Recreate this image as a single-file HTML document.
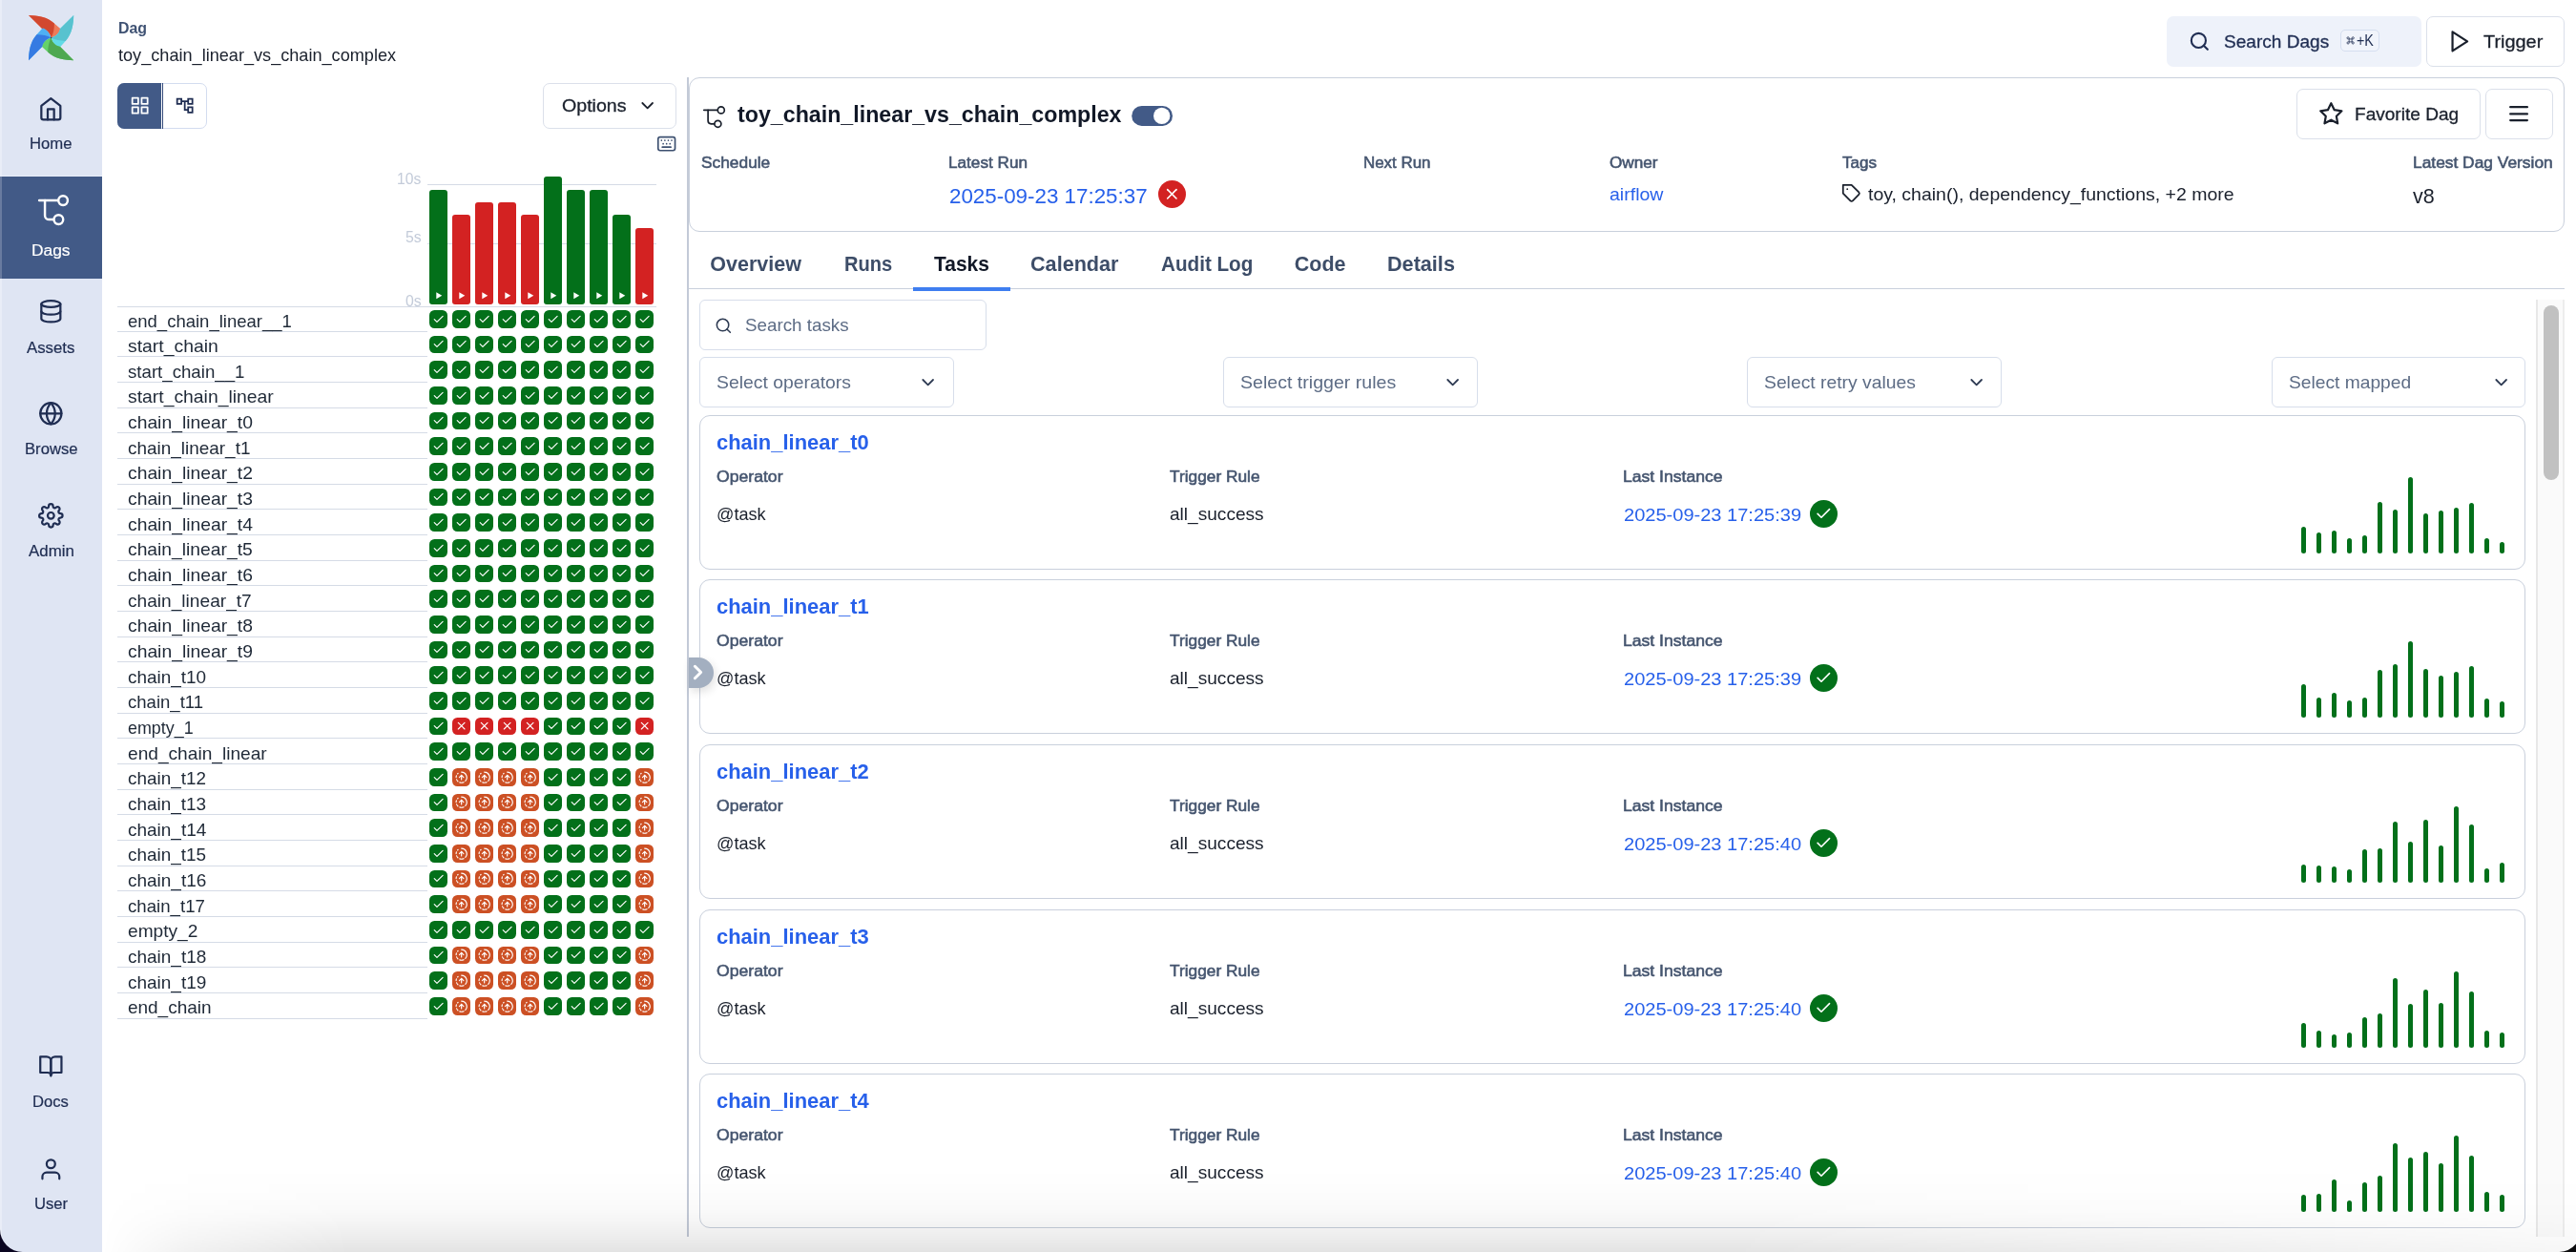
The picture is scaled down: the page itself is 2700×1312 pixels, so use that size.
<!DOCTYPE html>
<html><head><meta charset="utf-8"><title>toy_chain_linear_vs_chain_complex - Airflow</title>
<style>
html,body{margin:0;padding:0;}
body{width:2700px;height:1312px;overflow:hidden;background:#fff;position:relative;font-family:"Liberation Sans",sans-serif;}
.b{position:absolute;box-sizing:border-box;}
.t{position:absolute;white-space:nowrap;transform-origin:0 50%;font-family:"Liberation Sans",sans-serif;}
svg{overflow:visible;}
</style></head><body>
<div class="b" style="left:0;top:0;width:2700px;height:1312px;background:#fff;overflow:hidden;will-change:transform;" id="win">
<div class="b" style="left:0.00px;top:0.00px;width:106.70px;height:1312.00px;background:#dfe5f3;"></div>
<div class="b" style="left:0.00px;top:0.00px;width:2.00px;height:1312.00px;background:#e9edf7;"></div>
<div class="b" style="left:0.00px;top:185.20px;width:106.70px;height:106.80px;background:#425a87;"></div>
<div class="b" style="left:0.00px;top:185.20px;width:2.00px;height:106.80px;background:#697ba0;"></div>
<div class="b" style="left:0.00px;top:184.00px;width:106.70px;height:1.20px;background:#e9eef9;"></div>
<svg class="b" style="left:29.95px;top:15.95px;" width="47.20" height="47.20" viewBox="0 0 47.2 47.2"><g transform="rotate(0 23.6 23.6)"><path fill="#ee7b5a" d="M0,0 C9,0.2 19.5,1.6 26.9,8.5 L33.2,14.1 Q34,14.8 33.4,15.8 C32,19 28.5,22.3 23.6,23.6 C22.8,20 20.5,15.5 14.1,14.1 Z"/><path fill="#d2482f" d="M0,0 C9,0.2 19.5,1.6 26.9,8.5 C27,14 26,19 23.6,23.6 C22.8,20 20.5,15.5 14.1,14.1 Z"/></g><g transform="rotate(90 23.6 23.6)"><path fill="#62dbe6" d="M0,0 C9,0.2 19.5,1.6 26.9,8.5 L33.2,14.1 Q34,14.8 33.4,15.8 C32,19 28.5,22.3 23.6,23.6 C22.8,20 20.5,15.5 14.1,14.1 Z"/><path fill="#58c2cf" d="M0,0 C9,0.2 19.5,1.6 26.9,8.5 C27,14 26,19 23.6,23.6 C22.8,20 20.5,15.5 14.1,14.1 Z"/></g><g transform="rotate(180 23.6 23.6)"><path fill="#65d169" d="M0,0 C9,0.2 19.5,1.6 26.9,8.5 L33.2,14.1 Q34,14.8 33.4,15.8 C32,19 28.5,22.3 23.6,23.6 C22.8,20 20.5,15.5 14.1,14.1 Z"/><path fill="#4ea851" d="M0,0 C9,0.2 19.5,1.6 26.9,8.5 C27,14 26,19 23.6,23.6 C22.8,20 20.5,15.5 14.1,14.1 Z"/></g><g transform="rotate(270 23.6 23.6)"><path fill="#4fb0f3" d="M0,0 C9,0.2 19.5,1.6 26.9,8.5 L33.2,14.1 Q34,14.8 33.4,15.8 C32,19 28.5,22.3 23.6,23.6 C22.8,20 20.5,15.5 14.1,14.1 Z"/><path fill="#367be2" d="M0,0 C9,0.2 19.5,1.6 26.9,8.5 C27,14 26,19 23.6,23.6 C22.8,20 20.5,15.5 14.1,14.1 Z"/></g><circle cx="23.6" cy="23.6" r="0.8" fill="#3a3f4a"/></svg>
<svg class="b" style="left:40.10px;top:100.50px;" width="26.67" height="26.67" viewBox="0 0 24 24"><g fill="none" stroke="#1f2d52" stroke-width="2" stroke-linecap="round" stroke-linejoin="round"><path d="M3 9l9-7 9 7v11a2 2 0 0 1-2 2H5a2 2 0 0 1-2-2z"/><polyline points="9 22 9 12 15 12 15 22"/></g></svg>
<span class="t" style="left:31.10px;top:143.00px;font-size:16px;line-height:16px;color:#1f2d52;-webkit-text-stroke:0.2px #1f2d52;transform:scaleX(1.0433);">Home</span>
<svg class="b" style="left:39.60px;top:204.40px;" width="32.20" height="32.20" viewBox="0 0 23.2 23.2"><g fill="none" stroke="#ffffff" stroke-width="1.75" stroke-linecap="round" stroke-linejoin="round"><path d="M0.8 4.3H14.9"/><circle cx="18.8" cy="4.4" r="3.5"/><path d="M5.1 4.3V15.6a3.2 3.2 0 0 0 3.2 3.2H11.6"/><circle cx="15.4" cy="18.8" r="3.5"/></g></svg>
<span class="t" style="left:33.20px;top:255.00px;font-size:16px;line-height:16px;color:#ffffff;-webkit-text-stroke:0.2px #ffffff;transform:scaleX(1.0846);">Dags</span>
<svg class="b" style="left:40.10px;top:313.20px;" width="26.67" height="26.67" viewBox="0 0 24 24"><g fill="none" stroke="#1f2d52" stroke-width="2" stroke-linecap="round" stroke-linejoin="round"><ellipse cx="12" cy="5" rx="9" ry="3"/><path d="M21 12c0 1.66-4 3-9 3s-9-1.34-9-3"/><path d="M3 5v14c0 1.66 4 3 9 3s9-1.34 9-3V5"/></g></svg>
<span class="t" style="left:28.20px;top:357.00px;font-size:16px;line-height:16px;color:#1f2d52;-webkit-text-stroke:0.2px #1f2d52;transform:scaleX(1.0500);">Assets</span>
<svg class="b" style="left:40.10px;top:419.90px;" width="26.67" height="26.67" viewBox="0 0 24 24"><g fill="none" stroke="#1f2d52" stroke-width="2" stroke-linecap="round" stroke-linejoin="round"><circle cx="12" cy="12" r="10"/><line x1="2" y1="12" x2="22" y2="12"/><path d="M12 2a15.3 15.3 0 0 1 4 10 15.3 15.3 0 0 1-4 10 15.3 15.3 0 0 1-4-10 15.3 15.3 0 0 1 4-10z"/></g></svg>
<span class="t" style="left:25.60px;top:463.00px;font-size:16px;line-height:16px;color:#1f2d52;-webkit-text-stroke:0.2px #1f2d52;transform:scaleX(1.0404);">Browse</span>
<svg class="b" style="left:40.10px;top:526.70px;" width="26.67" height="26.67" viewBox="0 0 24 24"><g fill="none" stroke="#1f2d52" stroke-width="2" stroke-linecap="round" stroke-linejoin="round"><circle cx="12" cy="12" r="3"/><path d="M19.4 15a1.65 1.65 0 0 0 .33 1.82l.06.06a2 2 0 0 1 0 2.83 2 2 0 0 1-2.83 0l-.06-.06a1.65 1.65 0 0 0-1.82-.33 1.65 1.65 0 0 0-1 1.51V21a2 2 0 0 1-2 2 2 2 0 0 1-2-2v-.09A1.65 1.65 0 0 0 9 19.4a1.65 1.65 0 0 0-1.82.33l-.06.06a2 2 0 0 1-2.83 0 2 2 0 0 1 0-2.83l.06-.06a1.65 1.65 0 0 0 .33-1.82 1.65 1.65 0 0 0-1.51-1H3a2 2 0 0 1-2-2 2 2 0 0 1 2-2h.09A1.65 1.65 0 0 0 4.6 9a1.65 1.65 0 0 0-.33-1.82l-.06-.06a2 2 0 0 1 0-2.83 2 2 0 0 1 2.83 0l.06.06a1.65 1.65 0 0 0 1.82.33H9a1.65 1.65 0 0 0 1-1.51V3a2 2 0 0 1 2-2 2 2 0 0 1 2 2v.09a1.65 1.65 0 0 0 1 1.51 1.65 1.65 0 0 0 1.82-.33l.06-.06a2 2 0 0 1 2.83 0 2 2 0 0 1 0 2.83l-.06.06a1.65 1.65 0 0 0-.33 1.82V9a1.65 1.65 0 0 0 1.51 1H21a2 2 0 0 1 2 2 2 2 0 0 1-2 2h-.09a1.65 1.65 0 0 0-1.51 1z"/></g></svg>
<span class="t" style="left:29.60px;top:570.00px;font-size:16px;line-height:16px;color:#1f2d52;-webkit-text-stroke:0.2px #1f2d52;transform:scaleX(1.0541);">Admin</span>
<svg class="b" style="left:40.10px;top:1104.10px;" width="26.67" height="26.67" viewBox="0 0 24 24"><g fill="none" stroke="#1f2d52" stroke-width="2" stroke-linecap="round" stroke-linejoin="round"><path d="M2 3h6a4 4 0 0 1 4 4v14a3 3 0 0 0-3-3H2z"/><path d="M22 3h-6a4 4 0 0 0-4 4v14a3 3 0 0 1 3-3h7z"/></g></svg>
<span class="t" style="left:34.20px;top:1147.00px;font-size:16px;line-height:16px;color:#1f2d52;-webkit-text-stroke:0.2px #1f2d52;transform:scaleX(1.0384);">Docs</span>
<svg class="b" style="left:40.10px;top:1211.80px;" width="26.67" height="26.67" viewBox="0 0 24 24"><g fill="none" stroke="#1f2d52" stroke-width="2" stroke-linecap="round" stroke-linejoin="round"><path d="M20 21v-2a4 4 0 0 0-4-4H8a4 4 0 0 0-4 4v2"/><circle cx="12" cy="7" r="4"/></g></svg>
<span class="t" style="left:35.80px;top:1254.00px;font-size:16px;line-height:16px;color:#1f2d52;-webkit-text-stroke:0.2px #1f2d52;transform:scaleX(1.0400);">User</span>
<span class="t" style="left:123.70px;top:21.00px;font-size:16.5px;line-height:16.5px;color:#3f5273;font-weight:700;transform:scaleX(0.9632);">Dag</span>
<span class="t" style="left:123.70px;top:48.00px;font-size:19px;line-height:19px;color:#1a202c;transform:scaleX(0.9536);">toy_chain_linear_vs_chain_complex</span>
<div class="b" style="left:2271.00px;top:17.00px;width:267.00px;height:53.00px;background:#eef2fa;border-radius:7px;"></div>
<svg class="b" style="left:2294.20px;top:31.90px;" width="22.70" height="22.70" viewBox="0 0 24 24"><g fill="none" stroke="#1f2d52" stroke-width="2.2" stroke-linecap="round" stroke-linejoin="round"><circle cx="11" cy="11" r="8"/><line x1="21" y1="21" x2="16.65" y2="16.65"/></g></svg>
<span class="t" style="left:2331.20px;top:34.00px;font-size:19px;line-height:19px;color:#1f2d52;-webkit-text-stroke:0.3px #1f2d52;transform:scaleX(1.0032);">Search Dags</span>
<div class="b" style="left:2453.20px;top:31.20px;width:40.50px;height:23.10px;background:#f1f4fb;border:1px solid #d5def0;border-radius:5px;"></div>
<svg class="b" style="left:2458.70px;top:37.70px;" width="9.30" height="8.80" viewBox="0 0 24 24"><path fill="none" stroke="#1f2d52" stroke-width="2.1" d="M8 8V5a3 3 0 1 0-3 3h14a3 3 0 1 0-3-3v14a3 3 0 1 0 3-3H5a3 3 0 1 0 3 3z"/></svg>
<span class="t" style="left:2469.60px;top:35.00px;font-size:16px;line-height:16px;color:#1f2d52;transform:scaleX(0.8950);">+K</span>
<div class="b" style="left:2543.00px;top:17.00px;width:145.00px;height:53.00px;background:#fff;border:1px solid #dbe0ea;border-radius:7px;"></div>
<svg class="b" style="left:2564.60px;top:30.00px;" width="26.67" height="26.67" viewBox="0 0 24 24"><g fill="none" stroke="#1a202c" stroke-width="2" stroke-linecap="round" stroke-linejoin="round"><polygon points="5 3 19 12 5 21 5 3"/></g></svg>
<span class="t" style="left:2603.20px;top:34.00px;font-size:19px;line-height:19px;color:#1a202c;-webkit-text-stroke:0.3px #1a202c;transform:scaleX(1.0471);">Trigger</span>
<div class="b" style="left:123.00px;top:87.00px;width:94.00px;height:48.00px;background:#fff;border:1px solid #d3dcef;border-radius:7px;"></div>
<div class="b" style="left:123.00px;top:87.00px;width:46.00px;height:48.00px;background:#425a87;border-radius:7px 0 0 7px;"></div>
<div class="b" style="left:169.60px;top:87.00px;width:1.20px;height:48.00px;background:#33497a;"></div>
<svg class="b" style="left:136.20px;top:100.00px;" width="21.33" height="21.33" viewBox="0 0 24 24"><g fill="none" stroke="#ffffff" stroke-width="2" stroke-linecap="round" stroke-linejoin="round"><rect x="3" y="3" width="7" height="7"/><rect x="14" y="3" width="7" height="7"/><rect x="14" y="14" width="7" height="7"/><rect x="3" y="14" width="7" height="7"/></g></svg>
<svg class="b" style="left:182.70px;top:99.90px;" width="21.33" height="21.33" viewBox="0 0 24 24"><path fill="#1f2d52" d="M22 11V3h-7v3H9V3H2v8h7V8h2v10h4v3h7v-8h-7v3h-2V8h2v3h7zM7 9H4V5h3v4zm10 6h3v4h-3v-4zm0-10h3v4h-3V5z"/></svg>
<div class="b" style="left:569.00px;top:87.00px;width:140.00px;height:48.00px;background:#fff;border:1px solid #dbe0ea;border-radius:7px;"></div>
<span class="t" style="left:589.20px;top:101.00px;font-size:19px;line-height:19px;color:#1a202c;-webkit-text-stroke:0.3px #1a202c;transform:scaleX(1.0321);">Options</span>
<svg class="b" style="left:667.80px;top:99.90px;" width="21.33" height="21.33" viewBox="0 0 24 24"><g fill="none" stroke="#1a202c" stroke-width="2" stroke-linecap="round" stroke-linejoin="round"><polyline points="6 9 12 15 18 9"/></g></svg>
<svg class="b" style="left:688.10px;top:139.90px;" width="21.33" height="21.33" viewBox="0 0 24 24"><g fill="none" stroke="#3d5070" stroke-width="1.9" stroke-linecap="round" stroke-linejoin="round"><rect x="2" y="4" width="20" height="16" rx="2.5"/><path d="M6 8h.01M10 8h.01M14 8h.01M18 8h.01M8 12h.01M12 12h.01M16 12h.01M7 16h10"/></g></svg>
<div class="b" style="left:720.00px;top:81.00px;width:2.00px;height:1215.00px;background:#c3cad7;"></div>
<div class="b" style="left:722.00px;top:81.00px;width:1966.00px;height:162.00px;background:#fff;border:1px solid #c9d0dc;border-radius:11px;"></div>
<svg class="b" style="left:737.00px;top:111.00px;" width="23.20" height="23.20" viewBox="0 0 23.2 23.2"><g fill="none" stroke="#1a202c" stroke-width="1.7" stroke-linecap="round" stroke-linejoin="round"><path d="M0.8 4.3H14.9"/><circle cx="18.8" cy="4.4" r="3.5"/><path d="M5.1 4.3V15.6a3.2 3.2 0 0 0 3.2 3.2H11.6"/><circle cx="15.4" cy="18.8" r="3.5"/></g></svg>
<span class="t" style="left:772.70px;top:108.00px;font-size:24px;line-height:24px;color:#111827;font-weight:700;transform:scaleX(0.9670);">toy_chain_linear_vs_chain_complex</span>
<svg class="b" style="left:1186.00px;top:110.00px;" width="44.00" height="23.00" viewBox="1186 110 44 23"><rect x="1186.2" y="111" width="42.8" height="20.9" rx="10.45" fill="#425a87"/><circle cx="1217.7" cy="121.45" r="8.65" fill="#fff"/></svg>
<div class="b" style="left:2407.00px;top:93.00px;width:193.00px;height:53.00px;background:#fff;border:1px solid #dbe0ea;border-radius:7px;"></div>
<svg class="b" style="left:2430.00px;top:106.30px;" width="26.67" height="26.67" viewBox="0 0 24 24"><g fill="none" stroke="#1a202c" stroke-width="2" stroke-linecap="round" stroke-linejoin="round"><polygon points="12 2 15.09 8.26 22 9.27 17 14.14 18.18 21.02 12 17.77 5.82 21.02 7 14.14 2 9.27 8.91 8.26 12 2"/></g></svg>
<span class="t" style="left:2467.80px;top:110.00px;font-size:19px;line-height:19px;color:#1a202c;-webkit-text-stroke:0.3px #1a202c;transform:scaleX(1.0032);">Favorite Dag</span>
<div class="b" style="left:2605.00px;top:93.00px;width:71.00px;height:53.00px;background:#fff;border:1px solid #dbe0ea;border-radius:7px;"></div>
<svg class="b" style="left:2630.20px;top:110.00px;" width="20.10" height="18.00" viewBox="0 0 20.1 18"><g stroke="#1a202c" stroke-width="2.3" stroke-linecap="round"><line x1="1.2" y1="2.2" x2="18.9" y2="2.2"/><line x1="1.2" y1="9.4" x2="18.9" y2="9.4"/><line x1="1.2" y1="16.1" x2="18.9" y2="16.1"/></g></svg>
<span class="t" style="left:734.50px;top:162.00px;font-size:16.5px;line-height:16.5px;color:#45556f;-webkit-text-stroke:0.55px #45556f;transform:scaleX(1.0502);">Schedule</span>
<span class="t" style="left:994.00px;top:162.00px;font-size:16.5px;line-height:16.5px;color:#45556f;-webkit-text-stroke:0.55px #45556f;transform:scaleX(1.0395);">Latest Run</span>
<span class="t" style="left:1429.40px;top:162.00px;font-size:16.5px;line-height:16.5px;color:#45556f;-webkit-text-stroke:0.55px #45556f;transform:scaleX(1.0240);">Next Run</span>
<span class="t" style="left:1687.30px;top:162.00px;font-size:16.5px;line-height:16.5px;color:#45556f;-webkit-text-stroke:0.55px #45556f;transform:scaleX(1.0392);">Owner</span>
<span class="t" style="left:1931.10px;top:162.00px;font-size:16.5px;line-height:16.5px;color:#45556f;-webkit-text-stroke:0.55px #45556f;transform:scaleX(1.0331);">Tags</span>
<span class="t" style="left:2528.70px;top:162.00px;font-size:16.5px;line-height:16.5px;color:#45556f;-webkit-text-stroke:0.55px #45556f;transform:scaleX(1.0523);">Latest Dag Version</span>
<span class="t" style="left:994.70px;top:196.00px;font-size:21.5px;line-height:21.5px;color:#2760ea;transform:scaleX(1.0398);">2025-09-23 17:25:37</span>
<div class="b" style="left:1214.10px;top:188.90px;width:29.00px;height:29.00px;background:#d32222;border-radius:50%;"></div>
<svg class="b" style="left:1219.20px;top:194.10px;" width="18.67" height="18.67" viewBox="0 0 24 24"><g fill="none" stroke="#ffffff" stroke-width="2.1" stroke-linecap="round" stroke-linejoin="round"><line x1="18" y1="6" x2="6" y2="18"/><line x1="6" y1="6" x2="18" y2="18"/></g></svg>
<span class="t" style="left:1687.30px;top:194.00px;font-size:19px;line-height:19px;color:#2760ea;transform:scaleX(1.0281);">airflow</span>
<svg class="b" style="left:1930.20px;top:192.30px;" width="21.33" height="21.33" viewBox="0 0 24 24"><g fill="none" stroke="#1a202c" stroke-width="2" stroke-linecap="round" stroke-linejoin="round"><path d="M20.59 13.41l-7.17 7.17a2 2 0 0 1-2.83 0L2 12V2h10l8.59 8.59a2 2 0 0 1 0 2.82z"/><line x1="7" y1="7" x2="7.01" y2="7"/></g></svg>
<span class="t" style="left:1958.00px;top:194.00px;font-size:19px;line-height:19px;color:#1a202c;transform:scaleX(1.0254);">toy, chain(), dependency_functions, +2 more</span>
<span class="t" style="left:2528.90px;top:196.00px;font-size:21.5px;line-height:21.5px;color:#1a202c;">v8</span>
<div class="b" style="left:722.00px;top:302.00px;width:1966.00px;height:1.00px;background:#c9d0dc;"></div>
<span class="t" style="left:744.30px;top:267.00px;font-size:21.5px;line-height:21.5px;color:#3d4d68;font-weight:700;">Overview</span>
<span class="t" style="left:884.50px;top:267.00px;font-size:21.5px;line-height:21.5px;color:#3d4d68;font-weight:700;transform:scaleX(0.9358);">Runs</span>
<span class="t" style="left:979.00px;top:267.00px;font-size:21.5px;line-height:21.5px;color:#111827;font-weight:700;transform:scaleX(0.9755);">Tasks</span>
<span class="t" style="left:1080.40px;top:267.00px;font-size:21.5px;line-height:21.5px;color:#3d4d68;font-weight:700;transform:scaleX(1.0054);">Calendar</span>
<span class="t" style="left:1216.70px;top:267.00px;font-size:21.5px;line-height:21.5px;color:#3d4d68;font-weight:700;transform:scaleX(0.9606);">Audit Log</span>
<span class="t" style="left:1356.80px;top:267.00px;font-size:21.5px;line-height:21.5px;color:#3d4d68;font-weight:700;">Code</span>
<span class="t" style="left:1453.70px;top:267.00px;font-size:21.5px;line-height:21.5px;color:#3d4d68;font-weight:700;transform:scaleX(1.0057);">Details</span>
<div class="b" style="left:957.00px;top:301.00px;width:102.00px;height:4.00px;background:#3f7ef0;"></div>
<span class="t" style="left:416.40px;top:180.00px;font-size:16px;line-height:16px;color:#c3cbd9;transform:scaleX(0.9786);">10s</span>
<span class="t" style="left:424.80px;top:241.00px;font-size:16px;line-height:16px;color:#c3cbd9;transform:scaleX(0.9882);">5s</span>
<span class="t" style="left:424.80px;top:308.00px;font-size:16px;line-height:16px;color:#c3cbd9;transform:scaleX(0.9882);">0s</span>
<div class="b" style="left:448.00px;top:193.00px;width:239.80px;height:1.00px;background:#d5dbe6;"></div>
<div class="b" style="left:448.00px;top:255.00px;width:239.80px;height:1.00px;background:#d5dbe6;"></div>
<div class="b" style="left:122.90px;top:321.00px;width:564.90px;height:1.00px;background:#d5dbe6;"></div>
<div class="b" style="left:450.00px;top:199.00px;width:19.00px;height:119.60px;background:#03701a;border-radius:3px;"></div>
<svg class="b" style="left:456.90px;top:306.00px;" width="6.60" height="7.60" viewBox="0 0 6.6 7.6"><path fill="#fff" d="M0.3 0.3 L6.3 3.8 L0.3 7.3 Z"/></svg>
<div class="b" style="left:474.00px;top:225.00px;width:19.00px;height:93.60px;background:#d32222;border-radius:3px;"></div>
<svg class="b" style="left:480.90px;top:306.00px;" width="6.60" height="7.60" viewBox="0 0 6.6 7.6"><path fill="#fff" d="M0.3 0.3 L6.3 3.8 L0.3 7.3 Z"/></svg>
<div class="b" style="left:498.00px;top:212.00px;width:19.00px;height:106.60px;background:#d32222;border-radius:3px;"></div>
<svg class="b" style="left:504.90px;top:306.00px;" width="6.60" height="7.60" viewBox="0 0 6.6 7.6"><path fill="#fff" d="M0.3 0.3 L6.3 3.8 L0.3 7.3 Z"/></svg>
<div class="b" style="left:522.00px;top:212.00px;width:19.00px;height:106.60px;background:#d32222;border-radius:3px;"></div>
<svg class="b" style="left:528.90px;top:306.00px;" width="6.60" height="7.60" viewBox="0 0 6.6 7.6"><path fill="#fff" d="M0.3 0.3 L6.3 3.8 L0.3 7.3 Z"/></svg>
<div class="b" style="left:546.00px;top:225.00px;width:19.00px;height:93.60px;background:#d32222;border-radius:3px;"></div>
<svg class="b" style="left:552.90px;top:306.00px;" width="6.60" height="7.60" viewBox="0 0 6.6 7.6"><path fill="#fff" d="M0.3 0.3 L6.3 3.8 L0.3 7.3 Z"/></svg>
<div class="b" style="left:570.00px;top:184.90px;width:19.00px;height:133.70px;background:#03701a;border-radius:3px;"></div>
<svg class="b" style="left:576.90px;top:306.00px;" width="6.60" height="7.60" viewBox="0 0 6.6 7.6"><path fill="#fff" d="M0.3 0.3 L6.3 3.8 L0.3 7.3 Z"/></svg>
<div class="b" style="left:594.00px;top:199.00px;width:19.00px;height:119.60px;background:#03701a;border-radius:3px;"></div>
<svg class="b" style="left:600.90px;top:306.00px;" width="6.60" height="7.60" viewBox="0 0 6.6 7.6"><path fill="#fff" d="M0.3 0.3 L6.3 3.8 L0.3 7.3 Z"/></svg>
<div class="b" style="left:618.00px;top:199.00px;width:19.00px;height:119.60px;background:#03701a;border-radius:3px;"></div>
<svg class="b" style="left:624.90px;top:306.00px;" width="6.60" height="7.60" viewBox="0 0 6.6 7.6"><path fill="#fff" d="M0.3 0.3 L6.3 3.8 L0.3 7.3 Z"/></svg>
<div class="b" style="left:642.00px;top:225.00px;width:19.00px;height:93.60px;background:#03701a;border-radius:3px;"></div>
<svg class="b" style="left:648.90px;top:306.00px;" width="6.60" height="7.60" viewBox="0 0 6.6 7.6"><path fill="#fff" d="M0.3 0.3 L6.3 3.8 L0.3 7.3 Z"/></svg>
<div class="b" style="left:666.00px;top:239.00px;width:19.00px;height:79.60px;background:#d32222;border-radius:3px;"></div>
<svg class="b" style="left:672.90px;top:306.00px;" width="6.60" height="7.60" viewBox="0 0 6.6 7.6"><path fill="#fff" d="M0.3 0.3 L6.3 3.8 L0.3 7.3 Z"/></svg>
<div class="b" style="left:122.90px;top:347.00px;width:325.10px;height:1.00px;background:#d5dbe6;"></div>
<span class="t" style="left:133.90px;top:327.00px;font-size:19px;line-height:19px;color:#1f2937;transform:scaleX(0.9739);">end_chain_linear__1</span>
<div class="b" style="left:450.00px;top:324.90px;width:19.00px;height:18.67px;background:#03701a;border-radius:5.4px;"></div>
<svg class="b" style="left:452.83px;top:327.56px;" width="13.33" height="13.33" viewBox="0 0 24 24"><g fill="none" stroke="#ffffff" stroke-width="2.1" stroke-linecap="round" stroke-linejoin="round"><polyline points="20 6 9 17 4 12"/></g></svg>
<div class="b" style="left:474.00px;top:324.90px;width:19.00px;height:18.67px;background:#03701a;border-radius:5.4px;"></div>
<svg class="b" style="left:476.83px;top:327.56px;" width="13.33" height="13.33" viewBox="0 0 24 24"><g fill="none" stroke="#ffffff" stroke-width="2.1" stroke-linecap="round" stroke-linejoin="round"><polyline points="20 6 9 17 4 12"/></g></svg>
<div class="b" style="left:498.00px;top:324.90px;width:19.00px;height:18.67px;background:#03701a;border-radius:5.4px;"></div>
<svg class="b" style="left:500.83px;top:327.56px;" width="13.33" height="13.33" viewBox="0 0 24 24"><g fill="none" stroke="#ffffff" stroke-width="2.1" stroke-linecap="round" stroke-linejoin="round"><polyline points="20 6 9 17 4 12"/></g></svg>
<div class="b" style="left:522.00px;top:324.90px;width:19.00px;height:18.67px;background:#03701a;border-radius:5.4px;"></div>
<svg class="b" style="left:524.83px;top:327.56px;" width="13.33" height="13.33" viewBox="0 0 24 24"><g fill="none" stroke="#ffffff" stroke-width="2.1" stroke-linecap="round" stroke-linejoin="round"><polyline points="20 6 9 17 4 12"/></g></svg>
<div class="b" style="left:546.00px;top:324.90px;width:19.00px;height:18.67px;background:#03701a;border-radius:5.4px;"></div>
<svg class="b" style="left:548.83px;top:327.56px;" width="13.33" height="13.33" viewBox="0 0 24 24"><g fill="none" stroke="#ffffff" stroke-width="2.1" stroke-linecap="round" stroke-linejoin="round"><polyline points="20 6 9 17 4 12"/></g></svg>
<div class="b" style="left:570.00px;top:324.90px;width:19.00px;height:18.67px;background:#03701a;border-radius:5.4px;"></div>
<svg class="b" style="left:572.83px;top:327.56px;" width="13.33" height="13.33" viewBox="0 0 24 24"><g fill="none" stroke="#ffffff" stroke-width="2.1" stroke-linecap="round" stroke-linejoin="round"><polyline points="20 6 9 17 4 12"/></g></svg>
<div class="b" style="left:594.00px;top:324.90px;width:19.00px;height:18.67px;background:#03701a;border-radius:5.4px;"></div>
<svg class="b" style="left:596.83px;top:327.56px;" width="13.33" height="13.33" viewBox="0 0 24 24"><g fill="none" stroke="#ffffff" stroke-width="2.1" stroke-linecap="round" stroke-linejoin="round"><polyline points="20 6 9 17 4 12"/></g></svg>
<div class="b" style="left:618.00px;top:324.90px;width:19.00px;height:18.67px;background:#03701a;border-radius:5.4px;"></div>
<svg class="b" style="left:620.83px;top:327.56px;" width="13.33" height="13.33" viewBox="0 0 24 24"><g fill="none" stroke="#ffffff" stroke-width="2.1" stroke-linecap="round" stroke-linejoin="round"><polyline points="20 6 9 17 4 12"/></g></svg>
<div class="b" style="left:642.00px;top:324.90px;width:19.00px;height:18.67px;background:#03701a;border-radius:5.4px;"></div>
<svg class="b" style="left:644.83px;top:327.56px;" width="13.33" height="13.33" viewBox="0 0 24 24"><g fill="none" stroke="#ffffff" stroke-width="2.1" stroke-linecap="round" stroke-linejoin="round"><polyline points="20 6 9 17 4 12"/></g></svg>
<div class="b" style="left:666.00px;top:324.90px;width:19.00px;height:18.67px;background:#03701a;border-radius:5.4px;"></div>
<svg class="b" style="left:668.83px;top:327.56px;" width="13.33" height="13.33" viewBox="0 0 24 24"><g fill="none" stroke="#ffffff" stroke-width="2.1" stroke-linecap="round" stroke-linejoin="round"><polyline points="20 6 9 17 4 12"/></g></svg>
<div class="b" style="left:122.90px;top:373.00px;width:325.10px;height:1.00px;background:#d5dbe6;"></div>
<span class="t" style="left:133.90px;top:353.00px;font-size:19px;line-height:19px;color:#1f2937;transform:scaleX(1.0204);">start_chain</span>
<div class="b" style="left:450.00px;top:351.57px;width:19.00px;height:18.67px;background:#03701a;border-radius:5.4px;"></div>
<svg class="b" style="left:452.83px;top:354.23px;" width="13.33" height="13.33" viewBox="0 0 24 24"><g fill="none" stroke="#ffffff" stroke-width="2.1" stroke-linecap="round" stroke-linejoin="round"><polyline points="20 6 9 17 4 12"/></g></svg>
<div class="b" style="left:474.00px;top:351.57px;width:19.00px;height:18.67px;background:#03701a;border-radius:5.4px;"></div>
<svg class="b" style="left:476.83px;top:354.23px;" width="13.33" height="13.33" viewBox="0 0 24 24"><g fill="none" stroke="#ffffff" stroke-width="2.1" stroke-linecap="round" stroke-linejoin="round"><polyline points="20 6 9 17 4 12"/></g></svg>
<div class="b" style="left:498.00px;top:351.57px;width:19.00px;height:18.67px;background:#03701a;border-radius:5.4px;"></div>
<svg class="b" style="left:500.83px;top:354.23px;" width="13.33" height="13.33" viewBox="0 0 24 24"><g fill="none" stroke="#ffffff" stroke-width="2.1" stroke-linecap="round" stroke-linejoin="round"><polyline points="20 6 9 17 4 12"/></g></svg>
<div class="b" style="left:522.00px;top:351.57px;width:19.00px;height:18.67px;background:#03701a;border-radius:5.4px;"></div>
<svg class="b" style="left:524.83px;top:354.23px;" width="13.33" height="13.33" viewBox="0 0 24 24"><g fill="none" stroke="#ffffff" stroke-width="2.1" stroke-linecap="round" stroke-linejoin="round"><polyline points="20 6 9 17 4 12"/></g></svg>
<div class="b" style="left:546.00px;top:351.57px;width:19.00px;height:18.67px;background:#03701a;border-radius:5.4px;"></div>
<svg class="b" style="left:548.83px;top:354.23px;" width="13.33" height="13.33" viewBox="0 0 24 24"><g fill="none" stroke="#ffffff" stroke-width="2.1" stroke-linecap="round" stroke-linejoin="round"><polyline points="20 6 9 17 4 12"/></g></svg>
<div class="b" style="left:570.00px;top:351.57px;width:19.00px;height:18.67px;background:#03701a;border-radius:5.4px;"></div>
<svg class="b" style="left:572.83px;top:354.23px;" width="13.33" height="13.33" viewBox="0 0 24 24"><g fill="none" stroke="#ffffff" stroke-width="2.1" stroke-linecap="round" stroke-linejoin="round"><polyline points="20 6 9 17 4 12"/></g></svg>
<div class="b" style="left:594.00px;top:351.57px;width:19.00px;height:18.67px;background:#03701a;border-radius:5.4px;"></div>
<svg class="b" style="left:596.83px;top:354.23px;" width="13.33" height="13.33" viewBox="0 0 24 24"><g fill="none" stroke="#ffffff" stroke-width="2.1" stroke-linecap="round" stroke-linejoin="round"><polyline points="20 6 9 17 4 12"/></g></svg>
<div class="b" style="left:618.00px;top:351.57px;width:19.00px;height:18.67px;background:#03701a;border-radius:5.4px;"></div>
<svg class="b" style="left:620.83px;top:354.23px;" width="13.33" height="13.33" viewBox="0 0 24 24"><g fill="none" stroke="#ffffff" stroke-width="2.1" stroke-linecap="round" stroke-linejoin="round"><polyline points="20 6 9 17 4 12"/></g></svg>
<div class="b" style="left:642.00px;top:351.57px;width:19.00px;height:18.67px;background:#03701a;border-radius:5.4px;"></div>
<svg class="b" style="left:644.83px;top:354.23px;" width="13.33" height="13.33" viewBox="0 0 24 24"><g fill="none" stroke="#ffffff" stroke-width="2.1" stroke-linecap="round" stroke-linejoin="round"><polyline points="20 6 9 17 4 12"/></g></svg>
<div class="b" style="left:666.00px;top:351.57px;width:19.00px;height:18.67px;background:#03701a;border-radius:5.4px;"></div>
<svg class="b" style="left:668.83px;top:354.23px;" width="13.33" height="13.33" viewBox="0 0 24 24"><g fill="none" stroke="#ffffff" stroke-width="2.1" stroke-linecap="round" stroke-linejoin="round"><polyline points="20 6 9 17 4 12"/></g></svg>
<div class="b" style="left:122.90px;top:400.00px;width:325.10px;height:1.00px;background:#d5dbe6;"></div>
<span class="t" style="left:133.90px;top:380.00px;font-size:19px;line-height:19px;color:#1f2937;transform:scaleX(0.9820);">start_chain__1</span>
<div class="b" style="left:450.00px;top:378.23px;width:19.00px;height:18.67px;background:#03701a;border-radius:5.4px;"></div>
<svg class="b" style="left:452.83px;top:380.89px;" width="13.33" height="13.33" viewBox="0 0 24 24"><g fill="none" stroke="#ffffff" stroke-width="2.1" stroke-linecap="round" stroke-linejoin="round"><polyline points="20 6 9 17 4 12"/></g></svg>
<div class="b" style="left:474.00px;top:378.23px;width:19.00px;height:18.67px;background:#03701a;border-radius:5.4px;"></div>
<svg class="b" style="left:476.83px;top:380.89px;" width="13.33" height="13.33" viewBox="0 0 24 24"><g fill="none" stroke="#ffffff" stroke-width="2.1" stroke-linecap="round" stroke-linejoin="round"><polyline points="20 6 9 17 4 12"/></g></svg>
<div class="b" style="left:498.00px;top:378.23px;width:19.00px;height:18.67px;background:#03701a;border-radius:5.4px;"></div>
<svg class="b" style="left:500.83px;top:380.89px;" width="13.33" height="13.33" viewBox="0 0 24 24"><g fill="none" stroke="#ffffff" stroke-width="2.1" stroke-linecap="round" stroke-linejoin="round"><polyline points="20 6 9 17 4 12"/></g></svg>
<div class="b" style="left:522.00px;top:378.23px;width:19.00px;height:18.67px;background:#03701a;border-radius:5.4px;"></div>
<svg class="b" style="left:524.83px;top:380.89px;" width="13.33" height="13.33" viewBox="0 0 24 24"><g fill="none" stroke="#ffffff" stroke-width="2.1" stroke-linecap="round" stroke-linejoin="round"><polyline points="20 6 9 17 4 12"/></g></svg>
<div class="b" style="left:546.00px;top:378.23px;width:19.00px;height:18.67px;background:#03701a;border-radius:5.4px;"></div>
<svg class="b" style="left:548.83px;top:380.89px;" width="13.33" height="13.33" viewBox="0 0 24 24"><g fill="none" stroke="#ffffff" stroke-width="2.1" stroke-linecap="round" stroke-linejoin="round"><polyline points="20 6 9 17 4 12"/></g></svg>
<div class="b" style="left:570.00px;top:378.23px;width:19.00px;height:18.67px;background:#03701a;border-radius:5.4px;"></div>
<svg class="b" style="left:572.83px;top:380.89px;" width="13.33" height="13.33" viewBox="0 0 24 24"><g fill="none" stroke="#ffffff" stroke-width="2.1" stroke-linecap="round" stroke-linejoin="round"><polyline points="20 6 9 17 4 12"/></g></svg>
<div class="b" style="left:594.00px;top:378.23px;width:19.00px;height:18.67px;background:#03701a;border-radius:5.4px;"></div>
<svg class="b" style="left:596.83px;top:380.89px;" width="13.33" height="13.33" viewBox="0 0 24 24"><g fill="none" stroke="#ffffff" stroke-width="2.1" stroke-linecap="round" stroke-linejoin="round"><polyline points="20 6 9 17 4 12"/></g></svg>
<div class="b" style="left:618.00px;top:378.23px;width:19.00px;height:18.67px;background:#03701a;border-radius:5.4px;"></div>
<svg class="b" style="left:620.83px;top:380.89px;" width="13.33" height="13.33" viewBox="0 0 24 24"><g fill="none" stroke="#ffffff" stroke-width="2.1" stroke-linecap="round" stroke-linejoin="round"><polyline points="20 6 9 17 4 12"/></g></svg>
<div class="b" style="left:642.00px;top:378.23px;width:19.00px;height:18.67px;background:#03701a;border-radius:5.4px;"></div>
<svg class="b" style="left:644.83px;top:380.89px;" width="13.33" height="13.33" viewBox="0 0 24 24"><g fill="none" stroke="#ffffff" stroke-width="2.1" stroke-linecap="round" stroke-linejoin="round"><polyline points="20 6 9 17 4 12"/></g></svg>
<div class="b" style="left:666.00px;top:378.23px;width:19.00px;height:18.67px;background:#03701a;border-radius:5.4px;"></div>
<svg class="b" style="left:668.83px;top:380.89px;" width="13.33" height="13.33" viewBox="0 0 24 24"><g fill="none" stroke="#ffffff" stroke-width="2.1" stroke-linecap="round" stroke-linejoin="round"><polyline points="20 6 9 17 4 12"/></g></svg>
<div class="b" style="left:122.90px;top:427.00px;width:325.10px;height:1.00px;background:#d5dbe6;"></div>
<span class="t" style="left:133.90px;top:406.00px;font-size:19px;line-height:19px;color:#1f2937;transform:scaleX(1.0187);">start_chain_linear</span>
<div class="b" style="left:450.00px;top:404.90px;width:19.00px;height:18.67px;background:#03701a;border-radius:5.4px;"></div>
<svg class="b" style="left:452.83px;top:407.56px;" width="13.33" height="13.33" viewBox="0 0 24 24"><g fill="none" stroke="#ffffff" stroke-width="2.1" stroke-linecap="round" stroke-linejoin="round"><polyline points="20 6 9 17 4 12"/></g></svg>
<div class="b" style="left:474.00px;top:404.90px;width:19.00px;height:18.67px;background:#03701a;border-radius:5.4px;"></div>
<svg class="b" style="left:476.83px;top:407.56px;" width="13.33" height="13.33" viewBox="0 0 24 24"><g fill="none" stroke="#ffffff" stroke-width="2.1" stroke-linecap="round" stroke-linejoin="round"><polyline points="20 6 9 17 4 12"/></g></svg>
<div class="b" style="left:498.00px;top:404.90px;width:19.00px;height:18.67px;background:#03701a;border-radius:5.4px;"></div>
<svg class="b" style="left:500.83px;top:407.56px;" width="13.33" height="13.33" viewBox="0 0 24 24"><g fill="none" stroke="#ffffff" stroke-width="2.1" stroke-linecap="round" stroke-linejoin="round"><polyline points="20 6 9 17 4 12"/></g></svg>
<div class="b" style="left:522.00px;top:404.90px;width:19.00px;height:18.67px;background:#03701a;border-radius:5.4px;"></div>
<svg class="b" style="left:524.83px;top:407.56px;" width="13.33" height="13.33" viewBox="0 0 24 24"><g fill="none" stroke="#ffffff" stroke-width="2.1" stroke-linecap="round" stroke-linejoin="round"><polyline points="20 6 9 17 4 12"/></g></svg>
<div class="b" style="left:546.00px;top:404.90px;width:19.00px;height:18.67px;background:#03701a;border-radius:5.4px;"></div>
<svg class="b" style="left:548.83px;top:407.56px;" width="13.33" height="13.33" viewBox="0 0 24 24"><g fill="none" stroke="#ffffff" stroke-width="2.1" stroke-linecap="round" stroke-linejoin="round"><polyline points="20 6 9 17 4 12"/></g></svg>
<div class="b" style="left:570.00px;top:404.90px;width:19.00px;height:18.67px;background:#03701a;border-radius:5.4px;"></div>
<svg class="b" style="left:572.83px;top:407.56px;" width="13.33" height="13.33" viewBox="0 0 24 24"><g fill="none" stroke="#ffffff" stroke-width="2.1" stroke-linecap="round" stroke-linejoin="round"><polyline points="20 6 9 17 4 12"/></g></svg>
<div class="b" style="left:594.00px;top:404.90px;width:19.00px;height:18.67px;background:#03701a;border-radius:5.4px;"></div>
<svg class="b" style="left:596.83px;top:407.56px;" width="13.33" height="13.33" viewBox="0 0 24 24"><g fill="none" stroke="#ffffff" stroke-width="2.1" stroke-linecap="round" stroke-linejoin="round"><polyline points="20 6 9 17 4 12"/></g></svg>
<div class="b" style="left:618.00px;top:404.90px;width:19.00px;height:18.67px;background:#03701a;border-radius:5.4px;"></div>
<svg class="b" style="left:620.83px;top:407.56px;" width="13.33" height="13.33" viewBox="0 0 24 24"><g fill="none" stroke="#ffffff" stroke-width="2.1" stroke-linecap="round" stroke-linejoin="round"><polyline points="20 6 9 17 4 12"/></g></svg>
<div class="b" style="left:642.00px;top:404.90px;width:19.00px;height:18.67px;background:#03701a;border-radius:5.4px;"></div>
<svg class="b" style="left:644.83px;top:407.56px;" width="13.33" height="13.33" viewBox="0 0 24 24"><g fill="none" stroke="#ffffff" stroke-width="2.1" stroke-linecap="round" stroke-linejoin="round"><polyline points="20 6 9 17 4 12"/></g></svg>
<div class="b" style="left:666.00px;top:404.90px;width:19.00px;height:18.67px;background:#03701a;border-radius:5.4px;"></div>
<svg class="b" style="left:668.83px;top:407.56px;" width="13.33" height="13.33" viewBox="0 0 24 24"><g fill="none" stroke="#ffffff" stroke-width="2.1" stroke-linecap="round" stroke-linejoin="round"><polyline points="20 6 9 17 4 12"/></g></svg>
<div class="b" style="left:122.90px;top:453.00px;width:325.10px;height:1.00px;background:#d5dbe6;"></div>
<span class="t" style="left:133.90px;top:433.00px;font-size:19px;line-height:19px;color:#1f2937;transform:scaleX(1.0159);">chain_linear_t0</span>
<div class="b" style="left:450.00px;top:431.57px;width:19.00px;height:18.67px;background:#03701a;border-radius:5.4px;"></div>
<svg class="b" style="left:452.83px;top:434.23px;" width="13.33" height="13.33" viewBox="0 0 24 24"><g fill="none" stroke="#ffffff" stroke-width="2.1" stroke-linecap="round" stroke-linejoin="round"><polyline points="20 6 9 17 4 12"/></g></svg>
<div class="b" style="left:474.00px;top:431.57px;width:19.00px;height:18.67px;background:#03701a;border-radius:5.4px;"></div>
<svg class="b" style="left:476.83px;top:434.23px;" width="13.33" height="13.33" viewBox="0 0 24 24"><g fill="none" stroke="#ffffff" stroke-width="2.1" stroke-linecap="round" stroke-linejoin="round"><polyline points="20 6 9 17 4 12"/></g></svg>
<div class="b" style="left:498.00px;top:431.57px;width:19.00px;height:18.67px;background:#03701a;border-radius:5.4px;"></div>
<svg class="b" style="left:500.83px;top:434.23px;" width="13.33" height="13.33" viewBox="0 0 24 24"><g fill="none" stroke="#ffffff" stroke-width="2.1" stroke-linecap="round" stroke-linejoin="round"><polyline points="20 6 9 17 4 12"/></g></svg>
<div class="b" style="left:522.00px;top:431.57px;width:19.00px;height:18.67px;background:#03701a;border-radius:5.4px;"></div>
<svg class="b" style="left:524.83px;top:434.23px;" width="13.33" height="13.33" viewBox="0 0 24 24"><g fill="none" stroke="#ffffff" stroke-width="2.1" stroke-linecap="round" stroke-linejoin="round"><polyline points="20 6 9 17 4 12"/></g></svg>
<div class="b" style="left:546.00px;top:431.57px;width:19.00px;height:18.67px;background:#03701a;border-radius:5.4px;"></div>
<svg class="b" style="left:548.83px;top:434.23px;" width="13.33" height="13.33" viewBox="0 0 24 24"><g fill="none" stroke="#ffffff" stroke-width="2.1" stroke-linecap="round" stroke-linejoin="round"><polyline points="20 6 9 17 4 12"/></g></svg>
<div class="b" style="left:570.00px;top:431.57px;width:19.00px;height:18.67px;background:#03701a;border-radius:5.4px;"></div>
<svg class="b" style="left:572.83px;top:434.23px;" width="13.33" height="13.33" viewBox="0 0 24 24"><g fill="none" stroke="#ffffff" stroke-width="2.1" stroke-linecap="round" stroke-linejoin="round"><polyline points="20 6 9 17 4 12"/></g></svg>
<div class="b" style="left:594.00px;top:431.57px;width:19.00px;height:18.67px;background:#03701a;border-radius:5.4px;"></div>
<svg class="b" style="left:596.83px;top:434.23px;" width="13.33" height="13.33" viewBox="0 0 24 24"><g fill="none" stroke="#ffffff" stroke-width="2.1" stroke-linecap="round" stroke-linejoin="round"><polyline points="20 6 9 17 4 12"/></g></svg>
<div class="b" style="left:618.00px;top:431.57px;width:19.00px;height:18.67px;background:#03701a;border-radius:5.4px;"></div>
<svg class="b" style="left:620.83px;top:434.23px;" width="13.33" height="13.33" viewBox="0 0 24 24"><g fill="none" stroke="#ffffff" stroke-width="2.1" stroke-linecap="round" stroke-linejoin="round"><polyline points="20 6 9 17 4 12"/></g></svg>
<div class="b" style="left:642.00px;top:431.57px;width:19.00px;height:18.67px;background:#03701a;border-radius:5.4px;"></div>
<svg class="b" style="left:644.83px;top:434.23px;" width="13.33" height="13.33" viewBox="0 0 24 24"><g fill="none" stroke="#ffffff" stroke-width="2.1" stroke-linecap="round" stroke-linejoin="round"><polyline points="20 6 9 17 4 12"/></g></svg>
<div class="b" style="left:666.00px;top:431.57px;width:19.00px;height:18.67px;background:#03701a;border-radius:5.4px;"></div>
<svg class="b" style="left:668.83px;top:434.23px;" width="13.33" height="13.33" viewBox="0 0 24 24"><g fill="none" stroke="#ffffff" stroke-width="2.1" stroke-linecap="round" stroke-linejoin="round"><polyline points="20 6 9 17 4 12"/></g></svg>
<div class="b" style="left:122.90px;top:480.00px;width:325.10px;height:1.00px;background:#d5dbe6;"></div>
<span class="t" style="left:133.90px;top:460.00px;font-size:19px;line-height:19px;color:#1f2937;transform:scaleX(0.9965);">chain_linear_t1</span>
<div class="b" style="left:450.00px;top:458.24px;width:19.00px;height:18.67px;background:#03701a;border-radius:5.4px;"></div>
<svg class="b" style="left:452.83px;top:460.89px;" width="13.33" height="13.33" viewBox="0 0 24 24"><g fill="none" stroke="#ffffff" stroke-width="2.1" stroke-linecap="round" stroke-linejoin="round"><polyline points="20 6 9 17 4 12"/></g></svg>
<div class="b" style="left:474.00px;top:458.24px;width:19.00px;height:18.67px;background:#03701a;border-radius:5.4px;"></div>
<svg class="b" style="left:476.83px;top:460.89px;" width="13.33" height="13.33" viewBox="0 0 24 24"><g fill="none" stroke="#ffffff" stroke-width="2.1" stroke-linecap="round" stroke-linejoin="round"><polyline points="20 6 9 17 4 12"/></g></svg>
<div class="b" style="left:498.00px;top:458.24px;width:19.00px;height:18.67px;background:#03701a;border-radius:5.4px;"></div>
<svg class="b" style="left:500.83px;top:460.89px;" width="13.33" height="13.33" viewBox="0 0 24 24"><g fill="none" stroke="#ffffff" stroke-width="2.1" stroke-linecap="round" stroke-linejoin="round"><polyline points="20 6 9 17 4 12"/></g></svg>
<div class="b" style="left:522.00px;top:458.24px;width:19.00px;height:18.67px;background:#03701a;border-radius:5.4px;"></div>
<svg class="b" style="left:524.83px;top:460.89px;" width="13.33" height="13.33" viewBox="0 0 24 24"><g fill="none" stroke="#ffffff" stroke-width="2.1" stroke-linecap="round" stroke-linejoin="round"><polyline points="20 6 9 17 4 12"/></g></svg>
<div class="b" style="left:546.00px;top:458.24px;width:19.00px;height:18.67px;background:#03701a;border-radius:5.4px;"></div>
<svg class="b" style="left:548.83px;top:460.89px;" width="13.33" height="13.33" viewBox="0 0 24 24"><g fill="none" stroke="#ffffff" stroke-width="2.1" stroke-linecap="round" stroke-linejoin="round"><polyline points="20 6 9 17 4 12"/></g></svg>
<div class="b" style="left:570.00px;top:458.24px;width:19.00px;height:18.67px;background:#03701a;border-radius:5.4px;"></div>
<svg class="b" style="left:572.83px;top:460.89px;" width="13.33" height="13.33" viewBox="0 0 24 24"><g fill="none" stroke="#ffffff" stroke-width="2.1" stroke-linecap="round" stroke-linejoin="round"><polyline points="20 6 9 17 4 12"/></g></svg>
<div class="b" style="left:594.00px;top:458.24px;width:19.00px;height:18.67px;background:#03701a;border-radius:5.4px;"></div>
<svg class="b" style="left:596.83px;top:460.89px;" width="13.33" height="13.33" viewBox="0 0 24 24"><g fill="none" stroke="#ffffff" stroke-width="2.1" stroke-linecap="round" stroke-linejoin="round"><polyline points="20 6 9 17 4 12"/></g></svg>
<div class="b" style="left:618.00px;top:458.24px;width:19.00px;height:18.67px;background:#03701a;border-radius:5.4px;"></div>
<svg class="b" style="left:620.83px;top:460.89px;" width="13.33" height="13.33" viewBox="0 0 24 24"><g fill="none" stroke="#ffffff" stroke-width="2.1" stroke-linecap="round" stroke-linejoin="round"><polyline points="20 6 9 17 4 12"/></g></svg>
<div class="b" style="left:642.00px;top:458.24px;width:19.00px;height:18.67px;background:#03701a;border-radius:5.4px;"></div>
<svg class="b" style="left:644.83px;top:460.89px;" width="13.33" height="13.33" viewBox="0 0 24 24"><g fill="none" stroke="#ffffff" stroke-width="2.1" stroke-linecap="round" stroke-linejoin="round"><polyline points="20 6 9 17 4 12"/></g></svg>
<div class="b" style="left:666.00px;top:458.24px;width:19.00px;height:18.67px;background:#03701a;border-radius:5.4px;"></div>
<svg class="b" style="left:668.83px;top:460.89px;" width="13.33" height="13.33" viewBox="0 0 24 24"><g fill="none" stroke="#ffffff" stroke-width="2.1" stroke-linecap="round" stroke-linejoin="round"><polyline points="20 6 9 17 4 12"/></g></svg>
<div class="b" style="left:122.90px;top:507.00px;width:325.10px;height:1.00px;background:#d5dbe6;"></div>
<span class="t" style="left:133.90px;top:486.00px;font-size:19px;line-height:19px;color:#1f2937;transform:scaleX(1.0159);">chain_linear_t2</span>
<div class="b" style="left:450.00px;top:484.90px;width:19.00px;height:18.67px;background:#03701a;border-radius:5.4px;"></div>
<svg class="b" style="left:452.83px;top:487.56px;" width="13.33" height="13.33" viewBox="0 0 24 24"><g fill="none" stroke="#ffffff" stroke-width="2.1" stroke-linecap="round" stroke-linejoin="round"><polyline points="20 6 9 17 4 12"/></g></svg>
<div class="b" style="left:474.00px;top:484.90px;width:19.00px;height:18.67px;background:#03701a;border-radius:5.4px;"></div>
<svg class="b" style="left:476.83px;top:487.56px;" width="13.33" height="13.33" viewBox="0 0 24 24"><g fill="none" stroke="#ffffff" stroke-width="2.1" stroke-linecap="round" stroke-linejoin="round"><polyline points="20 6 9 17 4 12"/></g></svg>
<div class="b" style="left:498.00px;top:484.90px;width:19.00px;height:18.67px;background:#03701a;border-radius:5.4px;"></div>
<svg class="b" style="left:500.83px;top:487.56px;" width="13.33" height="13.33" viewBox="0 0 24 24"><g fill="none" stroke="#ffffff" stroke-width="2.1" stroke-linecap="round" stroke-linejoin="round"><polyline points="20 6 9 17 4 12"/></g></svg>
<div class="b" style="left:522.00px;top:484.90px;width:19.00px;height:18.67px;background:#03701a;border-radius:5.4px;"></div>
<svg class="b" style="left:524.83px;top:487.56px;" width="13.33" height="13.33" viewBox="0 0 24 24"><g fill="none" stroke="#ffffff" stroke-width="2.1" stroke-linecap="round" stroke-linejoin="round"><polyline points="20 6 9 17 4 12"/></g></svg>
<div class="b" style="left:546.00px;top:484.90px;width:19.00px;height:18.67px;background:#03701a;border-radius:5.4px;"></div>
<svg class="b" style="left:548.83px;top:487.56px;" width="13.33" height="13.33" viewBox="0 0 24 24"><g fill="none" stroke="#ffffff" stroke-width="2.1" stroke-linecap="round" stroke-linejoin="round"><polyline points="20 6 9 17 4 12"/></g></svg>
<div class="b" style="left:570.00px;top:484.90px;width:19.00px;height:18.67px;background:#03701a;border-radius:5.4px;"></div>
<svg class="b" style="left:572.83px;top:487.56px;" width="13.33" height="13.33" viewBox="0 0 24 24"><g fill="none" stroke="#ffffff" stroke-width="2.1" stroke-linecap="round" stroke-linejoin="round"><polyline points="20 6 9 17 4 12"/></g></svg>
<div class="b" style="left:594.00px;top:484.90px;width:19.00px;height:18.67px;background:#03701a;border-radius:5.4px;"></div>
<svg class="b" style="left:596.83px;top:487.56px;" width="13.33" height="13.33" viewBox="0 0 24 24"><g fill="none" stroke="#ffffff" stroke-width="2.1" stroke-linecap="round" stroke-linejoin="round"><polyline points="20 6 9 17 4 12"/></g></svg>
<div class="b" style="left:618.00px;top:484.90px;width:19.00px;height:18.67px;background:#03701a;border-radius:5.4px;"></div>
<svg class="b" style="left:620.83px;top:487.56px;" width="13.33" height="13.33" viewBox="0 0 24 24"><g fill="none" stroke="#ffffff" stroke-width="2.1" stroke-linecap="round" stroke-linejoin="round"><polyline points="20 6 9 17 4 12"/></g></svg>
<div class="b" style="left:642.00px;top:484.90px;width:19.00px;height:18.67px;background:#03701a;border-radius:5.4px;"></div>
<svg class="b" style="left:644.83px;top:487.56px;" width="13.33" height="13.33" viewBox="0 0 24 24"><g fill="none" stroke="#ffffff" stroke-width="2.1" stroke-linecap="round" stroke-linejoin="round"><polyline points="20 6 9 17 4 12"/></g></svg>
<div class="b" style="left:666.00px;top:484.90px;width:19.00px;height:18.67px;background:#03701a;border-radius:5.4px;"></div>
<svg class="b" style="left:668.83px;top:487.56px;" width="13.33" height="13.33" viewBox="0 0 24 24"><g fill="none" stroke="#ffffff" stroke-width="2.1" stroke-linecap="round" stroke-linejoin="round"><polyline points="20 6 9 17 4 12"/></g></svg>
<div class="b" style="left:122.90px;top:533.00px;width:325.10px;height:1.00px;background:#d5dbe6;"></div>
<span class="t" style="left:133.90px;top:513.00px;font-size:19px;line-height:19px;color:#1f2937;transform:scaleX(1.0159);">chain_linear_t3</span>
<div class="b" style="left:450.00px;top:511.57px;width:19.00px;height:18.67px;background:#03701a;border-radius:5.4px;"></div>
<svg class="b" style="left:452.83px;top:514.23px;" width="13.33" height="13.33" viewBox="0 0 24 24"><g fill="none" stroke="#ffffff" stroke-width="2.1" stroke-linecap="round" stroke-linejoin="round"><polyline points="20 6 9 17 4 12"/></g></svg>
<div class="b" style="left:474.00px;top:511.57px;width:19.00px;height:18.67px;background:#03701a;border-radius:5.4px;"></div>
<svg class="b" style="left:476.83px;top:514.23px;" width="13.33" height="13.33" viewBox="0 0 24 24"><g fill="none" stroke="#ffffff" stroke-width="2.1" stroke-linecap="round" stroke-linejoin="round"><polyline points="20 6 9 17 4 12"/></g></svg>
<div class="b" style="left:498.00px;top:511.57px;width:19.00px;height:18.67px;background:#03701a;border-radius:5.4px;"></div>
<svg class="b" style="left:500.83px;top:514.23px;" width="13.33" height="13.33" viewBox="0 0 24 24"><g fill="none" stroke="#ffffff" stroke-width="2.1" stroke-linecap="round" stroke-linejoin="round"><polyline points="20 6 9 17 4 12"/></g></svg>
<div class="b" style="left:522.00px;top:511.57px;width:19.00px;height:18.67px;background:#03701a;border-radius:5.4px;"></div>
<svg class="b" style="left:524.83px;top:514.23px;" width="13.33" height="13.33" viewBox="0 0 24 24"><g fill="none" stroke="#ffffff" stroke-width="2.1" stroke-linecap="round" stroke-linejoin="round"><polyline points="20 6 9 17 4 12"/></g></svg>
<div class="b" style="left:546.00px;top:511.57px;width:19.00px;height:18.67px;background:#03701a;border-radius:5.4px;"></div>
<svg class="b" style="left:548.83px;top:514.23px;" width="13.33" height="13.33" viewBox="0 0 24 24"><g fill="none" stroke="#ffffff" stroke-width="2.1" stroke-linecap="round" stroke-linejoin="round"><polyline points="20 6 9 17 4 12"/></g></svg>
<div class="b" style="left:570.00px;top:511.57px;width:19.00px;height:18.67px;background:#03701a;border-radius:5.4px;"></div>
<svg class="b" style="left:572.83px;top:514.23px;" width="13.33" height="13.33" viewBox="0 0 24 24"><g fill="none" stroke="#ffffff" stroke-width="2.1" stroke-linecap="round" stroke-linejoin="round"><polyline points="20 6 9 17 4 12"/></g></svg>
<div class="b" style="left:594.00px;top:511.57px;width:19.00px;height:18.67px;background:#03701a;border-radius:5.4px;"></div>
<svg class="b" style="left:596.83px;top:514.23px;" width="13.33" height="13.33" viewBox="0 0 24 24"><g fill="none" stroke="#ffffff" stroke-width="2.1" stroke-linecap="round" stroke-linejoin="round"><polyline points="20 6 9 17 4 12"/></g></svg>
<div class="b" style="left:618.00px;top:511.57px;width:19.00px;height:18.67px;background:#03701a;border-radius:5.4px;"></div>
<svg class="b" style="left:620.83px;top:514.23px;" width="13.33" height="13.33" viewBox="0 0 24 24"><g fill="none" stroke="#ffffff" stroke-width="2.1" stroke-linecap="round" stroke-linejoin="round"><polyline points="20 6 9 17 4 12"/></g></svg>
<div class="b" style="left:642.00px;top:511.57px;width:19.00px;height:18.67px;background:#03701a;border-radius:5.4px;"></div>
<svg class="b" style="left:644.83px;top:514.23px;" width="13.33" height="13.33" viewBox="0 0 24 24"><g fill="none" stroke="#ffffff" stroke-width="2.1" stroke-linecap="round" stroke-linejoin="round"><polyline points="20 6 9 17 4 12"/></g></svg>
<div class="b" style="left:666.00px;top:511.57px;width:19.00px;height:18.67px;background:#03701a;border-radius:5.4px;"></div>
<svg class="b" style="left:668.83px;top:514.23px;" width="13.33" height="13.33" viewBox="0 0 24 24"><g fill="none" stroke="#ffffff" stroke-width="2.1" stroke-linecap="round" stroke-linejoin="round"><polyline points="20 6 9 17 4 12"/></g></svg>
<div class="b" style="left:122.90px;top:560.00px;width:325.10px;height:1.00px;background:#d5dbe6;"></div>
<span class="t" style="left:133.90px;top:540.00px;font-size:19px;line-height:19px;color:#1f2937;transform:scaleX(1.0159);">chain_linear_t4</span>
<div class="b" style="left:450.00px;top:538.24px;width:19.00px;height:18.67px;background:#03701a;border-radius:5.4px;"></div>
<svg class="b" style="left:452.83px;top:540.90px;" width="13.33" height="13.33" viewBox="0 0 24 24"><g fill="none" stroke="#ffffff" stroke-width="2.1" stroke-linecap="round" stroke-linejoin="round"><polyline points="20 6 9 17 4 12"/></g></svg>
<div class="b" style="left:474.00px;top:538.24px;width:19.00px;height:18.67px;background:#03701a;border-radius:5.4px;"></div>
<svg class="b" style="left:476.83px;top:540.90px;" width="13.33" height="13.33" viewBox="0 0 24 24"><g fill="none" stroke="#ffffff" stroke-width="2.1" stroke-linecap="round" stroke-linejoin="round"><polyline points="20 6 9 17 4 12"/></g></svg>
<div class="b" style="left:498.00px;top:538.24px;width:19.00px;height:18.67px;background:#03701a;border-radius:5.4px;"></div>
<svg class="b" style="left:500.83px;top:540.90px;" width="13.33" height="13.33" viewBox="0 0 24 24"><g fill="none" stroke="#ffffff" stroke-width="2.1" stroke-linecap="round" stroke-linejoin="round"><polyline points="20 6 9 17 4 12"/></g></svg>
<div class="b" style="left:522.00px;top:538.24px;width:19.00px;height:18.67px;background:#03701a;border-radius:5.4px;"></div>
<svg class="b" style="left:524.83px;top:540.90px;" width="13.33" height="13.33" viewBox="0 0 24 24"><g fill="none" stroke="#ffffff" stroke-width="2.1" stroke-linecap="round" stroke-linejoin="round"><polyline points="20 6 9 17 4 12"/></g></svg>
<div class="b" style="left:546.00px;top:538.24px;width:19.00px;height:18.67px;background:#03701a;border-radius:5.4px;"></div>
<svg class="b" style="left:548.83px;top:540.90px;" width="13.33" height="13.33" viewBox="0 0 24 24"><g fill="none" stroke="#ffffff" stroke-width="2.1" stroke-linecap="round" stroke-linejoin="round"><polyline points="20 6 9 17 4 12"/></g></svg>
<div class="b" style="left:570.00px;top:538.24px;width:19.00px;height:18.67px;background:#03701a;border-radius:5.4px;"></div>
<svg class="b" style="left:572.83px;top:540.90px;" width="13.33" height="13.33" viewBox="0 0 24 24"><g fill="none" stroke="#ffffff" stroke-width="2.1" stroke-linecap="round" stroke-linejoin="round"><polyline points="20 6 9 17 4 12"/></g></svg>
<div class="b" style="left:594.00px;top:538.24px;width:19.00px;height:18.67px;background:#03701a;border-radius:5.4px;"></div>
<svg class="b" style="left:596.83px;top:540.90px;" width="13.33" height="13.33" viewBox="0 0 24 24"><g fill="none" stroke="#ffffff" stroke-width="2.1" stroke-linecap="round" stroke-linejoin="round"><polyline points="20 6 9 17 4 12"/></g></svg>
<div class="b" style="left:618.00px;top:538.24px;width:19.00px;height:18.67px;background:#03701a;border-radius:5.4px;"></div>
<svg class="b" style="left:620.83px;top:540.90px;" width="13.33" height="13.33" viewBox="0 0 24 24"><g fill="none" stroke="#ffffff" stroke-width="2.1" stroke-linecap="round" stroke-linejoin="round"><polyline points="20 6 9 17 4 12"/></g></svg>
<div class="b" style="left:642.00px;top:538.24px;width:19.00px;height:18.67px;background:#03701a;border-radius:5.4px;"></div>
<svg class="b" style="left:644.83px;top:540.90px;" width="13.33" height="13.33" viewBox="0 0 24 24"><g fill="none" stroke="#ffffff" stroke-width="2.1" stroke-linecap="round" stroke-linejoin="round"><polyline points="20 6 9 17 4 12"/></g></svg>
<div class="b" style="left:666.00px;top:538.24px;width:19.00px;height:18.67px;background:#03701a;border-radius:5.4px;"></div>
<svg class="b" style="left:668.83px;top:540.90px;" width="13.33" height="13.33" viewBox="0 0 24 24"><g fill="none" stroke="#ffffff" stroke-width="2.1" stroke-linecap="round" stroke-linejoin="round"><polyline points="20 6 9 17 4 12"/></g></svg>
<div class="b" style="left:122.90px;top:587.00px;width:325.10px;height:1.00px;background:#d5dbe6;"></div>
<span class="t" style="left:133.90px;top:566.00px;font-size:19px;line-height:19px;color:#1f2937;transform:scaleX(1.0144);">chain_linear_t5</span>
<div class="b" style="left:450.00px;top:564.90px;width:19.00px;height:18.67px;background:#03701a;border-radius:5.4px;"></div>
<svg class="b" style="left:452.83px;top:567.56px;" width="13.33" height="13.33" viewBox="0 0 24 24"><g fill="none" stroke="#ffffff" stroke-width="2.1" stroke-linecap="round" stroke-linejoin="round"><polyline points="20 6 9 17 4 12"/></g></svg>
<div class="b" style="left:474.00px;top:564.90px;width:19.00px;height:18.67px;background:#03701a;border-radius:5.4px;"></div>
<svg class="b" style="left:476.83px;top:567.56px;" width="13.33" height="13.33" viewBox="0 0 24 24"><g fill="none" stroke="#ffffff" stroke-width="2.1" stroke-linecap="round" stroke-linejoin="round"><polyline points="20 6 9 17 4 12"/></g></svg>
<div class="b" style="left:498.00px;top:564.90px;width:19.00px;height:18.67px;background:#03701a;border-radius:5.4px;"></div>
<svg class="b" style="left:500.83px;top:567.56px;" width="13.33" height="13.33" viewBox="0 0 24 24"><g fill="none" stroke="#ffffff" stroke-width="2.1" stroke-linecap="round" stroke-linejoin="round"><polyline points="20 6 9 17 4 12"/></g></svg>
<div class="b" style="left:522.00px;top:564.90px;width:19.00px;height:18.67px;background:#03701a;border-radius:5.4px;"></div>
<svg class="b" style="left:524.83px;top:567.56px;" width="13.33" height="13.33" viewBox="0 0 24 24"><g fill="none" stroke="#ffffff" stroke-width="2.1" stroke-linecap="round" stroke-linejoin="round"><polyline points="20 6 9 17 4 12"/></g></svg>
<div class="b" style="left:546.00px;top:564.90px;width:19.00px;height:18.67px;background:#03701a;border-radius:5.4px;"></div>
<svg class="b" style="left:548.83px;top:567.56px;" width="13.33" height="13.33" viewBox="0 0 24 24"><g fill="none" stroke="#ffffff" stroke-width="2.1" stroke-linecap="round" stroke-linejoin="round"><polyline points="20 6 9 17 4 12"/></g></svg>
<div class="b" style="left:570.00px;top:564.90px;width:19.00px;height:18.67px;background:#03701a;border-radius:5.4px;"></div>
<svg class="b" style="left:572.83px;top:567.56px;" width="13.33" height="13.33" viewBox="0 0 24 24"><g fill="none" stroke="#ffffff" stroke-width="2.1" stroke-linecap="round" stroke-linejoin="round"><polyline points="20 6 9 17 4 12"/></g></svg>
<div class="b" style="left:594.00px;top:564.90px;width:19.00px;height:18.67px;background:#03701a;border-radius:5.4px;"></div>
<svg class="b" style="left:596.83px;top:567.56px;" width="13.33" height="13.33" viewBox="0 0 24 24"><g fill="none" stroke="#ffffff" stroke-width="2.1" stroke-linecap="round" stroke-linejoin="round"><polyline points="20 6 9 17 4 12"/></g></svg>
<div class="b" style="left:618.00px;top:564.90px;width:19.00px;height:18.67px;background:#03701a;border-radius:5.4px;"></div>
<svg class="b" style="left:620.83px;top:567.56px;" width="13.33" height="13.33" viewBox="0 0 24 24"><g fill="none" stroke="#ffffff" stroke-width="2.1" stroke-linecap="round" stroke-linejoin="round"><polyline points="20 6 9 17 4 12"/></g></svg>
<div class="b" style="left:642.00px;top:564.90px;width:19.00px;height:18.67px;background:#03701a;border-radius:5.4px;"></div>
<svg class="b" style="left:644.83px;top:567.56px;" width="13.33" height="13.33" viewBox="0 0 24 24"><g fill="none" stroke="#ffffff" stroke-width="2.1" stroke-linecap="round" stroke-linejoin="round"><polyline points="20 6 9 17 4 12"/></g></svg>
<div class="b" style="left:666.00px;top:564.90px;width:19.00px;height:18.67px;background:#03701a;border-radius:5.4px;"></div>
<svg class="b" style="left:668.83px;top:567.56px;" width="13.33" height="13.33" viewBox="0 0 24 24"><g fill="none" stroke="#ffffff" stroke-width="2.1" stroke-linecap="round" stroke-linejoin="round"><polyline points="20 6 9 17 4 12"/></g></svg>
<div class="b" style="left:122.90px;top:613.00px;width:325.10px;height:1.00px;background:#d5dbe6;"></div>
<span class="t" style="left:133.90px;top:593.00px;font-size:19px;line-height:19px;color:#1f2937;transform:scaleX(1.0159);">chain_linear_t6</span>
<div class="b" style="left:450.00px;top:591.57px;width:19.00px;height:18.67px;background:#03701a;border-radius:5.4px;"></div>
<svg class="b" style="left:452.83px;top:594.23px;" width="13.33" height="13.33" viewBox="0 0 24 24"><g fill="none" stroke="#ffffff" stroke-width="2.1" stroke-linecap="round" stroke-linejoin="round"><polyline points="20 6 9 17 4 12"/></g></svg>
<div class="b" style="left:474.00px;top:591.57px;width:19.00px;height:18.67px;background:#03701a;border-radius:5.4px;"></div>
<svg class="b" style="left:476.83px;top:594.23px;" width="13.33" height="13.33" viewBox="0 0 24 24"><g fill="none" stroke="#ffffff" stroke-width="2.1" stroke-linecap="round" stroke-linejoin="round"><polyline points="20 6 9 17 4 12"/></g></svg>
<div class="b" style="left:498.00px;top:591.57px;width:19.00px;height:18.67px;background:#03701a;border-radius:5.4px;"></div>
<svg class="b" style="left:500.83px;top:594.23px;" width="13.33" height="13.33" viewBox="0 0 24 24"><g fill="none" stroke="#ffffff" stroke-width="2.1" stroke-linecap="round" stroke-linejoin="round"><polyline points="20 6 9 17 4 12"/></g></svg>
<div class="b" style="left:522.00px;top:591.57px;width:19.00px;height:18.67px;background:#03701a;border-radius:5.4px;"></div>
<svg class="b" style="left:524.83px;top:594.23px;" width="13.33" height="13.33" viewBox="0 0 24 24"><g fill="none" stroke="#ffffff" stroke-width="2.1" stroke-linecap="round" stroke-linejoin="round"><polyline points="20 6 9 17 4 12"/></g></svg>
<div class="b" style="left:546.00px;top:591.57px;width:19.00px;height:18.67px;background:#03701a;border-radius:5.4px;"></div>
<svg class="b" style="left:548.83px;top:594.23px;" width="13.33" height="13.33" viewBox="0 0 24 24"><g fill="none" stroke="#ffffff" stroke-width="2.1" stroke-linecap="round" stroke-linejoin="round"><polyline points="20 6 9 17 4 12"/></g></svg>
<div class="b" style="left:570.00px;top:591.57px;width:19.00px;height:18.67px;background:#03701a;border-radius:5.4px;"></div>
<svg class="b" style="left:572.83px;top:594.23px;" width="13.33" height="13.33" viewBox="0 0 24 24"><g fill="none" stroke="#ffffff" stroke-width="2.1" stroke-linecap="round" stroke-linejoin="round"><polyline points="20 6 9 17 4 12"/></g></svg>
<div class="b" style="left:594.00px;top:591.57px;width:19.00px;height:18.67px;background:#03701a;border-radius:5.4px;"></div>
<svg class="b" style="left:596.83px;top:594.23px;" width="13.33" height="13.33" viewBox="0 0 24 24"><g fill="none" stroke="#ffffff" stroke-width="2.1" stroke-linecap="round" stroke-linejoin="round"><polyline points="20 6 9 17 4 12"/></g></svg>
<div class="b" style="left:618.00px;top:591.57px;width:19.00px;height:18.67px;background:#03701a;border-radius:5.4px;"></div>
<svg class="b" style="left:620.83px;top:594.23px;" width="13.33" height="13.33" viewBox="0 0 24 24"><g fill="none" stroke="#ffffff" stroke-width="2.1" stroke-linecap="round" stroke-linejoin="round"><polyline points="20 6 9 17 4 12"/></g></svg>
<div class="b" style="left:642.00px;top:591.57px;width:19.00px;height:18.67px;background:#03701a;border-radius:5.4px;"></div>
<svg class="b" style="left:644.83px;top:594.23px;" width="13.33" height="13.33" viewBox="0 0 24 24"><g fill="none" stroke="#ffffff" stroke-width="2.1" stroke-linecap="round" stroke-linejoin="round"><polyline points="20 6 9 17 4 12"/></g></svg>
<div class="b" style="left:666.00px;top:591.57px;width:19.00px;height:18.67px;background:#03701a;border-radius:5.4px;"></div>
<svg class="b" style="left:668.83px;top:594.23px;" width="13.33" height="13.33" viewBox="0 0 24 24"><g fill="none" stroke="#ffffff" stroke-width="2.1" stroke-linecap="round" stroke-linejoin="round"><polyline points="20 6 9 17 4 12"/></g></svg>
<div class="b" style="left:122.90px;top:640.00px;width:325.10px;height:1.00px;background:#d5dbe6;"></div>
<span class="t" style="left:133.90px;top:620.00px;font-size:19px;line-height:19px;color:#1f2937;transform:scaleX(1.0066);">chain_linear_t7</span>
<div class="b" style="left:450.00px;top:618.24px;width:19.00px;height:18.67px;background:#03701a;border-radius:5.4px;"></div>
<svg class="b" style="left:452.83px;top:620.90px;" width="13.33" height="13.33" viewBox="0 0 24 24"><g fill="none" stroke="#ffffff" stroke-width="2.1" stroke-linecap="round" stroke-linejoin="round"><polyline points="20 6 9 17 4 12"/></g></svg>
<div class="b" style="left:474.00px;top:618.24px;width:19.00px;height:18.67px;background:#03701a;border-radius:5.4px;"></div>
<svg class="b" style="left:476.83px;top:620.90px;" width="13.33" height="13.33" viewBox="0 0 24 24"><g fill="none" stroke="#ffffff" stroke-width="2.1" stroke-linecap="round" stroke-linejoin="round"><polyline points="20 6 9 17 4 12"/></g></svg>
<div class="b" style="left:498.00px;top:618.24px;width:19.00px;height:18.67px;background:#03701a;border-radius:5.4px;"></div>
<svg class="b" style="left:500.83px;top:620.90px;" width="13.33" height="13.33" viewBox="0 0 24 24"><g fill="none" stroke="#ffffff" stroke-width="2.1" stroke-linecap="round" stroke-linejoin="round"><polyline points="20 6 9 17 4 12"/></g></svg>
<div class="b" style="left:522.00px;top:618.24px;width:19.00px;height:18.67px;background:#03701a;border-radius:5.4px;"></div>
<svg class="b" style="left:524.83px;top:620.90px;" width="13.33" height="13.33" viewBox="0 0 24 24"><g fill="none" stroke="#ffffff" stroke-width="2.1" stroke-linecap="round" stroke-linejoin="round"><polyline points="20 6 9 17 4 12"/></g></svg>
<div class="b" style="left:546.00px;top:618.24px;width:19.00px;height:18.67px;background:#03701a;border-radius:5.4px;"></div>
<svg class="b" style="left:548.83px;top:620.90px;" width="13.33" height="13.33" viewBox="0 0 24 24"><g fill="none" stroke="#ffffff" stroke-width="2.1" stroke-linecap="round" stroke-linejoin="round"><polyline points="20 6 9 17 4 12"/></g></svg>
<div class="b" style="left:570.00px;top:618.24px;width:19.00px;height:18.67px;background:#03701a;border-radius:5.4px;"></div>
<svg class="b" style="left:572.83px;top:620.90px;" width="13.33" height="13.33" viewBox="0 0 24 24"><g fill="none" stroke="#ffffff" stroke-width="2.1" stroke-linecap="round" stroke-linejoin="round"><polyline points="20 6 9 17 4 12"/></g></svg>
<div class="b" style="left:594.00px;top:618.24px;width:19.00px;height:18.67px;background:#03701a;border-radius:5.4px;"></div>
<svg class="b" style="left:596.83px;top:620.90px;" width="13.33" height="13.33" viewBox="0 0 24 24"><g fill="none" stroke="#ffffff" stroke-width="2.1" stroke-linecap="round" stroke-linejoin="round"><polyline points="20 6 9 17 4 12"/></g></svg>
<div class="b" style="left:618.00px;top:618.24px;width:19.00px;height:18.67px;background:#03701a;border-radius:5.4px;"></div>
<svg class="b" style="left:620.83px;top:620.90px;" width="13.33" height="13.33" viewBox="0 0 24 24"><g fill="none" stroke="#ffffff" stroke-width="2.1" stroke-linecap="round" stroke-linejoin="round"><polyline points="20 6 9 17 4 12"/></g></svg>
<div class="b" style="left:642.00px;top:618.24px;width:19.00px;height:18.67px;background:#03701a;border-radius:5.4px;"></div>
<svg class="b" style="left:644.83px;top:620.90px;" width="13.33" height="13.33" viewBox="0 0 24 24"><g fill="none" stroke="#ffffff" stroke-width="2.1" stroke-linecap="round" stroke-linejoin="round"><polyline points="20 6 9 17 4 12"/></g></svg>
<div class="b" style="left:666.00px;top:618.24px;width:19.00px;height:18.67px;background:#03701a;border-radius:5.4px;"></div>
<svg class="b" style="left:668.83px;top:620.90px;" width="13.33" height="13.33" viewBox="0 0 24 24"><g fill="none" stroke="#ffffff" stroke-width="2.1" stroke-linecap="round" stroke-linejoin="round"><polyline points="20 6 9 17 4 12"/></g></svg>
<div class="b" style="left:122.90px;top:667.00px;width:325.10px;height:1.00px;background:#d5dbe6;"></div>
<span class="t" style="left:133.90px;top:646.00px;font-size:19px;line-height:19px;color:#1f2937;transform:scaleX(1.0159);">chain_linear_t8</span>
<div class="b" style="left:450.00px;top:644.90px;width:19.00px;height:18.67px;background:#03701a;border-radius:5.4px;"></div>
<svg class="b" style="left:452.83px;top:647.56px;" width="13.33" height="13.33" viewBox="0 0 24 24"><g fill="none" stroke="#ffffff" stroke-width="2.1" stroke-linecap="round" stroke-linejoin="round"><polyline points="20 6 9 17 4 12"/></g></svg>
<div class="b" style="left:474.00px;top:644.90px;width:19.00px;height:18.67px;background:#03701a;border-radius:5.4px;"></div>
<svg class="b" style="left:476.83px;top:647.56px;" width="13.33" height="13.33" viewBox="0 0 24 24"><g fill="none" stroke="#ffffff" stroke-width="2.1" stroke-linecap="round" stroke-linejoin="round"><polyline points="20 6 9 17 4 12"/></g></svg>
<div class="b" style="left:498.00px;top:644.90px;width:19.00px;height:18.67px;background:#03701a;border-radius:5.4px;"></div>
<svg class="b" style="left:500.83px;top:647.56px;" width="13.33" height="13.33" viewBox="0 0 24 24"><g fill="none" stroke="#ffffff" stroke-width="2.1" stroke-linecap="round" stroke-linejoin="round"><polyline points="20 6 9 17 4 12"/></g></svg>
<div class="b" style="left:522.00px;top:644.90px;width:19.00px;height:18.67px;background:#03701a;border-radius:5.4px;"></div>
<svg class="b" style="left:524.83px;top:647.56px;" width="13.33" height="13.33" viewBox="0 0 24 24"><g fill="none" stroke="#ffffff" stroke-width="2.1" stroke-linecap="round" stroke-linejoin="round"><polyline points="20 6 9 17 4 12"/></g></svg>
<div class="b" style="left:546.00px;top:644.90px;width:19.00px;height:18.67px;background:#03701a;border-radius:5.4px;"></div>
<svg class="b" style="left:548.83px;top:647.56px;" width="13.33" height="13.33" viewBox="0 0 24 24"><g fill="none" stroke="#ffffff" stroke-width="2.1" stroke-linecap="round" stroke-linejoin="round"><polyline points="20 6 9 17 4 12"/></g></svg>
<div class="b" style="left:570.00px;top:644.90px;width:19.00px;height:18.67px;background:#03701a;border-radius:5.4px;"></div>
<svg class="b" style="left:572.83px;top:647.56px;" width="13.33" height="13.33" viewBox="0 0 24 24"><g fill="none" stroke="#ffffff" stroke-width="2.1" stroke-linecap="round" stroke-linejoin="round"><polyline points="20 6 9 17 4 12"/></g></svg>
<div class="b" style="left:594.00px;top:644.90px;width:19.00px;height:18.67px;background:#03701a;border-radius:5.4px;"></div>
<svg class="b" style="left:596.83px;top:647.56px;" width="13.33" height="13.33" viewBox="0 0 24 24"><g fill="none" stroke="#ffffff" stroke-width="2.1" stroke-linecap="round" stroke-linejoin="round"><polyline points="20 6 9 17 4 12"/></g></svg>
<div class="b" style="left:618.00px;top:644.90px;width:19.00px;height:18.67px;background:#03701a;border-radius:5.4px;"></div>
<svg class="b" style="left:620.83px;top:647.56px;" width="13.33" height="13.33" viewBox="0 0 24 24"><g fill="none" stroke="#ffffff" stroke-width="2.1" stroke-linecap="round" stroke-linejoin="round"><polyline points="20 6 9 17 4 12"/></g></svg>
<div class="b" style="left:642.00px;top:644.90px;width:19.00px;height:18.67px;background:#03701a;border-radius:5.4px;"></div>
<svg class="b" style="left:644.83px;top:647.56px;" width="13.33" height="13.33" viewBox="0 0 24 24"><g fill="none" stroke="#ffffff" stroke-width="2.1" stroke-linecap="round" stroke-linejoin="round"><polyline points="20 6 9 17 4 12"/></g></svg>
<div class="b" style="left:666.00px;top:644.90px;width:19.00px;height:18.67px;background:#03701a;border-radius:5.4px;"></div>
<svg class="b" style="left:668.83px;top:647.56px;" width="13.33" height="13.33" viewBox="0 0 24 24"><g fill="none" stroke="#ffffff" stroke-width="2.1" stroke-linecap="round" stroke-linejoin="round"><polyline points="20 6 9 17 4 12"/></g></svg>
<div class="b" style="left:122.90px;top:693.00px;width:325.10px;height:1.00px;background:#d5dbe6;"></div>
<span class="t" style="left:133.90px;top:673.00px;font-size:19px;line-height:19px;color:#1f2937;transform:scaleX(1.0159);">chain_linear_t9</span>
<div class="b" style="left:450.00px;top:671.57px;width:19.00px;height:18.67px;background:#03701a;border-radius:5.4px;"></div>
<svg class="b" style="left:452.83px;top:674.23px;" width="13.33" height="13.33" viewBox="0 0 24 24"><g fill="none" stroke="#ffffff" stroke-width="2.1" stroke-linecap="round" stroke-linejoin="round"><polyline points="20 6 9 17 4 12"/></g></svg>
<div class="b" style="left:474.00px;top:671.57px;width:19.00px;height:18.67px;background:#03701a;border-radius:5.4px;"></div>
<svg class="b" style="left:476.83px;top:674.23px;" width="13.33" height="13.33" viewBox="0 0 24 24"><g fill="none" stroke="#ffffff" stroke-width="2.1" stroke-linecap="round" stroke-linejoin="round"><polyline points="20 6 9 17 4 12"/></g></svg>
<div class="b" style="left:498.00px;top:671.57px;width:19.00px;height:18.67px;background:#03701a;border-radius:5.4px;"></div>
<svg class="b" style="left:500.83px;top:674.23px;" width="13.33" height="13.33" viewBox="0 0 24 24"><g fill="none" stroke="#ffffff" stroke-width="2.1" stroke-linecap="round" stroke-linejoin="round"><polyline points="20 6 9 17 4 12"/></g></svg>
<div class="b" style="left:522.00px;top:671.57px;width:19.00px;height:18.67px;background:#03701a;border-radius:5.4px;"></div>
<svg class="b" style="left:524.83px;top:674.23px;" width="13.33" height="13.33" viewBox="0 0 24 24"><g fill="none" stroke="#ffffff" stroke-width="2.1" stroke-linecap="round" stroke-linejoin="round"><polyline points="20 6 9 17 4 12"/></g></svg>
<div class="b" style="left:546.00px;top:671.57px;width:19.00px;height:18.67px;background:#03701a;border-radius:5.4px;"></div>
<svg class="b" style="left:548.83px;top:674.23px;" width="13.33" height="13.33" viewBox="0 0 24 24"><g fill="none" stroke="#ffffff" stroke-width="2.1" stroke-linecap="round" stroke-linejoin="round"><polyline points="20 6 9 17 4 12"/></g></svg>
<div class="b" style="left:570.00px;top:671.57px;width:19.00px;height:18.67px;background:#03701a;border-radius:5.4px;"></div>
<svg class="b" style="left:572.83px;top:674.23px;" width="13.33" height="13.33" viewBox="0 0 24 24"><g fill="none" stroke="#ffffff" stroke-width="2.1" stroke-linecap="round" stroke-linejoin="round"><polyline points="20 6 9 17 4 12"/></g></svg>
<div class="b" style="left:594.00px;top:671.57px;width:19.00px;height:18.67px;background:#03701a;border-radius:5.4px;"></div>
<svg class="b" style="left:596.83px;top:674.23px;" width="13.33" height="13.33" viewBox="0 0 24 24"><g fill="none" stroke="#ffffff" stroke-width="2.1" stroke-linecap="round" stroke-linejoin="round"><polyline points="20 6 9 17 4 12"/></g></svg>
<div class="b" style="left:618.00px;top:671.57px;width:19.00px;height:18.67px;background:#03701a;border-radius:5.4px;"></div>
<svg class="b" style="left:620.83px;top:674.23px;" width="13.33" height="13.33" viewBox="0 0 24 24"><g fill="none" stroke="#ffffff" stroke-width="2.1" stroke-linecap="round" stroke-linejoin="round"><polyline points="20 6 9 17 4 12"/></g></svg>
<div class="b" style="left:642.00px;top:671.57px;width:19.00px;height:18.67px;background:#03701a;border-radius:5.4px;"></div>
<svg class="b" style="left:644.83px;top:674.23px;" width="13.33" height="13.33" viewBox="0 0 24 24"><g fill="none" stroke="#ffffff" stroke-width="2.1" stroke-linecap="round" stroke-linejoin="round"><polyline points="20 6 9 17 4 12"/></g></svg>
<div class="b" style="left:666.00px;top:671.57px;width:19.00px;height:18.67px;background:#03701a;border-radius:5.4px;"></div>
<svg class="b" style="left:668.83px;top:674.23px;" width="13.33" height="13.33" viewBox="0 0 24 24"><g fill="none" stroke="#ffffff" stroke-width="2.1" stroke-linecap="round" stroke-linejoin="round"><polyline points="20 6 9 17 4 12"/></g></svg>
<div class="b" style="left:122.90px;top:720.00px;width:325.10px;height:1.00px;background:#d5dbe6;"></div>
<span class="t" style="left:133.90px;top:700.00px;font-size:19px;line-height:19px;color:#1f2937;transform:scaleX(0.9964);">chain_t10</span>
<div class="b" style="left:450.00px;top:698.24px;width:19.00px;height:18.67px;background:#03701a;border-radius:5.4px;"></div>
<svg class="b" style="left:452.83px;top:700.90px;" width="13.33" height="13.33" viewBox="0 0 24 24"><g fill="none" stroke="#ffffff" stroke-width="2.1" stroke-linecap="round" stroke-linejoin="round"><polyline points="20 6 9 17 4 12"/></g></svg>
<div class="b" style="left:474.00px;top:698.24px;width:19.00px;height:18.67px;background:#03701a;border-radius:5.4px;"></div>
<svg class="b" style="left:476.83px;top:700.90px;" width="13.33" height="13.33" viewBox="0 0 24 24"><g fill="none" stroke="#ffffff" stroke-width="2.1" stroke-linecap="round" stroke-linejoin="round"><polyline points="20 6 9 17 4 12"/></g></svg>
<div class="b" style="left:498.00px;top:698.24px;width:19.00px;height:18.67px;background:#03701a;border-radius:5.4px;"></div>
<svg class="b" style="left:500.83px;top:700.90px;" width="13.33" height="13.33" viewBox="0 0 24 24"><g fill="none" stroke="#ffffff" stroke-width="2.1" stroke-linecap="round" stroke-linejoin="round"><polyline points="20 6 9 17 4 12"/></g></svg>
<div class="b" style="left:522.00px;top:698.24px;width:19.00px;height:18.67px;background:#03701a;border-radius:5.4px;"></div>
<svg class="b" style="left:524.83px;top:700.90px;" width="13.33" height="13.33" viewBox="0 0 24 24"><g fill="none" stroke="#ffffff" stroke-width="2.1" stroke-linecap="round" stroke-linejoin="round"><polyline points="20 6 9 17 4 12"/></g></svg>
<div class="b" style="left:546.00px;top:698.24px;width:19.00px;height:18.67px;background:#03701a;border-radius:5.4px;"></div>
<svg class="b" style="left:548.83px;top:700.90px;" width="13.33" height="13.33" viewBox="0 0 24 24"><g fill="none" stroke="#ffffff" stroke-width="2.1" stroke-linecap="round" stroke-linejoin="round"><polyline points="20 6 9 17 4 12"/></g></svg>
<div class="b" style="left:570.00px;top:698.24px;width:19.00px;height:18.67px;background:#03701a;border-radius:5.4px;"></div>
<svg class="b" style="left:572.83px;top:700.90px;" width="13.33" height="13.33" viewBox="0 0 24 24"><g fill="none" stroke="#ffffff" stroke-width="2.1" stroke-linecap="round" stroke-linejoin="round"><polyline points="20 6 9 17 4 12"/></g></svg>
<div class="b" style="left:594.00px;top:698.24px;width:19.00px;height:18.67px;background:#03701a;border-radius:5.4px;"></div>
<svg class="b" style="left:596.83px;top:700.90px;" width="13.33" height="13.33" viewBox="0 0 24 24"><g fill="none" stroke="#ffffff" stroke-width="2.1" stroke-linecap="round" stroke-linejoin="round"><polyline points="20 6 9 17 4 12"/></g></svg>
<div class="b" style="left:618.00px;top:698.24px;width:19.00px;height:18.67px;background:#03701a;border-radius:5.4px;"></div>
<svg class="b" style="left:620.83px;top:700.90px;" width="13.33" height="13.33" viewBox="0 0 24 24"><g fill="none" stroke="#ffffff" stroke-width="2.1" stroke-linecap="round" stroke-linejoin="round"><polyline points="20 6 9 17 4 12"/></g></svg>
<div class="b" style="left:642.00px;top:698.24px;width:19.00px;height:18.67px;background:#03701a;border-radius:5.4px;"></div>
<svg class="b" style="left:644.83px;top:700.90px;" width="13.33" height="13.33" viewBox="0 0 24 24"><g fill="none" stroke="#ffffff" stroke-width="2.1" stroke-linecap="round" stroke-linejoin="round"><polyline points="20 6 9 17 4 12"/></g></svg>
<div class="b" style="left:666.00px;top:698.24px;width:19.00px;height:18.67px;background:#03701a;border-radius:5.4px;"></div>
<svg class="b" style="left:668.83px;top:700.90px;" width="13.33" height="13.33" viewBox="0 0 24 24"><g fill="none" stroke="#ffffff" stroke-width="2.1" stroke-linecap="round" stroke-linejoin="round"><polyline points="20 6 9 17 4 12"/></g></svg>
<div class="b" style="left:122.90px;top:747.00px;width:325.10px;height:1.00px;background:#d5dbe6;"></div>
<span class="t" style="left:133.90px;top:726.00px;font-size:19px;line-height:19px;color:#1f2937;transform:scaleX(0.9765);">chain_t11</span>
<div class="b" style="left:450.00px;top:724.90px;width:19.00px;height:18.67px;background:#03701a;border-radius:5.4px;"></div>
<svg class="b" style="left:452.83px;top:727.57px;" width="13.33" height="13.33" viewBox="0 0 24 24"><g fill="none" stroke="#ffffff" stroke-width="2.1" stroke-linecap="round" stroke-linejoin="round"><polyline points="20 6 9 17 4 12"/></g></svg>
<div class="b" style="left:474.00px;top:724.90px;width:19.00px;height:18.67px;background:#03701a;border-radius:5.4px;"></div>
<svg class="b" style="left:476.83px;top:727.57px;" width="13.33" height="13.33" viewBox="0 0 24 24"><g fill="none" stroke="#ffffff" stroke-width="2.1" stroke-linecap="round" stroke-linejoin="round"><polyline points="20 6 9 17 4 12"/></g></svg>
<div class="b" style="left:498.00px;top:724.90px;width:19.00px;height:18.67px;background:#03701a;border-radius:5.4px;"></div>
<svg class="b" style="left:500.83px;top:727.57px;" width="13.33" height="13.33" viewBox="0 0 24 24"><g fill="none" stroke="#ffffff" stroke-width="2.1" stroke-linecap="round" stroke-linejoin="round"><polyline points="20 6 9 17 4 12"/></g></svg>
<div class="b" style="left:522.00px;top:724.90px;width:19.00px;height:18.67px;background:#03701a;border-radius:5.4px;"></div>
<svg class="b" style="left:524.83px;top:727.57px;" width="13.33" height="13.33" viewBox="0 0 24 24"><g fill="none" stroke="#ffffff" stroke-width="2.1" stroke-linecap="round" stroke-linejoin="round"><polyline points="20 6 9 17 4 12"/></g></svg>
<div class="b" style="left:546.00px;top:724.90px;width:19.00px;height:18.67px;background:#03701a;border-radius:5.4px;"></div>
<svg class="b" style="left:548.83px;top:727.57px;" width="13.33" height="13.33" viewBox="0 0 24 24"><g fill="none" stroke="#ffffff" stroke-width="2.1" stroke-linecap="round" stroke-linejoin="round"><polyline points="20 6 9 17 4 12"/></g></svg>
<div class="b" style="left:570.00px;top:724.90px;width:19.00px;height:18.67px;background:#03701a;border-radius:5.4px;"></div>
<svg class="b" style="left:572.83px;top:727.57px;" width="13.33" height="13.33" viewBox="0 0 24 24"><g fill="none" stroke="#ffffff" stroke-width="2.1" stroke-linecap="round" stroke-linejoin="round"><polyline points="20 6 9 17 4 12"/></g></svg>
<div class="b" style="left:594.00px;top:724.90px;width:19.00px;height:18.67px;background:#03701a;border-radius:5.4px;"></div>
<svg class="b" style="left:596.83px;top:727.57px;" width="13.33" height="13.33" viewBox="0 0 24 24"><g fill="none" stroke="#ffffff" stroke-width="2.1" stroke-linecap="round" stroke-linejoin="round"><polyline points="20 6 9 17 4 12"/></g></svg>
<div class="b" style="left:618.00px;top:724.90px;width:19.00px;height:18.67px;background:#03701a;border-radius:5.4px;"></div>
<svg class="b" style="left:620.83px;top:727.57px;" width="13.33" height="13.33" viewBox="0 0 24 24"><g fill="none" stroke="#ffffff" stroke-width="2.1" stroke-linecap="round" stroke-linejoin="round"><polyline points="20 6 9 17 4 12"/></g></svg>
<div class="b" style="left:642.00px;top:724.90px;width:19.00px;height:18.67px;background:#03701a;border-radius:5.4px;"></div>
<svg class="b" style="left:644.83px;top:727.57px;" width="13.33" height="13.33" viewBox="0 0 24 24"><g fill="none" stroke="#ffffff" stroke-width="2.1" stroke-linecap="round" stroke-linejoin="round"><polyline points="20 6 9 17 4 12"/></g></svg>
<div class="b" style="left:666.00px;top:724.90px;width:19.00px;height:18.67px;background:#03701a;border-radius:5.4px;"></div>
<svg class="b" style="left:668.83px;top:727.57px;" width="13.33" height="13.33" viewBox="0 0 24 24"><g fill="none" stroke="#ffffff" stroke-width="2.1" stroke-linecap="round" stroke-linejoin="round"><polyline points="20 6 9 17 4 12"/></g></svg>
<div class="b" style="left:122.90px;top:773.00px;width:325.10px;height:1.00px;background:#d5dbe6;"></div>
<span class="t" style="left:133.90px;top:753.00px;font-size:19px;line-height:19px;color:#1f2937;transform:scaleX(0.9416);">empty_1</span>
<div class="b" style="left:450.00px;top:751.57px;width:19.00px;height:18.67px;background:#03701a;border-radius:5.4px;"></div>
<svg class="b" style="left:452.83px;top:754.23px;" width="13.33" height="13.33" viewBox="0 0 24 24"><g fill="none" stroke="#ffffff" stroke-width="2.1" stroke-linecap="round" stroke-linejoin="round"><polyline points="20 6 9 17 4 12"/></g></svg>
<div class="b" style="left:474.00px;top:751.57px;width:19.00px;height:18.67px;background:#d32222;border-radius:5.4px;"></div>
<svg class="b" style="left:476.83px;top:754.23px;" width="13.33" height="13.33" viewBox="0 0 24 24"><g fill="none" stroke="#ffffff" stroke-width="2.1" stroke-linecap="round" stroke-linejoin="round"><line x1="18" y1="6" x2="6" y2="18"/><line x1="6" y1="6" x2="18" y2="18"/></g></svg>
<div class="b" style="left:498.00px;top:751.57px;width:19.00px;height:18.67px;background:#d32222;border-radius:5.4px;"></div>
<svg class="b" style="left:500.83px;top:754.23px;" width="13.33" height="13.33" viewBox="0 0 24 24"><g fill="none" stroke="#ffffff" stroke-width="2.1" stroke-linecap="round" stroke-linejoin="round"><line x1="18" y1="6" x2="6" y2="18"/><line x1="6" y1="6" x2="18" y2="18"/></g></svg>
<div class="b" style="left:522.00px;top:751.57px;width:19.00px;height:18.67px;background:#d32222;border-radius:5.4px;"></div>
<svg class="b" style="left:524.83px;top:754.23px;" width="13.33" height="13.33" viewBox="0 0 24 24"><g fill="none" stroke="#ffffff" stroke-width="2.1" stroke-linecap="round" stroke-linejoin="round"><line x1="18" y1="6" x2="6" y2="18"/><line x1="6" y1="6" x2="18" y2="18"/></g></svg>
<div class="b" style="left:546.00px;top:751.57px;width:19.00px;height:18.67px;background:#d32222;border-radius:5.4px;"></div>
<svg class="b" style="left:548.83px;top:754.23px;" width="13.33" height="13.33" viewBox="0 0 24 24"><g fill="none" stroke="#ffffff" stroke-width="2.1" stroke-linecap="round" stroke-linejoin="round"><line x1="18" y1="6" x2="6" y2="18"/><line x1="6" y1="6" x2="18" y2="18"/></g></svg>
<div class="b" style="left:570.00px;top:751.57px;width:19.00px;height:18.67px;background:#03701a;border-radius:5.4px;"></div>
<svg class="b" style="left:572.83px;top:754.23px;" width="13.33" height="13.33" viewBox="0 0 24 24"><g fill="none" stroke="#ffffff" stroke-width="2.1" stroke-linecap="round" stroke-linejoin="round"><polyline points="20 6 9 17 4 12"/></g></svg>
<div class="b" style="left:594.00px;top:751.57px;width:19.00px;height:18.67px;background:#03701a;border-radius:5.4px;"></div>
<svg class="b" style="left:596.83px;top:754.23px;" width="13.33" height="13.33" viewBox="0 0 24 24"><g fill="none" stroke="#ffffff" stroke-width="2.1" stroke-linecap="round" stroke-linejoin="round"><polyline points="20 6 9 17 4 12"/></g></svg>
<div class="b" style="left:618.00px;top:751.57px;width:19.00px;height:18.67px;background:#03701a;border-radius:5.4px;"></div>
<svg class="b" style="left:620.83px;top:754.23px;" width="13.33" height="13.33" viewBox="0 0 24 24"><g fill="none" stroke="#ffffff" stroke-width="2.1" stroke-linecap="round" stroke-linejoin="round"><polyline points="20 6 9 17 4 12"/></g></svg>
<div class="b" style="left:642.00px;top:751.57px;width:19.00px;height:18.67px;background:#03701a;border-radius:5.4px;"></div>
<svg class="b" style="left:644.83px;top:754.23px;" width="13.33" height="13.33" viewBox="0 0 24 24"><g fill="none" stroke="#ffffff" stroke-width="2.1" stroke-linecap="round" stroke-linejoin="round"><polyline points="20 6 9 17 4 12"/></g></svg>
<div class="b" style="left:666.00px;top:751.57px;width:19.00px;height:18.67px;background:#d32222;border-radius:5.4px;"></div>
<svg class="b" style="left:668.83px;top:754.23px;" width="13.33" height="13.33" viewBox="0 0 24 24"><g fill="none" stroke="#ffffff" stroke-width="2.1" stroke-linecap="round" stroke-linejoin="round"><line x1="18" y1="6" x2="6" y2="18"/><line x1="6" y1="6" x2="18" y2="18"/></g></svg>
<div class="b" style="left:122.90px;top:800.00px;width:325.10px;height:1.00px;background:#d5dbe6;"></div>
<span class="t" style="left:133.90px;top:780.00px;font-size:19px;line-height:19px;color:#1f2937;transform:scaleX(1.0066);">end_chain_linear</span>
<div class="b" style="left:450.00px;top:778.24px;width:19.00px;height:18.67px;background:#03701a;border-radius:5.4px;"></div>
<svg class="b" style="left:452.83px;top:780.90px;" width="13.33" height="13.33" viewBox="0 0 24 24"><g fill="none" stroke="#ffffff" stroke-width="2.1" stroke-linecap="round" stroke-linejoin="round"><polyline points="20 6 9 17 4 12"/></g></svg>
<div class="b" style="left:474.00px;top:778.24px;width:19.00px;height:18.67px;background:#03701a;border-radius:5.4px;"></div>
<svg class="b" style="left:476.83px;top:780.90px;" width="13.33" height="13.33" viewBox="0 0 24 24"><g fill="none" stroke="#ffffff" stroke-width="2.1" stroke-linecap="round" stroke-linejoin="round"><polyline points="20 6 9 17 4 12"/></g></svg>
<div class="b" style="left:498.00px;top:778.24px;width:19.00px;height:18.67px;background:#03701a;border-radius:5.4px;"></div>
<svg class="b" style="left:500.83px;top:780.90px;" width="13.33" height="13.33" viewBox="0 0 24 24"><g fill="none" stroke="#ffffff" stroke-width="2.1" stroke-linecap="round" stroke-linejoin="round"><polyline points="20 6 9 17 4 12"/></g></svg>
<div class="b" style="left:522.00px;top:778.24px;width:19.00px;height:18.67px;background:#03701a;border-radius:5.4px;"></div>
<svg class="b" style="left:524.83px;top:780.90px;" width="13.33" height="13.33" viewBox="0 0 24 24"><g fill="none" stroke="#ffffff" stroke-width="2.1" stroke-linecap="round" stroke-linejoin="round"><polyline points="20 6 9 17 4 12"/></g></svg>
<div class="b" style="left:546.00px;top:778.24px;width:19.00px;height:18.67px;background:#03701a;border-radius:5.4px;"></div>
<svg class="b" style="left:548.83px;top:780.90px;" width="13.33" height="13.33" viewBox="0 0 24 24"><g fill="none" stroke="#ffffff" stroke-width="2.1" stroke-linecap="round" stroke-linejoin="round"><polyline points="20 6 9 17 4 12"/></g></svg>
<div class="b" style="left:570.00px;top:778.24px;width:19.00px;height:18.67px;background:#03701a;border-radius:5.4px;"></div>
<svg class="b" style="left:572.83px;top:780.90px;" width="13.33" height="13.33" viewBox="0 0 24 24"><g fill="none" stroke="#ffffff" stroke-width="2.1" stroke-linecap="round" stroke-linejoin="round"><polyline points="20 6 9 17 4 12"/></g></svg>
<div class="b" style="left:594.00px;top:778.24px;width:19.00px;height:18.67px;background:#03701a;border-radius:5.4px;"></div>
<svg class="b" style="left:596.83px;top:780.90px;" width="13.33" height="13.33" viewBox="0 0 24 24"><g fill="none" stroke="#ffffff" stroke-width="2.1" stroke-linecap="round" stroke-linejoin="round"><polyline points="20 6 9 17 4 12"/></g></svg>
<div class="b" style="left:618.00px;top:778.24px;width:19.00px;height:18.67px;background:#03701a;border-radius:5.4px;"></div>
<svg class="b" style="left:620.83px;top:780.90px;" width="13.33" height="13.33" viewBox="0 0 24 24"><g fill="none" stroke="#ffffff" stroke-width="2.1" stroke-linecap="round" stroke-linejoin="round"><polyline points="20 6 9 17 4 12"/></g></svg>
<div class="b" style="left:642.00px;top:778.24px;width:19.00px;height:18.67px;background:#03701a;border-radius:5.4px;"></div>
<svg class="b" style="left:644.83px;top:780.90px;" width="13.33" height="13.33" viewBox="0 0 24 24"><g fill="none" stroke="#ffffff" stroke-width="2.1" stroke-linecap="round" stroke-linejoin="round"><polyline points="20 6 9 17 4 12"/></g></svg>
<div class="b" style="left:666.00px;top:778.24px;width:19.00px;height:18.67px;background:#03701a;border-radius:5.4px;"></div>
<svg class="b" style="left:668.83px;top:780.90px;" width="13.33" height="13.33" viewBox="0 0 24 24"><g fill="none" stroke="#ffffff" stroke-width="2.1" stroke-linecap="round" stroke-linejoin="round"><polyline points="20 6 9 17 4 12"/></g></svg>
<div class="b" style="left:122.90px;top:827.00px;width:325.10px;height:1.00px;background:#d5dbe6;"></div>
<span class="t" style="left:133.90px;top:806.00px;font-size:19px;line-height:19px;color:#1f2937;transform:scaleX(0.9939);">chain_t12</span>
<div class="b" style="left:450.00px;top:804.91px;width:19.00px;height:18.67px;background:#03701a;border-radius:5.4px;"></div>
<svg class="b" style="left:452.83px;top:807.57px;" width="13.33" height="13.33" viewBox="0 0 24 24"><g fill="none" stroke="#ffffff" stroke-width="2.1" stroke-linecap="round" stroke-linejoin="round"><polyline points="20 6 9 17 4 12"/></g></svg>
<div class="b" style="left:474.00px;top:804.91px;width:19.00px;height:18.67px;background:#cc5024;border-radius:5.4px;"></div>
<svg class="b" style="left:476.83px;top:807.57px;" width="13.33" height="13.33" viewBox="0 0 24 24"><g fill="none" stroke="#ffffff" stroke-width="2.1" stroke-linecap="round" stroke-linejoin="round"><path d="M12 2a10 10 0 0 1 7.38 16.75"/><path d="m16 12-4-4-4 4"/><path d="M12 16V8"/><path d="M2.5 8.875a10 10 0 0 0-.5 3"/><path d="M2.83 16a10 10 0 0 0 2.43 3.4"/><path d="M4.636 5.235a10 10 0 0 1 .891-.857"/><path d="M8.644 21.42a10 10 0 0 0 7.631-.38"/></g></svg>
<div class="b" style="left:498.00px;top:804.91px;width:19.00px;height:18.67px;background:#cc5024;border-radius:5.4px;"></div>
<svg class="b" style="left:500.83px;top:807.57px;" width="13.33" height="13.33" viewBox="0 0 24 24"><g fill="none" stroke="#ffffff" stroke-width="2.1" stroke-linecap="round" stroke-linejoin="round"><path d="M12 2a10 10 0 0 1 7.38 16.75"/><path d="m16 12-4-4-4 4"/><path d="M12 16V8"/><path d="M2.5 8.875a10 10 0 0 0-.5 3"/><path d="M2.83 16a10 10 0 0 0 2.43 3.4"/><path d="M4.636 5.235a10 10 0 0 1 .891-.857"/><path d="M8.644 21.42a10 10 0 0 0 7.631-.38"/></g></svg>
<div class="b" style="left:522.00px;top:804.91px;width:19.00px;height:18.67px;background:#cc5024;border-radius:5.4px;"></div>
<svg class="b" style="left:524.83px;top:807.57px;" width="13.33" height="13.33" viewBox="0 0 24 24"><g fill="none" stroke="#ffffff" stroke-width="2.1" stroke-linecap="round" stroke-linejoin="round"><path d="M12 2a10 10 0 0 1 7.38 16.75"/><path d="m16 12-4-4-4 4"/><path d="M12 16V8"/><path d="M2.5 8.875a10 10 0 0 0-.5 3"/><path d="M2.83 16a10 10 0 0 0 2.43 3.4"/><path d="M4.636 5.235a10 10 0 0 1 .891-.857"/><path d="M8.644 21.42a10 10 0 0 0 7.631-.38"/></g></svg>
<div class="b" style="left:546.00px;top:804.91px;width:19.00px;height:18.67px;background:#cc5024;border-radius:5.4px;"></div>
<svg class="b" style="left:548.83px;top:807.57px;" width="13.33" height="13.33" viewBox="0 0 24 24"><g fill="none" stroke="#ffffff" stroke-width="2.1" stroke-linecap="round" stroke-linejoin="round"><path d="M12 2a10 10 0 0 1 7.38 16.75"/><path d="m16 12-4-4-4 4"/><path d="M12 16V8"/><path d="M2.5 8.875a10 10 0 0 0-.5 3"/><path d="M2.83 16a10 10 0 0 0 2.43 3.4"/><path d="M4.636 5.235a10 10 0 0 1 .891-.857"/><path d="M8.644 21.42a10 10 0 0 0 7.631-.38"/></g></svg>
<div class="b" style="left:570.00px;top:804.91px;width:19.00px;height:18.67px;background:#03701a;border-radius:5.4px;"></div>
<svg class="b" style="left:572.83px;top:807.57px;" width="13.33" height="13.33" viewBox="0 0 24 24"><g fill="none" stroke="#ffffff" stroke-width="2.1" stroke-linecap="round" stroke-linejoin="round"><polyline points="20 6 9 17 4 12"/></g></svg>
<div class="b" style="left:594.00px;top:804.91px;width:19.00px;height:18.67px;background:#03701a;border-radius:5.4px;"></div>
<svg class="b" style="left:596.83px;top:807.57px;" width="13.33" height="13.33" viewBox="0 0 24 24"><g fill="none" stroke="#ffffff" stroke-width="2.1" stroke-linecap="round" stroke-linejoin="round"><polyline points="20 6 9 17 4 12"/></g></svg>
<div class="b" style="left:618.00px;top:804.91px;width:19.00px;height:18.67px;background:#03701a;border-radius:5.4px;"></div>
<svg class="b" style="left:620.83px;top:807.57px;" width="13.33" height="13.33" viewBox="0 0 24 24"><g fill="none" stroke="#ffffff" stroke-width="2.1" stroke-linecap="round" stroke-linejoin="round"><polyline points="20 6 9 17 4 12"/></g></svg>
<div class="b" style="left:642.00px;top:804.91px;width:19.00px;height:18.67px;background:#03701a;border-radius:5.4px;"></div>
<svg class="b" style="left:644.83px;top:807.57px;" width="13.33" height="13.33" viewBox="0 0 24 24"><g fill="none" stroke="#ffffff" stroke-width="2.1" stroke-linecap="round" stroke-linejoin="round"><polyline points="20 6 9 17 4 12"/></g></svg>
<div class="b" style="left:666.00px;top:804.91px;width:19.00px;height:18.67px;background:#cc5024;border-radius:5.4px;"></div>
<svg class="b" style="left:668.83px;top:807.57px;" width="13.33" height="13.33" viewBox="0 0 24 24"><g fill="none" stroke="#ffffff" stroke-width="2.1" stroke-linecap="round" stroke-linejoin="round"><path d="M12 2a10 10 0 0 1 7.38 16.75"/><path d="m16 12-4-4-4 4"/><path d="M12 16V8"/><path d="M2.5 8.875a10 10 0 0 0-.5 3"/><path d="M2.83 16a10 10 0 0 0 2.43 3.4"/><path d="M4.636 5.235a10 10 0 0 1 .891-.857"/><path d="M8.644 21.42a10 10 0 0 0 7.631-.38"/></g></svg>
<div class="b" style="left:122.90px;top:853.00px;width:325.10px;height:1.00px;background:#d5dbe6;"></div>
<span class="t" style="left:133.90px;top:833.00px;font-size:19px;line-height:19px;color:#1f2937;transform:scaleX(0.9964);">chain_t13</span>
<div class="b" style="left:450.00px;top:831.57px;width:19.00px;height:18.67px;background:#03701a;border-radius:5.4px;"></div>
<svg class="b" style="left:452.83px;top:834.23px;" width="13.33" height="13.33" viewBox="0 0 24 24"><g fill="none" stroke="#ffffff" stroke-width="2.1" stroke-linecap="round" stroke-linejoin="round"><polyline points="20 6 9 17 4 12"/></g></svg>
<div class="b" style="left:474.00px;top:831.57px;width:19.00px;height:18.67px;background:#cc5024;border-radius:5.4px;"></div>
<svg class="b" style="left:476.83px;top:834.23px;" width="13.33" height="13.33" viewBox="0 0 24 24"><g fill="none" stroke="#ffffff" stroke-width="2.1" stroke-linecap="round" stroke-linejoin="round"><path d="M12 2a10 10 0 0 1 7.38 16.75"/><path d="m16 12-4-4-4 4"/><path d="M12 16V8"/><path d="M2.5 8.875a10 10 0 0 0-.5 3"/><path d="M2.83 16a10 10 0 0 0 2.43 3.4"/><path d="M4.636 5.235a10 10 0 0 1 .891-.857"/><path d="M8.644 21.42a10 10 0 0 0 7.631-.38"/></g></svg>
<div class="b" style="left:498.00px;top:831.57px;width:19.00px;height:18.67px;background:#cc5024;border-radius:5.4px;"></div>
<svg class="b" style="left:500.83px;top:834.23px;" width="13.33" height="13.33" viewBox="0 0 24 24"><g fill="none" stroke="#ffffff" stroke-width="2.1" stroke-linecap="round" stroke-linejoin="round"><path d="M12 2a10 10 0 0 1 7.38 16.75"/><path d="m16 12-4-4-4 4"/><path d="M12 16V8"/><path d="M2.5 8.875a10 10 0 0 0-.5 3"/><path d="M2.83 16a10 10 0 0 0 2.43 3.4"/><path d="M4.636 5.235a10 10 0 0 1 .891-.857"/><path d="M8.644 21.42a10 10 0 0 0 7.631-.38"/></g></svg>
<div class="b" style="left:522.00px;top:831.57px;width:19.00px;height:18.67px;background:#cc5024;border-radius:5.4px;"></div>
<svg class="b" style="left:524.83px;top:834.23px;" width="13.33" height="13.33" viewBox="0 0 24 24"><g fill="none" stroke="#ffffff" stroke-width="2.1" stroke-linecap="round" stroke-linejoin="round"><path d="M12 2a10 10 0 0 1 7.38 16.75"/><path d="m16 12-4-4-4 4"/><path d="M12 16V8"/><path d="M2.5 8.875a10 10 0 0 0-.5 3"/><path d="M2.83 16a10 10 0 0 0 2.43 3.4"/><path d="M4.636 5.235a10 10 0 0 1 .891-.857"/><path d="M8.644 21.42a10 10 0 0 0 7.631-.38"/></g></svg>
<div class="b" style="left:546.00px;top:831.57px;width:19.00px;height:18.67px;background:#cc5024;border-radius:5.4px;"></div>
<svg class="b" style="left:548.83px;top:834.23px;" width="13.33" height="13.33" viewBox="0 0 24 24"><g fill="none" stroke="#ffffff" stroke-width="2.1" stroke-linecap="round" stroke-linejoin="round"><path d="M12 2a10 10 0 0 1 7.38 16.75"/><path d="m16 12-4-4-4 4"/><path d="M12 16V8"/><path d="M2.5 8.875a10 10 0 0 0-.5 3"/><path d="M2.83 16a10 10 0 0 0 2.43 3.4"/><path d="M4.636 5.235a10 10 0 0 1 .891-.857"/><path d="M8.644 21.42a10 10 0 0 0 7.631-.38"/></g></svg>
<div class="b" style="left:570.00px;top:831.57px;width:19.00px;height:18.67px;background:#03701a;border-radius:5.4px;"></div>
<svg class="b" style="left:572.83px;top:834.23px;" width="13.33" height="13.33" viewBox="0 0 24 24"><g fill="none" stroke="#ffffff" stroke-width="2.1" stroke-linecap="round" stroke-linejoin="round"><polyline points="20 6 9 17 4 12"/></g></svg>
<div class="b" style="left:594.00px;top:831.57px;width:19.00px;height:18.67px;background:#03701a;border-radius:5.4px;"></div>
<svg class="b" style="left:596.83px;top:834.23px;" width="13.33" height="13.33" viewBox="0 0 24 24"><g fill="none" stroke="#ffffff" stroke-width="2.1" stroke-linecap="round" stroke-linejoin="round"><polyline points="20 6 9 17 4 12"/></g></svg>
<div class="b" style="left:618.00px;top:831.57px;width:19.00px;height:18.67px;background:#03701a;border-radius:5.4px;"></div>
<svg class="b" style="left:620.83px;top:834.23px;" width="13.33" height="13.33" viewBox="0 0 24 24"><g fill="none" stroke="#ffffff" stroke-width="2.1" stroke-linecap="round" stroke-linejoin="round"><polyline points="20 6 9 17 4 12"/></g></svg>
<div class="b" style="left:642.00px;top:831.57px;width:19.00px;height:18.67px;background:#03701a;border-radius:5.4px;"></div>
<svg class="b" style="left:644.83px;top:834.23px;" width="13.33" height="13.33" viewBox="0 0 24 24"><g fill="none" stroke="#ffffff" stroke-width="2.1" stroke-linecap="round" stroke-linejoin="round"><polyline points="20 6 9 17 4 12"/></g></svg>
<div class="b" style="left:666.00px;top:831.57px;width:19.00px;height:18.67px;background:#cc5024;border-radius:5.4px;"></div>
<svg class="b" style="left:668.83px;top:834.23px;" width="13.33" height="13.33" viewBox="0 0 24 24"><g fill="none" stroke="#ffffff" stroke-width="2.1" stroke-linecap="round" stroke-linejoin="round"><path d="M12 2a10 10 0 0 1 7.38 16.75"/><path d="m16 12-4-4-4 4"/><path d="M12 16V8"/><path d="M2.5 8.875a10 10 0 0 0-.5 3"/><path d="M2.83 16a10 10 0 0 0 2.43 3.4"/><path d="M4.636 5.235a10 10 0 0 1 .891-.857"/><path d="M8.644 21.42a10 10 0 0 0 7.631-.38"/></g></svg>
<div class="b" style="left:122.90px;top:880.00px;width:325.10px;height:1.00px;background:#d5dbe6;"></div>
<span class="t" style="left:133.90px;top:860.00px;font-size:19px;line-height:19px;color:#1f2937;">chain_t14</span>
<div class="b" style="left:450.00px;top:858.24px;width:19.00px;height:18.67px;background:#03701a;border-radius:5.4px;"></div>
<svg class="b" style="left:452.83px;top:860.90px;" width="13.33" height="13.33" viewBox="0 0 24 24"><g fill="none" stroke="#ffffff" stroke-width="2.1" stroke-linecap="round" stroke-linejoin="round"><polyline points="20 6 9 17 4 12"/></g></svg>
<div class="b" style="left:474.00px;top:858.24px;width:19.00px;height:18.67px;background:#cc5024;border-radius:5.4px;"></div>
<svg class="b" style="left:476.83px;top:860.90px;" width="13.33" height="13.33" viewBox="0 0 24 24"><g fill="none" stroke="#ffffff" stroke-width="2.1" stroke-linecap="round" stroke-linejoin="round"><path d="M12 2a10 10 0 0 1 7.38 16.75"/><path d="m16 12-4-4-4 4"/><path d="M12 16V8"/><path d="M2.5 8.875a10 10 0 0 0-.5 3"/><path d="M2.83 16a10 10 0 0 0 2.43 3.4"/><path d="M4.636 5.235a10 10 0 0 1 .891-.857"/><path d="M8.644 21.42a10 10 0 0 0 7.631-.38"/></g></svg>
<div class="b" style="left:498.00px;top:858.24px;width:19.00px;height:18.67px;background:#cc5024;border-radius:5.4px;"></div>
<svg class="b" style="left:500.83px;top:860.90px;" width="13.33" height="13.33" viewBox="0 0 24 24"><g fill="none" stroke="#ffffff" stroke-width="2.1" stroke-linecap="round" stroke-linejoin="round"><path d="M12 2a10 10 0 0 1 7.38 16.75"/><path d="m16 12-4-4-4 4"/><path d="M12 16V8"/><path d="M2.5 8.875a10 10 0 0 0-.5 3"/><path d="M2.83 16a10 10 0 0 0 2.43 3.4"/><path d="M4.636 5.235a10 10 0 0 1 .891-.857"/><path d="M8.644 21.42a10 10 0 0 0 7.631-.38"/></g></svg>
<div class="b" style="left:522.00px;top:858.24px;width:19.00px;height:18.67px;background:#cc5024;border-radius:5.4px;"></div>
<svg class="b" style="left:524.83px;top:860.90px;" width="13.33" height="13.33" viewBox="0 0 24 24"><g fill="none" stroke="#ffffff" stroke-width="2.1" stroke-linecap="round" stroke-linejoin="round"><path d="M12 2a10 10 0 0 1 7.38 16.75"/><path d="m16 12-4-4-4 4"/><path d="M12 16V8"/><path d="M2.5 8.875a10 10 0 0 0-.5 3"/><path d="M2.83 16a10 10 0 0 0 2.43 3.4"/><path d="M4.636 5.235a10 10 0 0 1 .891-.857"/><path d="M8.644 21.42a10 10 0 0 0 7.631-.38"/></g></svg>
<div class="b" style="left:546.00px;top:858.24px;width:19.00px;height:18.67px;background:#cc5024;border-radius:5.4px;"></div>
<svg class="b" style="left:548.83px;top:860.90px;" width="13.33" height="13.33" viewBox="0 0 24 24"><g fill="none" stroke="#ffffff" stroke-width="2.1" stroke-linecap="round" stroke-linejoin="round"><path d="M12 2a10 10 0 0 1 7.38 16.75"/><path d="m16 12-4-4-4 4"/><path d="M12 16V8"/><path d="M2.5 8.875a10 10 0 0 0-.5 3"/><path d="M2.83 16a10 10 0 0 0 2.43 3.4"/><path d="M4.636 5.235a10 10 0 0 1 .891-.857"/><path d="M8.644 21.42a10 10 0 0 0 7.631-.38"/></g></svg>
<div class="b" style="left:570.00px;top:858.24px;width:19.00px;height:18.67px;background:#03701a;border-radius:5.4px;"></div>
<svg class="b" style="left:572.83px;top:860.90px;" width="13.33" height="13.33" viewBox="0 0 24 24"><g fill="none" stroke="#ffffff" stroke-width="2.1" stroke-linecap="round" stroke-linejoin="round"><polyline points="20 6 9 17 4 12"/></g></svg>
<div class="b" style="left:594.00px;top:858.24px;width:19.00px;height:18.67px;background:#03701a;border-radius:5.4px;"></div>
<svg class="b" style="left:596.83px;top:860.90px;" width="13.33" height="13.33" viewBox="0 0 24 24"><g fill="none" stroke="#ffffff" stroke-width="2.1" stroke-linecap="round" stroke-linejoin="round"><polyline points="20 6 9 17 4 12"/></g></svg>
<div class="b" style="left:618.00px;top:858.24px;width:19.00px;height:18.67px;background:#03701a;border-radius:5.4px;"></div>
<svg class="b" style="left:620.83px;top:860.90px;" width="13.33" height="13.33" viewBox="0 0 24 24"><g fill="none" stroke="#ffffff" stroke-width="2.1" stroke-linecap="round" stroke-linejoin="round"><polyline points="20 6 9 17 4 12"/></g></svg>
<div class="b" style="left:642.00px;top:858.24px;width:19.00px;height:18.67px;background:#03701a;border-radius:5.4px;"></div>
<svg class="b" style="left:644.83px;top:860.90px;" width="13.33" height="13.33" viewBox="0 0 24 24"><g fill="none" stroke="#ffffff" stroke-width="2.1" stroke-linecap="round" stroke-linejoin="round"><polyline points="20 6 9 17 4 12"/></g></svg>
<div class="b" style="left:666.00px;top:858.24px;width:19.00px;height:18.67px;background:#cc5024;border-radius:5.4px;"></div>
<svg class="b" style="left:668.83px;top:860.90px;" width="13.33" height="13.33" viewBox="0 0 24 24"><g fill="none" stroke="#ffffff" stroke-width="2.1" stroke-linecap="round" stroke-linejoin="round"><path d="M12 2a10 10 0 0 1 7.38 16.75"/><path d="m16 12-4-4-4 4"/><path d="M12 16V8"/><path d="M2.5 8.875a10 10 0 0 0-.5 3"/><path d="M2.83 16a10 10 0 0 0 2.43 3.4"/><path d="M4.636 5.235a10 10 0 0 1 .891-.857"/><path d="M8.644 21.42a10 10 0 0 0 7.631-.38"/></g></svg>
<div class="b" style="left:122.90px;top:907.00px;width:325.10px;height:1.00px;background:#d5dbe6;"></div>
<span class="t" style="left:133.90px;top:886.00px;font-size:19px;line-height:19px;color:#1f2937;transform:scaleX(0.9939);">chain_t15</span>
<div class="b" style="left:450.00px;top:884.91px;width:19.00px;height:18.67px;background:#03701a;border-radius:5.4px;"></div>
<svg class="b" style="left:452.83px;top:887.57px;" width="13.33" height="13.33" viewBox="0 0 24 24"><g fill="none" stroke="#ffffff" stroke-width="2.1" stroke-linecap="round" stroke-linejoin="round"><polyline points="20 6 9 17 4 12"/></g></svg>
<div class="b" style="left:474.00px;top:884.91px;width:19.00px;height:18.67px;background:#cc5024;border-radius:5.4px;"></div>
<svg class="b" style="left:476.83px;top:887.57px;" width="13.33" height="13.33" viewBox="0 0 24 24"><g fill="none" stroke="#ffffff" stroke-width="2.1" stroke-linecap="round" stroke-linejoin="round"><path d="M12 2a10 10 0 0 1 7.38 16.75"/><path d="m16 12-4-4-4 4"/><path d="M12 16V8"/><path d="M2.5 8.875a10 10 0 0 0-.5 3"/><path d="M2.83 16a10 10 0 0 0 2.43 3.4"/><path d="M4.636 5.235a10 10 0 0 1 .891-.857"/><path d="M8.644 21.42a10 10 0 0 0 7.631-.38"/></g></svg>
<div class="b" style="left:498.00px;top:884.91px;width:19.00px;height:18.67px;background:#cc5024;border-radius:5.4px;"></div>
<svg class="b" style="left:500.83px;top:887.57px;" width="13.33" height="13.33" viewBox="0 0 24 24"><g fill="none" stroke="#ffffff" stroke-width="2.1" stroke-linecap="round" stroke-linejoin="round"><path d="M12 2a10 10 0 0 1 7.38 16.75"/><path d="m16 12-4-4-4 4"/><path d="M12 16V8"/><path d="M2.5 8.875a10 10 0 0 0-.5 3"/><path d="M2.83 16a10 10 0 0 0 2.43 3.4"/><path d="M4.636 5.235a10 10 0 0 1 .891-.857"/><path d="M8.644 21.42a10 10 0 0 0 7.631-.38"/></g></svg>
<div class="b" style="left:522.00px;top:884.91px;width:19.00px;height:18.67px;background:#cc5024;border-radius:5.4px;"></div>
<svg class="b" style="left:524.83px;top:887.57px;" width="13.33" height="13.33" viewBox="0 0 24 24"><g fill="none" stroke="#ffffff" stroke-width="2.1" stroke-linecap="round" stroke-linejoin="round"><path d="M12 2a10 10 0 0 1 7.38 16.75"/><path d="m16 12-4-4-4 4"/><path d="M12 16V8"/><path d="M2.5 8.875a10 10 0 0 0-.5 3"/><path d="M2.83 16a10 10 0 0 0 2.43 3.4"/><path d="M4.636 5.235a10 10 0 0 1 .891-.857"/><path d="M8.644 21.42a10 10 0 0 0 7.631-.38"/></g></svg>
<div class="b" style="left:546.00px;top:884.91px;width:19.00px;height:18.67px;background:#cc5024;border-radius:5.4px;"></div>
<svg class="b" style="left:548.83px;top:887.57px;" width="13.33" height="13.33" viewBox="0 0 24 24"><g fill="none" stroke="#ffffff" stroke-width="2.1" stroke-linecap="round" stroke-linejoin="round"><path d="M12 2a10 10 0 0 1 7.38 16.75"/><path d="m16 12-4-4-4 4"/><path d="M12 16V8"/><path d="M2.5 8.875a10 10 0 0 0-.5 3"/><path d="M2.83 16a10 10 0 0 0 2.43 3.4"/><path d="M4.636 5.235a10 10 0 0 1 .891-.857"/><path d="M8.644 21.42a10 10 0 0 0 7.631-.38"/></g></svg>
<div class="b" style="left:570.00px;top:884.91px;width:19.00px;height:18.67px;background:#03701a;border-radius:5.4px;"></div>
<svg class="b" style="left:572.83px;top:887.57px;" width="13.33" height="13.33" viewBox="0 0 24 24"><g fill="none" stroke="#ffffff" stroke-width="2.1" stroke-linecap="round" stroke-linejoin="round"><polyline points="20 6 9 17 4 12"/></g></svg>
<div class="b" style="left:594.00px;top:884.91px;width:19.00px;height:18.67px;background:#03701a;border-radius:5.4px;"></div>
<svg class="b" style="left:596.83px;top:887.57px;" width="13.33" height="13.33" viewBox="0 0 24 24"><g fill="none" stroke="#ffffff" stroke-width="2.1" stroke-linecap="round" stroke-linejoin="round"><polyline points="20 6 9 17 4 12"/></g></svg>
<div class="b" style="left:618.00px;top:884.91px;width:19.00px;height:18.67px;background:#03701a;border-radius:5.4px;"></div>
<svg class="b" style="left:620.83px;top:887.57px;" width="13.33" height="13.33" viewBox="0 0 24 24"><g fill="none" stroke="#ffffff" stroke-width="2.1" stroke-linecap="round" stroke-linejoin="round"><polyline points="20 6 9 17 4 12"/></g></svg>
<div class="b" style="left:642.00px;top:884.91px;width:19.00px;height:18.67px;background:#03701a;border-radius:5.4px;"></div>
<svg class="b" style="left:644.83px;top:887.57px;" width="13.33" height="13.33" viewBox="0 0 24 24"><g fill="none" stroke="#ffffff" stroke-width="2.1" stroke-linecap="round" stroke-linejoin="round"><polyline points="20 6 9 17 4 12"/></g></svg>
<div class="b" style="left:666.00px;top:884.91px;width:19.00px;height:18.67px;background:#cc5024;border-radius:5.4px;"></div>
<svg class="b" style="left:668.83px;top:887.57px;" width="13.33" height="13.33" viewBox="0 0 24 24"><g fill="none" stroke="#ffffff" stroke-width="2.1" stroke-linecap="round" stroke-linejoin="round"><path d="M12 2a10 10 0 0 1 7.38 16.75"/><path d="m16 12-4-4-4 4"/><path d="M12 16V8"/><path d="M2.5 8.875a10 10 0 0 0-.5 3"/><path d="M2.83 16a10 10 0 0 0 2.43 3.4"/><path d="M4.636 5.235a10 10 0 0 1 .891-.857"/><path d="M8.644 21.42a10 10 0 0 0 7.631-.38"/></g></svg>
<div class="b" style="left:122.90px;top:933.00px;width:325.10px;height:1.00px;background:#d5dbe6;"></div>
<span class="t" style="left:133.90px;top:913.00px;font-size:19px;line-height:19px;color:#1f2937;">chain_t16</span>
<div class="b" style="left:450.00px;top:911.57px;width:19.00px;height:18.67px;background:#03701a;border-radius:5.4px;"></div>
<svg class="b" style="left:452.83px;top:914.23px;" width="13.33" height="13.33" viewBox="0 0 24 24"><g fill="none" stroke="#ffffff" stroke-width="2.1" stroke-linecap="round" stroke-linejoin="round"><polyline points="20 6 9 17 4 12"/></g></svg>
<div class="b" style="left:474.00px;top:911.57px;width:19.00px;height:18.67px;background:#cc5024;border-radius:5.4px;"></div>
<svg class="b" style="left:476.83px;top:914.23px;" width="13.33" height="13.33" viewBox="0 0 24 24"><g fill="none" stroke="#ffffff" stroke-width="2.1" stroke-linecap="round" stroke-linejoin="round"><path d="M12 2a10 10 0 0 1 7.38 16.75"/><path d="m16 12-4-4-4 4"/><path d="M12 16V8"/><path d="M2.5 8.875a10 10 0 0 0-.5 3"/><path d="M2.83 16a10 10 0 0 0 2.43 3.4"/><path d="M4.636 5.235a10 10 0 0 1 .891-.857"/><path d="M8.644 21.42a10 10 0 0 0 7.631-.38"/></g></svg>
<div class="b" style="left:498.00px;top:911.57px;width:19.00px;height:18.67px;background:#cc5024;border-radius:5.4px;"></div>
<svg class="b" style="left:500.83px;top:914.23px;" width="13.33" height="13.33" viewBox="0 0 24 24"><g fill="none" stroke="#ffffff" stroke-width="2.1" stroke-linecap="round" stroke-linejoin="round"><path d="M12 2a10 10 0 0 1 7.38 16.75"/><path d="m16 12-4-4-4 4"/><path d="M12 16V8"/><path d="M2.5 8.875a10 10 0 0 0-.5 3"/><path d="M2.83 16a10 10 0 0 0 2.43 3.4"/><path d="M4.636 5.235a10 10 0 0 1 .891-.857"/><path d="M8.644 21.42a10 10 0 0 0 7.631-.38"/></g></svg>
<div class="b" style="left:522.00px;top:911.57px;width:19.00px;height:18.67px;background:#cc5024;border-radius:5.4px;"></div>
<svg class="b" style="left:524.83px;top:914.23px;" width="13.33" height="13.33" viewBox="0 0 24 24"><g fill="none" stroke="#ffffff" stroke-width="2.1" stroke-linecap="round" stroke-linejoin="round"><path d="M12 2a10 10 0 0 1 7.38 16.75"/><path d="m16 12-4-4-4 4"/><path d="M12 16V8"/><path d="M2.5 8.875a10 10 0 0 0-.5 3"/><path d="M2.83 16a10 10 0 0 0 2.43 3.4"/><path d="M4.636 5.235a10 10 0 0 1 .891-.857"/><path d="M8.644 21.42a10 10 0 0 0 7.631-.38"/></g></svg>
<div class="b" style="left:546.00px;top:911.57px;width:19.00px;height:18.67px;background:#cc5024;border-radius:5.4px;"></div>
<svg class="b" style="left:548.83px;top:914.23px;" width="13.33" height="13.33" viewBox="0 0 24 24"><g fill="none" stroke="#ffffff" stroke-width="2.1" stroke-linecap="round" stroke-linejoin="round"><path d="M12 2a10 10 0 0 1 7.38 16.75"/><path d="m16 12-4-4-4 4"/><path d="M12 16V8"/><path d="M2.5 8.875a10 10 0 0 0-.5 3"/><path d="M2.83 16a10 10 0 0 0 2.43 3.4"/><path d="M4.636 5.235a10 10 0 0 1 .891-.857"/><path d="M8.644 21.42a10 10 0 0 0 7.631-.38"/></g></svg>
<div class="b" style="left:570.00px;top:911.57px;width:19.00px;height:18.67px;background:#03701a;border-radius:5.4px;"></div>
<svg class="b" style="left:572.83px;top:914.23px;" width="13.33" height="13.33" viewBox="0 0 24 24"><g fill="none" stroke="#ffffff" stroke-width="2.1" stroke-linecap="round" stroke-linejoin="round"><polyline points="20 6 9 17 4 12"/></g></svg>
<div class="b" style="left:594.00px;top:911.57px;width:19.00px;height:18.67px;background:#03701a;border-radius:5.4px;"></div>
<svg class="b" style="left:596.83px;top:914.23px;" width="13.33" height="13.33" viewBox="0 0 24 24"><g fill="none" stroke="#ffffff" stroke-width="2.1" stroke-linecap="round" stroke-linejoin="round"><polyline points="20 6 9 17 4 12"/></g></svg>
<div class="b" style="left:618.00px;top:911.57px;width:19.00px;height:18.67px;background:#03701a;border-radius:5.4px;"></div>
<svg class="b" style="left:620.83px;top:914.23px;" width="13.33" height="13.33" viewBox="0 0 24 24"><g fill="none" stroke="#ffffff" stroke-width="2.1" stroke-linecap="round" stroke-linejoin="round"><polyline points="20 6 9 17 4 12"/></g></svg>
<div class="b" style="left:642.00px;top:911.57px;width:19.00px;height:18.67px;background:#03701a;border-radius:5.4px;"></div>
<svg class="b" style="left:644.83px;top:914.23px;" width="13.33" height="13.33" viewBox="0 0 24 24"><g fill="none" stroke="#ffffff" stroke-width="2.1" stroke-linecap="round" stroke-linejoin="round"><polyline points="20 6 9 17 4 12"/></g></svg>
<div class="b" style="left:666.00px;top:911.57px;width:19.00px;height:18.67px;background:#cc5024;border-radius:5.4px;"></div>
<svg class="b" style="left:668.83px;top:914.23px;" width="13.33" height="13.33" viewBox="0 0 24 24"><g fill="none" stroke="#ffffff" stroke-width="2.1" stroke-linecap="round" stroke-linejoin="round"><path d="M12 2a10 10 0 0 1 7.38 16.75"/><path d="m16 12-4-4-4 4"/><path d="M12 16V8"/><path d="M2.5 8.875a10 10 0 0 0-.5 3"/><path d="M2.83 16a10 10 0 0 0 2.43 3.4"/><path d="M4.636 5.235a10 10 0 0 1 .891-.857"/><path d="M8.644 21.42a10 10 0 0 0 7.631-.38"/></g></svg>
<div class="b" style="left:122.90px;top:960.00px;width:325.10px;height:1.00px;background:#d5dbe6;"></div>
<span class="t" style="left:133.90px;top:940.00px;font-size:19px;line-height:19px;color:#1f2937;transform:scaleX(0.9818);">chain_t17</span>
<div class="b" style="left:450.00px;top:938.24px;width:19.00px;height:18.67px;background:#03701a;border-radius:5.4px;"></div>
<svg class="b" style="left:452.83px;top:940.90px;" width="13.33" height="13.33" viewBox="0 0 24 24"><g fill="none" stroke="#ffffff" stroke-width="2.1" stroke-linecap="round" stroke-linejoin="round"><polyline points="20 6 9 17 4 12"/></g></svg>
<div class="b" style="left:474.00px;top:938.24px;width:19.00px;height:18.67px;background:#cc5024;border-radius:5.4px;"></div>
<svg class="b" style="left:476.83px;top:940.90px;" width="13.33" height="13.33" viewBox="0 0 24 24"><g fill="none" stroke="#ffffff" stroke-width="2.1" stroke-linecap="round" stroke-linejoin="round"><path d="M12 2a10 10 0 0 1 7.38 16.75"/><path d="m16 12-4-4-4 4"/><path d="M12 16V8"/><path d="M2.5 8.875a10 10 0 0 0-.5 3"/><path d="M2.83 16a10 10 0 0 0 2.43 3.4"/><path d="M4.636 5.235a10 10 0 0 1 .891-.857"/><path d="M8.644 21.42a10 10 0 0 0 7.631-.38"/></g></svg>
<div class="b" style="left:498.00px;top:938.24px;width:19.00px;height:18.67px;background:#cc5024;border-radius:5.4px;"></div>
<svg class="b" style="left:500.83px;top:940.90px;" width="13.33" height="13.33" viewBox="0 0 24 24"><g fill="none" stroke="#ffffff" stroke-width="2.1" stroke-linecap="round" stroke-linejoin="round"><path d="M12 2a10 10 0 0 1 7.38 16.75"/><path d="m16 12-4-4-4 4"/><path d="M12 16V8"/><path d="M2.5 8.875a10 10 0 0 0-.5 3"/><path d="M2.83 16a10 10 0 0 0 2.43 3.4"/><path d="M4.636 5.235a10 10 0 0 1 .891-.857"/><path d="M8.644 21.42a10 10 0 0 0 7.631-.38"/></g></svg>
<div class="b" style="left:522.00px;top:938.24px;width:19.00px;height:18.67px;background:#cc5024;border-radius:5.4px;"></div>
<svg class="b" style="left:524.83px;top:940.90px;" width="13.33" height="13.33" viewBox="0 0 24 24"><g fill="none" stroke="#ffffff" stroke-width="2.1" stroke-linecap="round" stroke-linejoin="round"><path d="M12 2a10 10 0 0 1 7.38 16.75"/><path d="m16 12-4-4-4 4"/><path d="M12 16V8"/><path d="M2.5 8.875a10 10 0 0 0-.5 3"/><path d="M2.83 16a10 10 0 0 0 2.43 3.4"/><path d="M4.636 5.235a10 10 0 0 1 .891-.857"/><path d="M8.644 21.42a10 10 0 0 0 7.631-.38"/></g></svg>
<div class="b" style="left:546.00px;top:938.24px;width:19.00px;height:18.67px;background:#cc5024;border-radius:5.4px;"></div>
<svg class="b" style="left:548.83px;top:940.90px;" width="13.33" height="13.33" viewBox="0 0 24 24"><g fill="none" stroke="#ffffff" stroke-width="2.1" stroke-linecap="round" stroke-linejoin="round"><path d="M12 2a10 10 0 0 1 7.38 16.75"/><path d="m16 12-4-4-4 4"/><path d="M12 16V8"/><path d="M2.5 8.875a10 10 0 0 0-.5 3"/><path d="M2.83 16a10 10 0 0 0 2.43 3.4"/><path d="M4.636 5.235a10 10 0 0 1 .891-.857"/><path d="M8.644 21.42a10 10 0 0 0 7.631-.38"/></g></svg>
<div class="b" style="left:570.00px;top:938.24px;width:19.00px;height:18.67px;background:#03701a;border-radius:5.4px;"></div>
<svg class="b" style="left:572.83px;top:940.90px;" width="13.33" height="13.33" viewBox="0 0 24 24"><g fill="none" stroke="#ffffff" stroke-width="2.1" stroke-linecap="round" stroke-linejoin="round"><polyline points="20 6 9 17 4 12"/></g></svg>
<div class="b" style="left:594.00px;top:938.24px;width:19.00px;height:18.67px;background:#03701a;border-radius:5.4px;"></div>
<svg class="b" style="left:596.83px;top:940.90px;" width="13.33" height="13.33" viewBox="0 0 24 24"><g fill="none" stroke="#ffffff" stroke-width="2.1" stroke-linecap="round" stroke-linejoin="round"><polyline points="20 6 9 17 4 12"/></g></svg>
<div class="b" style="left:618.00px;top:938.24px;width:19.00px;height:18.67px;background:#03701a;border-radius:5.4px;"></div>
<svg class="b" style="left:620.83px;top:940.90px;" width="13.33" height="13.33" viewBox="0 0 24 24"><g fill="none" stroke="#ffffff" stroke-width="2.1" stroke-linecap="round" stroke-linejoin="round"><polyline points="20 6 9 17 4 12"/></g></svg>
<div class="b" style="left:642.00px;top:938.24px;width:19.00px;height:18.67px;background:#03701a;border-radius:5.4px;"></div>
<svg class="b" style="left:644.83px;top:940.90px;" width="13.33" height="13.33" viewBox="0 0 24 24"><g fill="none" stroke="#ffffff" stroke-width="2.1" stroke-linecap="round" stroke-linejoin="round"><polyline points="20 6 9 17 4 12"/></g></svg>
<div class="b" style="left:666.00px;top:938.24px;width:19.00px;height:18.67px;background:#cc5024;border-radius:5.4px;"></div>
<svg class="b" style="left:668.83px;top:940.90px;" width="13.33" height="13.33" viewBox="0 0 24 24"><g fill="none" stroke="#ffffff" stroke-width="2.1" stroke-linecap="round" stroke-linejoin="round"><path d="M12 2a10 10 0 0 1 7.38 16.75"/><path d="m16 12-4-4-4 4"/><path d="M12 16V8"/><path d="M2.5 8.875a10 10 0 0 0-.5 3"/><path d="M2.83 16a10 10 0 0 0 2.43 3.4"/><path d="M4.636 5.235a10 10 0 0 1 .891-.857"/><path d="M8.644 21.42a10 10 0 0 0 7.631-.38"/></g></svg>
<div class="b" style="left:122.90px;top:987.00px;width:325.10px;height:1.00px;background:#d5dbe6;"></div>
<span class="t" style="left:133.90px;top:966.00px;font-size:19px;line-height:19px;color:#1f2937;transform:scaleX(1.0062);">empty_2</span>
<div class="b" style="left:450.00px;top:964.91px;width:19.00px;height:18.67px;background:#03701a;border-radius:5.4px;"></div>
<svg class="b" style="left:452.83px;top:967.57px;" width="13.33" height="13.33" viewBox="0 0 24 24"><g fill="none" stroke="#ffffff" stroke-width="2.1" stroke-linecap="round" stroke-linejoin="round"><polyline points="20 6 9 17 4 12"/></g></svg>
<div class="b" style="left:474.00px;top:964.91px;width:19.00px;height:18.67px;background:#03701a;border-radius:5.4px;"></div>
<svg class="b" style="left:476.83px;top:967.57px;" width="13.33" height="13.33" viewBox="0 0 24 24"><g fill="none" stroke="#ffffff" stroke-width="2.1" stroke-linecap="round" stroke-linejoin="round"><polyline points="20 6 9 17 4 12"/></g></svg>
<div class="b" style="left:498.00px;top:964.91px;width:19.00px;height:18.67px;background:#03701a;border-radius:5.4px;"></div>
<svg class="b" style="left:500.83px;top:967.57px;" width="13.33" height="13.33" viewBox="0 0 24 24"><g fill="none" stroke="#ffffff" stroke-width="2.1" stroke-linecap="round" stroke-linejoin="round"><polyline points="20 6 9 17 4 12"/></g></svg>
<div class="b" style="left:522.00px;top:964.91px;width:19.00px;height:18.67px;background:#03701a;border-radius:5.4px;"></div>
<svg class="b" style="left:524.83px;top:967.57px;" width="13.33" height="13.33" viewBox="0 0 24 24"><g fill="none" stroke="#ffffff" stroke-width="2.1" stroke-linecap="round" stroke-linejoin="round"><polyline points="20 6 9 17 4 12"/></g></svg>
<div class="b" style="left:546.00px;top:964.91px;width:19.00px;height:18.67px;background:#03701a;border-radius:5.4px;"></div>
<svg class="b" style="left:548.83px;top:967.57px;" width="13.33" height="13.33" viewBox="0 0 24 24"><g fill="none" stroke="#ffffff" stroke-width="2.1" stroke-linecap="round" stroke-linejoin="round"><polyline points="20 6 9 17 4 12"/></g></svg>
<div class="b" style="left:570.00px;top:964.91px;width:19.00px;height:18.67px;background:#03701a;border-radius:5.4px;"></div>
<svg class="b" style="left:572.83px;top:967.57px;" width="13.33" height="13.33" viewBox="0 0 24 24"><g fill="none" stroke="#ffffff" stroke-width="2.1" stroke-linecap="round" stroke-linejoin="round"><polyline points="20 6 9 17 4 12"/></g></svg>
<div class="b" style="left:594.00px;top:964.91px;width:19.00px;height:18.67px;background:#03701a;border-radius:5.4px;"></div>
<svg class="b" style="left:596.83px;top:967.57px;" width="13.33" height="13.33" viewBox="0 0 24 24"><g fill="none" stroke="#ffffff" stroke-width="2.1" stroke-linecap="round" stroke-linejoin="round"><polyline points="20 6 9 17 4 12"/></g></svg>
<div class="b" style="left:618.00px;top:964.91px;width:19.00px;height:18.67px;background:#03701a;border-radius:5.4px;"></div>
<svg class="b" style="left:620.83px;top:967.57px;" width="13.33" height="13.33" viewBox="0 0 24 24"><g fill="none" stroke="#ffffff" stroke-width="2.1" stroke-linecap="round" stroke-linejoin="round"><polyline points="20 6 9 17 4 12"/></g></svg>
<div class="b" style="left:642.00px;top:964.91px;width:19.00px;height:18.67px;background:#03701a;border-radius:5.4px;"></div>
<svg class="b" style="left:644.83px;top:967.57px;" width="13.33" height="13.33" viewBox="0 0 24 24"><g fill="none" stroke="#ffffff" stroke-width="2.1" stroke-linecap="round" stroke-linejoin="round"><polyline points="20 6 9 17 4 12"/></g></svg>
<div class="b" style="left:666.00px;top:964.91px;width:19.00px;height:18.67px;background:#03701a;border-radius:5.4px;"></div>
<svg class="b" style="left:668.83px;top:967.57px;" width="13.33" height="13.33" viewBox="0 0 24 24"><g fill="none" stroke="#ffffff" stroke-width="2.1" stroke-linecap="round" stroke-linejoin="round"><polyline points="20 6 9 17 4 12"/></g></svg>
<div class="b" style="left:122.90px;top:1013.00px;width:325.10px;height:1.00px;background:#d5dbe6;"></div>
<span class="t" style="left:133.90px;top:993.00px;font-size:19px;line-height:19px;color:#1f2937;">chain_t18</span>
<div class="b" style="left:450.00px;top:991.58px;width:19.00px;height:18.67px;background:#03701a;border-radius:5.4px;"></div>
<svg class="b" style="left:452.83px;top:994.24px;" width="13.33" height="13.33" viewBox="0 0 24 24"><g fill="none" stroke="#ffffff" stroke-width="2.1" stroke-linecap="round" stroke-linejoin="round"><polyline points="20 6 9 17 4 12"/></g></svg>
<div class="b" style="left:474.00px;top:991.58px;width:19.00px;height:18.67px;background:#cc5024;border-radius:5.4px;"></div>
<svg class="b" style="left:476.83px;top:994.24px;" width="13.33" height="13.33" viewBox="0 0 24 24"><g fill="none" stroke="#ffffff" stroke-width="2.1" stroke-linecap="round" stroke-linejoin="round"><path d="M12 2a10 10 0 0 1 7.38 16.75"/><path d="m16 12-4-4-4 4"/><path d="M12 16V8"/><path d="M2.5 8.875a10 10 0 0 0-.5 3"/><path d="M2.83 16a10 10 0 0 0 2.43 3.4"/><path d="M4.636 5.235a10 10 0 0 1 .891-.857"/><path d="M8.644 21.42a10 10 0 0 0 7.631-.38"/></g></svg>
<div class="b" style="left:498.00px;top:991.58px;width:19.00px;height:18.67px;background:#cc5024;border-radius:5.4px;"></div>
<svg class="b" style="left:500.83px;top:994.24px;" width="13.33" height="13.33" viewBox="0 0 24 24"><g fill="none" stroke="#ffffff" stroke-width="2.1" stroke-linecap="round" stroke-linejoin="round"><path d="M12 2a10 10 0 0 1 7.38 16.75"/><path d="m16 12-4-4-4 4"/><path d="M12 16V8"/><path d="M2.5 8.875a10 10 0 0 0-.5 3"/><path d="M2.83 16a10 10 0 0 0 2.43 3.4"/><path d="M4.636 5.235a10 10 0 0 1 .891-.857"/><path d="M8.644 21.42a10 10 0 0 0 7.631-.38"/></g></svg>
<div class="b" style="left:522.00px;top:991.58px;width:19.00px;height:18.67px;background:#cc5024;border-radius:5.4px;"></div>
<svg class="b" style="left:524.83px;top:994.24px;" width="13.33" height="13.33" viewBox="0 0 24 24"><g fill="none" stroke="#ffffff" stroke-width="2.1" stroke-linecap="round" stroke-linejoin="round"><path d="M12 2a10 10 0 0 1 7.38 16.75"/><path d="m16 12-4-4-4 4"/><path d="M12 16V8"/><path d="M2.5 8.875a10 10 0 0 0-.5 3"/><path d="M2.83 16a10 10 0 0 0 2.43 3.4"/><path d="M4.636 5.235a10 10 0 0 1 .891-.857"/><path d="M8.644 21.42a10 10 0 0 0 7.631-.38"/></g></svg>
<div class="b" style="left:546.00px;top:991.58px;width:19.00px;height:18.67px;background:#cc5024;border-radius:5.4px;"></div>
<svg class="b" style="left:548.83px;top:994.24px;" width="13.33" height="13.33" viewBox="0 0 24 24"><g fill="none" stroke="#ffffff" stroke-width="2.1" stroke-linecap="round" stroke-linejoin="round"><path d="M12 2a10 10 0 0 1 7.38 16.75"/><path d="m16 12-4-4-4 4"/><path d="M12 16V8"/><path d="M2.5 8.875a10 10 0 0 0-.5 3"/><path d="M2.83 16a10 10 0 0 0 2.43 3.4"/><path d="M4.636 5.235a10 10 0 0 1 .891-.857"/><path d="M8.644 21.42a10 10 0 0 0 7.631-.38"/></g></svg>
<div class="b" style="left:570.00px;top:991.58px;width:19.00px;height:18.67px;background:#03701a;border-radius:5.4px;"></div>
<svg class="b" style="left:572.83px;top:994.24px;" width="13.33" height="13.33" viewBox="0 0 24 24"><g fill="none" stroke="#ffffff" stroke-width="2.1" stroke-linecap="round" stroke-linejoin="round"><polyline points="20 6 9 17 4 12"/></g></svg>
<div class="b" style="left:594.00px;top:991.58px;width:19.00px;height:18.67px;background:#03701a;border-radius:5.4px;"></div>
<svg class="b" style="left:596.83px;top:994.24px;" width="13.33" height="13.33" viewBox="0 0 24 24"><g fill="none" stroke="#ffffff" stroke-width="2.1" stroke-linecap="round" stroke-linejoin="round"><polyline points="20 6 9 17 4 12"/></g></svg>
<div class="b" style="left:618.00px;top:991.58px;width:19.00px;height:18.67px;background:#03701a;border-radius:5.4px;"></div>
<svg class="b" style="left:620.83px;top:994.24px;" width="13.33" height="13.33" viewBox="0 0 24 24"><g fill="none" stroke="#ffffff" stroke-width="2.1" stroke-linecap="round" stroke-linejoin="round"><polyline points="20 6 9 17 4 12"/></g></svg>
<div class="b" style="left:642.00px;top:991.58px;width:19.00px;height:18.67px;background:#03701a;border-radius:5.4px;"></div>
<svg class="b" style="left:644.83px;top:994.24px;" width="13.33" height="13.33" viewBox="0 0 24 24"><g fill="none" stroke="#ffffff" stroke-width="2.1" stroke-linecap="round" stroke-linejoin="round"><polyline points="20 6 9 17 4 12"/></g></svg>
<div class="b" style="left:666.00px;top:991.58px;width:19.00px;height:18.67px;background:#cc5024;border-radius:5.4px;"></div>
<svg class="b" style="left:668.83px;top:994.24px;" width="13.33" height="13.33" viewBox="0 0 24 24"><g fill="none" stroke="#ffffff" stroke-width="2.1" stroke-linecap="round" stroke-linejoin="round"><path d="M12 2a10 10 0 0 1 7.38 16.75"/><path d="m16 12-4-4-4 4"/><path d="M12 16V8"/><path d="M2.5 8.875a10 10 0 0 0-.5 3"/><path d="M2.83 16a10 10 0 0 0 2.43 3.4"/><path d="M4.636 5.235a10 10 0 0 1 .891-.857"/><path d="M8.644 21.42a10 10 0 0 0 7.631-.38"/></g></svg>
<div class="b" style="left:122.90px;top:1040.00px;width:325.10px;height:1.00px;background:#d5dbe6;"></div>
<span class="t" style="left:133.90px;top:1020.00px;font-size:19px;line-height:19px;color:#1f2937;">chain_t19</span>
<div class="b" style="left:450.00px;top:1018.24px;width:19.00px;height:18.67px;background:#03701a;border-radius:5.4px;"></div>
<svg class="b" style="left:452.83px;top:1020.90px;" width="13.33" height="13.33" viewBox="0 0 24 24"><g fill="none" stroke="#ffffff" stroke-width="2.1" stroke-linecap="round" stroke-linejoin="round"><polyline points="20 6 9 17 4 12"/></g></svg>
<div class="b" style="left:474.00px;top:1018.24px;width:19.00px;height:18.67px;background:#cc5024;border-radius:5.4px;"></div>
<svg class="b" style="left:476.83px;top:1020.90px;" width="13.33" height="13.33" viewBox="0 0 24 24"><g fill="none" stroke="#ffffff" stroke-width="2.1" stroke-linecap="round" stroke-linejoin="round"><path d="M12 2a10 10 0 0 1 7.38 16.75"/><path d="m16 12-4-4-4 4"/><path d="M12 16V8"/><path d="M2.5 8.875a10 10 0 0 0-.5 3"/><path d="M2.83 16a10 10 0 0 0 2.43 3.4"/><path d="M4.636 5.235a10 10 0 0 1 .891-.857"/><path d="M8.644 21.42a10 10 0 0 0 7.631-.38"/></g></svg>
<div class="b" style="left:498.00px;top:1018.24px;width:19.00px;height:18.67px;background:#cc5024;border-radius:5.4px;"></div>
<svg class="b" style="left:500.83px;top:1020.90px;" width="13.33" height="13.33" viewBox="0 0 24 24"><g fill="none" stroke="#ffffff" stroke-width="2.1" stroke-linecap="round" stroke-linejoin="round"><path d="M12 2a10 10 0 0 1 7.38 16.75"/><path d="m16 12-4-4-4 4"/><path d="M12 16V8"/><path d="M2.5 8.875a10 10 0 0 0-.5 3"/><path d="M2.83 16a10 10 0 0 0 2.43 3.4"/><path d="M4.636 5.235a10 10 0 0 1 .891-.857"/><path d="M8.644 21.42a10 10 0 0 0 7.631-.38"/></g></svg>
<div class="b" style="left:522.00px;top:1018.24px;width:19.00px;height:18.67px;background:#cc5024;border-radius:5.4px;"></div>
<svg class="b" style="left:524.83px;top:1020.90px;" width="13.33" height="13.33" viewBox="0 0 24 24"><g fill="none" stroke="#ffffff" stroke-width="2.1" stroke-linecap="round" stroke-linejoin="round"><path d="M12 2a10 10 0 0 1 7.38 16.75"/><path d="m16 12-4-4-4 4"/><path d="M12 16V8"/><path d="M2.5 8.875a10 10 0 0 0-.5 3"/><path d="M2.83 16a10 10 0 0 0 2.43 3.4"/><path d="M4.636 5.235a10 10 0 0 1 .891-.857"/><path d="M8.644 21.42a10 10 0 0 0 7.631-.38"/></g></svg>
<div class="b" style="left:546.00px;top:1018.24px;width:19.00px;height:18.67px;background:#cc5024;border-radius:5.4px;"></div>
<svg class="b" style="left:548.83px;top:1020.90px;" width="13.33" height="13.33" viewBox="0 0 24 24"><g fill="none" stroke="#ffffff" stroke-width="2.1" stroke-linecap="round" stroke-linejoin="round"><path d="M12 2a10 10 0 0 1 7.38 16.75"/><path d="m16 12-4-4-4 4"/><path d="M12 16V8"/><path d="M2.5 8.875a10 10 0 0 0-.5 3"/><path d="M2.83 16a10 10 0 0 0 2.43 3.4"/><path d="M4.636 5.235a10 10 0 0 1 .891-.857"/><path d="M8.644 21.42a10 10 0 0 0 7.631-.38"/></g></svg>
<div class="b" style="left:570.00px;top:1018.24px;width:19.00px;height:18.67px;background:#03701a;border-radius:5.4px;"></div>
<svg class="b" style="left:572.83px;top:1020.90px;" width="13.33" height="13.33" viewBox="0 0 24 24"><g fill="none" stroke="#ffffff" stroke-width="2.1" stroke-linecap="round" stroke-linejoin="round"><polyline points="20 6 9 17 4 12"/></g></svg>
<div class="b" style="left:594.00px;top:1018.24px;width:19.00px;height:18.67px;background:#03701a;border-radius:5.4px;"></div>
<svg class="b" style="left:596.83px;top:1020.90px;" width="13.33" height="13.33" viewBox="0 0 24 24"><g fill="none" stroke="#ffffff" stroke-width="2.1" stroke-linecap="round" stroke-linejoin="round"><polyline points="20 6 9 17 4 12"/></g></svg>
<div class="b" style="left:618.00px;top:1018.24px;width:19.00px;height:18.67px;background:#03701a;border-radius:5.4px;"></div>
<svg class="b" style="left:620.83px;top:1020.90px;" width="13.33" height="13.33" viewBox="0 0 24 24"><g fill="none" stroke="#ffffff" stroke-width="2.1" stroke-linecap="round" stroke-linejoin="round"><polyline points="20 6 9 17 4 12"/></g></svg>
<div class="b" style="left:642.00px;top:1018.24px;width:19.00px;height:18.67px;background:#03701a;border-radius:5.4px;"></div>
<svg class="b" style="left:644.83px;top:1020.90px;" width="13.33" height="13.33" viewBox="0 0 24 24"><g fill="none" stroke="#ffffff" stroke-width="2.1" stroke-linecap="round" stroke-linejoin="round"><polyline points="20 6 9 17 4 12"/></g></svg>
<div class="b" style="left:666.00px;top:1018.24px;width:19.00px;height:18.67px;background:#cc5024;border-radius:5.4px;"></div>
<svg class="b" style="left:668.83px;top:1020.90px;" width="13.33" height="13.33" viewBox="0 0 24 24"><g fill="none" stroke="#ffffff" stroke-width="2.1" stroke-linecap="round" stroke-linejoin="round"><path d="M12 2a10 10 0 0 1 7.38 16.75"/><path d="m16 12-4-4-4 4"/><path d="M12 16V8"/><path d="M2.5 8.875a10 10 0 0 0-.5 3"/><path d="M2.83 16a10 10 0 0 0 2.43 3.4"/><path d="M4.636 5.235a10 10 0 0 1 .891-.857"/><path d="M8.644 21.42a10 10 0 0 0 7.631-.38"/></g></svg>
<div class="b" style="left:122.90px;top:1067.00px;width:325.10px;height:1.00px;background:#d5dbe6;"></div>
<span class="t" style="left:133.90px;top:1046.00px;font-size:19px;line-height:19px;color:#1f2937;">end_chain</span>
<div class="b" style="left:450.00px;top:1044.91px;width:19.00px;height:18.67px;background:#03701a;border-radius:5.4px;"></div>
<svg class="b" style="left:452.83px;top:1047.57px;" width="13.33" height="13.33" viewBox="0 0 24 24"><g fill="none" stroke="#ffffff" stroke-width="2.1" stroke-linecap="round" stroke-linejoin="round"><polyline points="20 6 9 17 4 12"/></g></svg>
<div class="b" style="left:474.00px;top:1044.91px;width:19.00px;height:18.67px;background:#cc5024;border-radius:5.4px;"></div>
<svg class="b" style="left:476.83px;top:1047.57px;" width="13.33" height="13.33" viewBox="0 0 24 24"><g fill="none" stroke="#ffffff" stroke-width="2.1" stroke-linecap="round" stroke-linejoin="round"><path d="M12 2a10 10 0 0 1 7.38 16.75"/><path d="m16 12-4-4-4 4"/><path d="M12 16V8"/><path d="M2.5 8.875a10 10 0 0 0-.5 3"/><path d="M2.83 16a10 10 0 0 0 2.43 3.4"/><path d="M4.636 5.235a10 10 0 0 1 .891-.857"/><path d="M8.644 21.42a10 10 0 0 0 7.631-.38"/></g></svg>
<div class="b" style="left:498.00px;top:1044.91px;width:19.00px;height:18.67px;background:#cc5024;border-radius:5.4px;"></div>
<svg class="b" style="left:500.83px;top:1047.57px;" width="13.33" height="13.33" viewBox="0 0 24 24"><g fill="none" stroke="#ffffff" stroke-width="2.1" stroke-linecap="round" stroke-linejoin="round"><path d="M12 2a10 10 0 0 1 7.38 16.75"/><path d="m16 12-4-4-4 4"/><path d="M12 16V8"/><path d="M2.5 8.875a10 10 0 0 0-.5 3"/><path d="M2.83 16a10 10 0 0 0 2.43 3.4"/><path d="M4.636 5.235a10 10 0 0 1 .891-.857"/><path d="M8.644 21.42a10 10 0 0 0 7.631-.38"/></g></svg>
<div class="b" style="left:522.00px;top:1044.91px;width:19.00px;height:18.67px;background:#cc5024;border-radius:5.4px;"></div>
<svg class="b" style="left:524.83px;top:1047.57px;" width="13.33" height="13.33" viewBox="0 0 24 24"><g fill="none" stroke="#ffffff" stroke-width="2.1" stroke-linecap="round" stroke-linejoin="round"><path d="M12 2a10 10 0 0 1 7.38 16.75"/><path d="m16 12-4-4-4 4"/><path d="M12 16V8"/><path d="M2.5 8.875a10 10 0 0 0-.5 3"/><path d="M2.83 16a10 10 0 0 0 2.43 3.4"/><path d="M4.636 5.235a10 10 0 0 1 .891-.857"/><path d="M8.644 21.42a10 10 0 0 0 7.631-.38"/></g></svg>
<div class="b" style="left:546.00px;top:1044.91px;width:19.00px;height:18.67px;background:#cc5024;border-radius:5.4px;"></div>
<svg class="b" style="left:548.83px;top:1047.57px;" width="13.33" height="13.33" viewBox="0 0 24 24"><g fill="none" stroke="#ffffff" stroke-width="2.1" stroke-linecap="round" stroke-linejoin="round"><path d="M12 2a10 10 0 0 1 7.38 16.75"/><path d="m16 12-4-4-4 4"/><path d="M12 16V8"/><path d="M2.5 8.875a10 10 0 0 0-.5 3"/><path d="M2.83 16a10 10 0 0 0 2.43 3.4"/><path d="M4.636 5.235a10 10 0 0 1 .891-.857"/><path d="M8.644 21.42a10 10 0 0 0 7.631-.38"/></g></svg>
<div class="b" style="left:570.00px;top:1044.91px;width:19.00px;height:18.67px;background:#03701a;border-radius:5.4px;"></div>
<svg class="b" style="left:572.83px;top:1047.57px;" width="13.33" height="13.33" viewBox="0 0 24 24"><g fill="none" stroke="#ffffff" stroke-width="2.1" stroke-linecap="round" stroke-linejoin="round"><polyline points="20 6 9 17 4 12"/></g></svg>
<div class="b" style="left:594.00px;top:1044.91px;width:19.00px;height:18.67px;background:#03701a;border-radius:5.4px;"></div>
<svg class="b" style="left:596.83px;top:1047.57px;" width="13.33" height="13.33" viewBox="0 0 24 24"><g fill="none" stroke="#ffffff" stroke-width="2.1" stroke-linecap="round" stroke-linejoin="round"><polyline points="20 6 9 17 4 12"/></g></svg>
<div class="b" style="left:618.00px;top:1044.91px;width:19.00px;height:18.67px;background:#03701a;border-radius:5.4px;"></div>
<svg class="b" style="left:620.83px;top:1047.57px;" width="13.33" height="13.33" viewBox="0 0 24 24"><g fill="none" stroke="#ffffff" stroke-width="2.1" stroke-linecap="round" stroke-linejoin="round"><polyline points="20 6 9 17 4 12"/></g></svg>
<div class="b" style="left:642.00px;top:1044.91px;width:19.00px;height:18.67px;background:#03701a;border-radius:5.4px;"></div>
<svg class="b" style="left:644.83px;top:1047.57px;" width="13.33" height="13.33" viewBox="0 0 24 24"><g fill="none" stroke="#ffffff" stroke-width="2.1" stroke-linecap="round" stroke-linejoin="round"><polyline points="20 6 9 17 4 12"/></g></svg>
<div class="b" style="left:666.00px;top:1044.91px;width:19.00px;height:18.67px;background:#cc5024;border-radius:5.4px;"></div>
<svg class="b" style="left:668.83px;top:1047.57px;" width="13.33" height="13.33" viewBox="0 0 24 24"><g fill="none" stroke="#ffffff" stroke-width="2.1" stroke-linecap="round" stroke-linejoin="round"><path d="M12 2a10 10 0 0 1 7.38 16.75"/><path d="m16 12-4-4-4 4"/><path d="M12 16V8"/><path d="M2.5 8.875a10 10 0 0 0-.5 3"/><path d="M2.83 16a10 10 0 0 0 2.43 3.4"/><path d="M4.636 5.235a10 10 0 0 1 .891-.857"/><path d="M8.644 21.42a10 10 0 0 0 7.631-.38"/></g></svg>
<div class="b" style="left:733.00px;top:314.00px;width:301.00px;height:53.00px;background:#fff;border:1px solid #d7deeb;border-radius:6px;"></div>
<svg class="b" style="left:749.10px;top:331.50px;" width="18.67" height="18.67" viewBox="0 0 24 24"><g fill="none" stroke="#2d3a52" stroke-width="2" stroke-linecap="round" stroke-linejoin="round"><circle cx="11" cy="11" r="8"/><line x1="21" y1="21" x2="16.65" y2="16.65"/></g></svg>
<span class="t" style="left:780.50px;top:331.00px;font-size:19px;line-height:19px;color:#5d6c85;transform:scaleX(0.9895);">Search tasks</span>
<div class="b" style="left:733.00px;top:374.00px;width:267.00px;height:53.00px;background:#fff;border:1px solid #d7deeb;border-radius:6px;"></div>
<span class="t" style="left:750.70px;top:391.00px;font-size:19px;line-height:19px;color:#5d6c85;transform:scaleX(1.0184);">Select operators</span>
<svg class="b" style="left:961.98px;top:390.20px;" width="21.33" height="21.33" viewBox="0 0 24 24"><g fill="none" stroke="#2d3a52" stroke-width="2" stroke-linecap="round" stroke-linejoin="round"><polyline points="6 9 12 15 18 9"/></g></svg>
<div class="b" style="left:1282.00px;top:374.00px;width:267.00px;height:53.00px;background:#fff;border:1px solid #d7deeb;border-radius:6px;"></div>
<span class="t" style="left:1299.80px;top:391.00px;font-size:19px;line-height:19px;color:#5d6c85;transform:scaleX(1.0303);">Select trigger rules</span>
<svg class="b" style="left:1511.83px;top:390.20px;" width="21.33" height="21.33" viewBox="0 0 24 24"><g fill="none" stroke="#2d3a52" stroke-width="2" stroke-linecap="round" stroke-linejoin="round"><polyline points="6 9 12 15 18 9"/></g></svg>
<div class="b" style="left:1831.00px;top:374.00px;width:267.00px;height:53.00px;background:#fff;border:1px solid #d7deeb;border-radius:6px;"></div>
<span class="t" style="left:1849.00px;top:391.00px;font-size:19px;line-height:19px;color:#5d6c85;transform:scaleX(1.0163);">Select retry values</span>
<svg class="b" style="left:2061.23px;top:390.20px;" width="21.33" height="21.33" viewBox="0 0 24 24"><g fill="none" stroke="#2d3a52" stroke-width="2" stroke-linecap="round" stroke-linejoin="round"><polyline points="6 9 12 15 18 9"/></g></svg>
<div class="b" style="left:2381.00px;top:374.00px;width:266.00px;height:53.00px;background:#fff;border:1px solid #d7deeb;border-radius:6px;"></div>
<span class="t" style="left:2398.50px;top:391.00px;font-size:19px;line-height:19px;color:#5d6c85;transform:scaleX(1.0107);">Select mapped</span>
<svg class="b" style="left:2610.83px;top:390.20px;" width="21.33" height="21.33" viewBox="0 0 24 24"><g fill="none" stroke="#2d3a52" stroke-width="2" stroke-linecap="round" stroke-linejoin="round"><polyline points="6 9 12 15 18 9"/></g></svg>
<div class="b" style="left:733.00px;top:435.00px;width:1914.00px;height:162.00px;background:#fff;border:1px solid #c9d0dc;border-radius:11px;"></div>
<span class="t" style="left:750.70px;top:454.00px;font-size:21.5px;line-height:21.5px;color:#2760ea;font-weight:700;transform:scaleX(1.0198);">chain_linear_t0</span>
<span class="t" style="left:750.70px;top:491.00px;font-size:16.5px;line-height:16.5px;color:#45556f;-webkit-text-stroke:0.55px #45556f;transform:scaleX(1.0677);">Operator</span>
<span class="t" style="left:1226.00px;top:491.00px;font-size:16.5px;line-height:16.5px;color:#45556f;-webkit-text-stroke:0.55px #45556f;transform:scaleX(1.0482);">Trigger Rule</span>
<span class="t" style="left:1701.20px;top:491.00px;font-size:16.5px;line-height:16.5px;color:#45556f;-webkit-text-stroke:0.55px #45556f;transform:scaleX(1.0646);">Last Instance</span>
<span class="t" style="left:750.70px;top:529.00px;font-size:19px;line-height:19px;color:#1a202c;transform:scaleX(0.9541);">@task</span>
<span class="t" style="left:1226.00px;top:529.00px;font-size:19px;line-height:19px;color:#1a202c;transform:scaleX(1.0046);">all_success</span>
<span class="t" style="left:1702.00px;top:530.00px;font-size:19px;line-height:19px;color:#2760ea;transform:scaleX(1.0544);">2025-09-23 17:25:39</span>
<div class="b" style="left:1897.00px;top:523.90px;width:29.00px;height:29.00px;background:#03701a;border-radius:50%;"></div>
<svg class="b" style="left:1902.20px;top:529.10px;" width="18.67" height="18.67" viewBox="0 0 24 24"><g fill="none" stroke="#ffffff" stroke-width="2.1" stroke-linecap="round" stroke-linejoin="round"><polyline points="20 6 9 17 4 12"/></g></svg>
<div class="b" style="left:2412.00px;top:552.10px;width:5.20px;height:28.00px;background:#03701a;border-radius:2.6px;"></div>
<div class="b" style="left:2428.00px;top:558.10px;width:5.20px;height:22.00px;background:#03701a;border-radius:2.6px;"></div>
<div class="b" style="left:2444.00px;top:556.10px;width:5.20px;height:24.00px;background:#03701a;border-radius:2.6px;"></div>
<div class="b" style="left:2460.00px;top:564.10px;width:5.20px;height:16.00px;background:#03701a;border-radius:2.6px;"></div>
<div class="b" style="left:2476.00px;top:561.10px;width:5.20px;height:19.00px;background:#03701a;border-radius:2.6px;"></div>
<div class="b" style="left:2492.00px;top:526.10px;width:5.20px;height:54.00px;background:#03701a;border-radius:2.6px;"></div>
<div class="b" style="left:2508.00px;top:534.10px;width:5.20px;height:46.00px;background:#03701a;border-radius:2.6px;"></div>
<div class="b" style="left:2524.00px;top:500.10px;width:5.20px;height:80.00px;background:#03701a;border-radius:2.6px;"></div>
<div class="b" style="left:2540.00px;top:538.10px;width:5.20px;height:42.00px;background:#03701a;border-radius:2.6px;"></div>
<div class="b" style="left:2556.00px;top:535.10px;width:5.20px;height:45.00px;background:#03701a;border-radius:2.6px;"></div>
<div class="b" style="left:2572.00px;top:532.10px;width:5.20px;height:48.00px;background:#03701a;border-radius:2.6px;"></div>
<div class="b" style="left:2588.00px;top:527.10px;width:5.20px;height:53.00px;background:#03701a;border-radius:2.6px;"></div>
<div class="b" style="left:2604.00px;top:564.10px;width:5.20px;height:16.00px;background:#03701a;border-radius:2.6px;"></div>
<div class="b" style="left:2620.00px;top:568.10px;width:5.20px;height:12.00px;background:#03701a;border-radius:2.6px;"></div>
<div class="b" style="left:733.00px;top:607.00px;width:1914.00px;height:162.00px;background:#fff;border:1px solid #c9d0dc;border-radius:11px;"></div>
<span class="t" style="left:750.70px;top:626.00px;font-size:21.5px;line-height:21.5px;color:#2760ea;font-weight:700;transform:scaleX(1.0198);">chain_linear_t1</span>
<span class="t" style="left:750.70px;top:663.00px;font-size:16.5px;line-height:16.5px;color:#45556f;-webkit-text-stroke:0.55px #45556f;transform:scaleX(1.0677);">Operator</span>
<span class="t" style="left:1226.00px;top:663.00px;font-size:16.5px;line-height:16.5px;color:#45556f;-webkit-text-stroke:0.55px #45556f;transform:scaleX(1.0482);">Trigger Rule</span>
<span class="t" style="left:1701.20px;top:663.00px;font-size:16.5px;line-height:16.5px;color:#45556f;-webkit-text-stroke:0.55px #45556f;transform:scaleX(1.0646);">Last Instance</span>
<span class="t" style="left:750.70px;top:701.00px;font-size:19px;line-height:19px;color:#1a202c;transform:scaleX(0.9541);">@task</span>
<span class="t" style="left:1226.00px;top:701.00px;font-size:19px;line-height:19px;color:#1a202c;transform:scaleX(1.0046);">all_success</span>
<span class="t" style="left:1702.00px;top:702.00px;font-size:19px;line-height:19px;color:#2760ea;transform:scaleX(1.0544);">2025-09-23 17:25:39</span>
<div class="b" style="left:1897.00px;top:695.80px;width:29.00px;height:29.00px;background:#03701a;border-radius:50%;"></div>
<svg class="b" style="left:1902.20px;top:701.00px;" width="18.67" height="18.67" viewBox="0 0 24 24"><g fill="none" stroke="#ffffff" stroke-width="2.1" stroke-linecap="round" stroke-linejoin="round"><polyline points="20 6 9 17 4 12"/></g></svg>
<div class="b" style="left:2412.00px;top:717.00px;width:5.20px;height:35.00px;background:#03701a;border-radius:2.6px;"></div>
<div class="b" style="left:2428.00px;top:731.00px;width:5.20px;height:21.00px;background:#03701a;border-radius:2.6px;"></div>
<div class="b" style="left:2444.00px;top:726.00px;width:5.20px;height:26.00px;background:#03701a;border-radius:2.6px;"></div>
<div class="b" style="left:2460.00px;top:734.00px;width:5.20px;height:18.00px;background:#03701a;border-radius:2.6px;"></div>
<div class="b" style="left:2476.00px;top:731.00px;width:5.20px;height:21.00px;background:#03701a;border-radius:2.6px;"></div>
<div class="b" style="left:2492.00px;top:702.00px;width:5.20px;height:50.00px;background:#03701a;border-radius:2.6px;"></div>
<div class="b" style="left:2508.00px;top:696.00px;width:5.20px;height:56.00px;background:#03701a;border-radius:2.6px;"></div>
<div class="b" style="left:2524.00px;top:672.00px;width:5.20px;height:80.00px;background:#03701a;border-radius:2.6px;"></div>
<div class="b" style="left:2540.00px;top:701.00px;width:5.20px;height:51.00px;background:#03701a;border-radius:2.6px;"></div>
<div class="b" style="left:2556.00px;top:708.00px;width:5.20px;height:44.00px;background:#03701a;border-radius:2.6px;"></div>
<div class="b" style="left:2572.00px;top:704.00px;width:5.20px;height:48.00px;background:#03701a;border-radius:2.6px;"></div>
<div class="b" style="left:2588.00px;top:698.00px;width:5.20px;height:54.00px;background:#03701a;border-radius:2.6px;"></div>
<div class="b" style="left:2604.00px;top:732.00px;width:5.20px;height:20.00px;background:#03701a;border-radius:2.6px;"></div>
<div class="b" style="left:2620.00px;top:735.00px;width:5.20px;height:17.00px;background:#03701a;border-radius:2.6px;"></div>
<div class="b" style="left:733.00px;top:780.00px;width:1914.00px;height:162.00px;background:#fff;border:1px solid #c9d0dc;border-radius:11px;"></div>
<span class="t" style="left:750.70px;top:799.00px;font-size:21.5px;line-height:21.5px;color:#2760ea;font-weight:700;transform:scaleX(1.0198);">chain_linear_t2</span>
<span class="t" style="left:750.70px;top:836.00px;font-size:16.5px;line-height:16.5px;color:#45556f;-webkit-text-stroke:0.55px #45556f;transform:scaleX(1.0677);">Operator</span>
<span class="t" style="left:1226.00px;top:836.00px;font-size:16.5px;line-height:16.5px;color:#45556f;-webkit-text-stroke:0.55px #45556f;transform:scaleX(1.0482);">Trigger Rule</span>
<span class="t" style="left:1701.20px;top:836.00px;font-size:16.5px;line-height:16.5px;color:#45556f;-webkit-text-stroke:0.55px #45556f;transform:scaleX(1.0646);">Last Instance</span>
<span class="t" style="left:750.70px;top:874.00px;font-size:19px;line-height:19px;color:#1a202c;transform:scaleX(0.9541);">@task</span>
<span class="t" style="left:1226.00px;top:874.00px;font-size:19px;line-height:19px;color:#1a202c;transform:scaleX(1.0046);">all_success</span>
<span class="t" style="left:1702.00px;top:875.00px;font-size:19px;line-height:19px;color:#2760ea;transform:scaleX(1.0544);">2025-09-23 17:25:40</span>
<div class="b" style="left:1897.00px;top:868.80px;width:29.00px;height:29.00px;background:#03701a;border-radius:50%;"></div>
<svg class="b" style="left:1902.20px;top:874.00px;" width="18.67" height="18.67" viewBox="0 0 24 24"><g fill="none" stroke="#ffffff" stroke-width="2.1" stroke-linecap="round" stroke-linejoin="round"><polyline points="20 6 9 17 4 12"/></g></svg>
<div class="b" style="left:2412.00px;top:906.00px;width:5.20px;height:19.00px;background:#03701a;border-radius:2.6px;"></div>
<div class="b" style="left:2428.00px;top:907.00px;width:5.20px;height:18.00px;background:#03701a;border-radius:2.6px;"></div>
<div class="b" style="left:2444.00px;top:908.00px;width:5.20px;height:17.00px;background:#03701a;border-radius:2.6px;"></div>
<div class="b" style="left:2460.00px;top:911.00px;width:5.20px;height:14.00px;background:#03701a;border-radius:2.6px;"></div>
<div class="b" style="left:2476.00px;top:890.00px;width:5.20px;height:35.00px;background:#03701a;border-radius:2.6px;"></div>
<div class="b" style="left:2492.00px;top:889.00px;width:5.20px;height:36.00px;background:#03701a;border-radius:2.6px;"></div>
<div class="b" style="left:2508.00px;top:861.00px;width:5.20px;height:64.00px;background:#03701a;border-radius:2.6px;"></div>
<div class="b" style="left:2524.00px;top:882.00px;width:5.20px;height:43.00px;background:#03701a;border-radius:2.6px;"></div>
<div class="b" style="left:2540.00px;top:859.00px;width:5.20px;height:66.00px;background:#03701a;border-radius:2.6px;"></div>
<div class="b" style="left:2556.00px;top:886.00px;width:5.20px;height:39.00px;background:#03701a;border-radius:2.6px;"></div>
<div class="b" style="left:2572.00px;top:845.00px;width:5.20px;height:80.00px;background:#03701a;border-radius:2.6px;"></div>
<div class="b" style="left:2588.00px;top:864.00px;width:5.20px;height:61.00px;background:#03701a;border-radius:2.6px;"></div>
<div class="b" style="left:2604.00px;top:910.00px;width:5.20px;height:15.00px;background:#03701a;border-radius:2.6px;"></div>
<div class="b" style="left:2620.00px;top:904.00px;width:5.20px;height:21.00px;background:#03701a;border-radius:2.6px;"></div>
<div class="b" style="left:733.00px;top:953.00px;width:1914.00px;height:162.00px;background:#fff;border:1px solid #c9d0dc;border-radius:11px;"></div>
<span class="t" style="left:750.70px;top:972.00px;font-size:21.5px;line-height:21.5px;color:#2760ea;font-weight:700;transform:scaleX(1.0198);">chain_linear_t3</span>
<span class="t" style="left:750.70px;top:1009.00px;font-size:16.5px;line-height:16.5px;color:#45556f;-webkit-text-stroke:0.55px #45556f;transform:scaleX(1.0677);">Operator</span>
<span class="t" style="left:1226.00px;top:1009.00px;font-size:16.5px;line-height:16.5px;color:#45556f;-webkit-text-stroke:0.55px #45556f;transform:scaleX(1.0482);">Trigger Rule</span>
<span class="t" style="left:1701.20px;top:1009.00px;font-size:16.5px;line-height:16.5px;color:#45556f;-webkit-text-stroke:0.55px #45556f;transform:scaleX(1.0646);">Last Instance</span>
<span class="t" style="left:750.70px;top:1047.00px;font-size:19px;line-height:19px;color:#1a202c;transform:scaleX(0.9541);">@task</span>
<span class="t" style="left:1226.00px;top:1047.00px;font-size:19px;line-height:19px;color:#1a202c;transform:scaleX(1.0046);">all_success</span>
<span class="t" style="left:1702.00px;top:1048.00px;font-size:19px;line-height:19px;color:#2760ea;transform:scaleX(1.0544);">2025-09-23 17:25:40</span>
<div class="b" style="left:1897.00px;top:1041.80px;width:29.00px;height:29.00px;background:#03701a;border-radius:50%;"></div>
<svg class="b" style="left:1902.20px;top:1047.00px;" width="18.67" height="18.67" viewBox="0 0 24 24"><g fill="none" stroke="#ffffff" stroke-width="2.1" stroke-linecap="round" stroke-linejoin="round"><polyline points="20 6 9 17 4 12"/></g></svg>
<div class="b" style="left:2412.00px;top:1072.00px;width:5.20px;height:26.00px;background:#03701a;border-radius:2.6px;"></div>
<div class="b" style="left:2428.00px;top:1080.00px;width:5.20px;height:18.00px;background:#03701a;border-radius:2.6px;"></div>
<div class="b" style="left:2444.00px;top:1084.00px;width:5.20px;height:14.00px;background:#03701a;border-radius:2.6px;"></div>
<div class="b" style="left:2460.00px;top:1082.00px;width:5.20px;height:16.00px;background:#03701a;border-radius:2.6px;"></div>
<div class="b" style="left:2476.00px;top:1066.00px;width:5.20px;height:32.00px;background:#03701a;border-radius:2.6px;"></div>
<div class="b" style="left:2492.00px;top:1062.00px;width:5.20px;height:36.00px;background:#03701a;border-radius:2.6px;"></div>
<div class="b" style="left:2508.00px;top:1025.00px;width:5.20px;height:73.00px;background:#03701a;border-radius:2.6px;"></div>
<div class="b" style="left:2524.00px;top:1052.00px;width:5.20px;height:46.00px;background:#03701a;border-radius:2.6px;"></div>
<div class="b" style="left:2540.00px;top:1037.00px;width:5.20px;height:61.00px;background:#03701a;border-radius:2.6px;"></div>
<div class="b" style="left:2556.00px;top:1051.00px;width:5.20px;height:47.00px;background:#03701a;border-radius:2.6px;"></div>
<div class="b" style="left:2572.00px;top:1018.00px;width:5.20px;height:80.00px;background:#03701a;border-radius:2.6px;"></div>
<div class="b" style="left:2588.00px;top:1039.00px;width:5.20px;height:59.00px;background:#03701a;border-radius:2.6px;"></div>
<div class="b" style="left:2604.00px;top:1080.00px;width:5.20px;height:18.00px;background:#03701a;border-radius:2.6px;"></div>
<div class="b" style="left:2620.00px;top:1082.00px;width:5.20px;height:16.00px;background:#03701a;border-radius:2.6px;"></div>
<div class="b" style="left:733.00px;top:1125.00px;width:1914.00px;height:162.00px;background:#fff;border:1px solid #c9d0dc;border-radius:11px;"></div>
<span class="t" style="left:750.70px;top:1144.00px;font-size:21.5px;line-height:21.5px;color:#2760ea;font-weight:700;transform:scaleX(1.0198);">chain_linear_t4</span>
<span class="t" style="left:750.70px;top:1181.00px;font-size:16.5px;line-height:16.5px;color:#45556f;-webkit-text-stroke:0.55px #45556f;transform:scaleX(1.0677);">Operator</span>
<span class="t" style="left:1226.00px;top:1181.00px;font-size:16.5px;line-height:16.5px;color:#45556f;-webkit-text-stroke:0.55px #45556f;transform:scaleX(1.0482);">Trigger Rule</span>
<span class="t" style="left:1701.20px;top:1181.00px;font-size:16.5px;line-height:16.5px;color:#45556f;-webkit-text-stroke:0.55px #45556f;transform:scaleX(1.0646);">Last Instance</span>
<span class="t" style="left:750.70px;top:1219.00px;font-size:19px;line-height:19px;color:#1a202c;transform:scaleX(0.9541);">@task</span>
<span class="t" style="left:1226.00px;top:1219.00px;font-size:19px;line-height:19px;color:#1a202c;transform:scaleX(1.0046);">all_success</span>
<span class="t" style="left:1702.00px;top:1220.00px;font-size:19px;line-height:19px;color:#2760ea;transform:scaleX(1.0544);">2025-09-23 17:25:40</span>
<div class="b" style="left:1897.00px;top:1213.90px;width:29.00px;height:29.00px;background:#03701a;border-radius:50%;"></div>
<svg class="b" style="left:1902.20px;top:1219.10px;" width="18.67" height="18.67" viewBox="0 0 24 24"><g fill="none" stroke="#ffffff" stroke-width="2.1" stroke-linecap="round" stroke-linejoin="round"><polyline points="20 6 9 17 4 12"/></g></svg>
<div class="b" style="left:2412.00px;top:1252.10px;width:5.20px;height:18.00px;background:#03701a;border-radius:2.6px;"></div>
<div class="b" style="left:2428.00px;top:1251.10px;width:5.20px;height:19.00px;background:#03701a;border-radius:2.6px;"></div>
<div class="b" style="left:2444.00px;top:1236.10px;width:5.20px;height:34.00px;background:#03701a;border-radius:2.6px;"></div>
<div class="b" style="left:2460.00px;top:1258.10px;width:5.20px;height:12.00px;background:#03701a;border-radius:2.6px;"></div>
<div class="b" style="left:2476.00px;top:1239.10px;width:5.20px;height:31.00px;background:#03701a;border-radius:2.6px;"></div>
<div class="b" style="left:2492.00px;top:1232.10px;width:5.20px;height:38.00px;background:#03701a;border-radius:2.6px;"></div>
<div class="b" style="left:2508.00px;top:1198.10px;width:5.20px;height:72.00px;background:#03701a;border-radius:2.6px;"></div>
<div class="b" style="left:2524.00px;top:1213.10px;width:5.20px;height:57.00px;background:#03701a;border-radius:2.6px;"></div>
<div class="b" style="left:2540.00px;top:1207.10px;width:5.20px;height:63.00px;background:#03701a;border-radius:2.6px;"></div>
<div class="b" style="left:2556.00px;top:1219.10px;width:5.20px;height:51.00px;background:#03701a;border-radius:2.6px;"></div>
<div class="b" style="left:2572.00px;top:1190.10px;width:5.20px;height:80.00px;background:#03701a;border-radius:2.6px;"></div>
<div class="b" style="left:2588.00px;top:1211.10px;width:5.20px;height:59.00px;background:#03701a;border-radius:2.6px;"></div>
<div class="b" style="left:2604.00px;top:1249.10px;width:5.20px;height:21.00px;background:#03701a;border-radius:2.6px;"></div>
<div class="b" style="left:2620.00px;top:1252.10px;width:5.20px;height:18.00px;background:#03701a;border-radius:2.6px;"></div>
<div class="b" style="left:2658.00px;top:314.00px;width:30.00px;height:982.00px;background:#fafafa;border-left:2px solid #e8e8e8;border-right:2px solid #ededed;"></div>
<div class="b" style="left:2666.00px;top:320.00px;width:16.00px;height:183.00px;background:#c1c1c1;border-radius:8px;"></div>
<div class="b" style="left:722px;top:689.1px;width:26px;height:31.6px;background:#a3afc0;border-radius:0 16px 16px 0;box-shadow:2px 4px 10px rgba(0,0,0,0.12);"></div>
<svg class="b" style="left:718.50px;top:691.50px;" width="25.00" height="25.00" viewBox="0 0 24 24"><g fill="none" stroke="#ffffff" stroke-width="2.9" stroke-linecap="round" stroke-linejoin="round"><polyline points="9 18 15 12 9 6"/></g></svg>
<div class="b" style="left:107px;top:1225px;width:2593px;height:87px;pointer-events:none;background:linear-gradient(to bottom,rgba(0,0,0,0) 0%,rgba(0,0,0,0.006) 25%,rgba(0,0,0,0.02) 48%,rgba(0,0,0,0.042) 66%,rgba(0,0,0,0.07) 82%,rgba(0,0,0,0.11) 100%);-webkit-mask-image:linear-gradient(to right,rgba(0,0,0,0) 0px,rgba(0,0,0,0.5) 90px,#000 260px,#000 1700px,rgba(0,0,0,0.3) 2593px);mask-image:linear-gradient(to right,rgba(0,0,0,0) 0px,rgba(0,0,0,0.5) 90px,#000 260px,#000 1700px,rgba(0,0,0,0.3) 2593px);"></div>
<svg class="b" style="left:0.00px;top:1280.00px;" width="40.00" height="32.00" viewBox="0 1280 40 32"><path fill="#0a0520" d="M0,1288.3 A23.7,23.7 0 0 0 23.7,1312 L0,1312 Z"/></svg>
<svg class="b" style="left:2660.00px;top:1280.00px;" width="40.00" height="32.00" viewBox="2660 1280 40 32"><path fill="#0c0c0e" d="M2700,1303.6 A24.3,24.3 0 0 1 2681,1312 L2700,1312 Z"/></svg>
</div>
</body></html>
